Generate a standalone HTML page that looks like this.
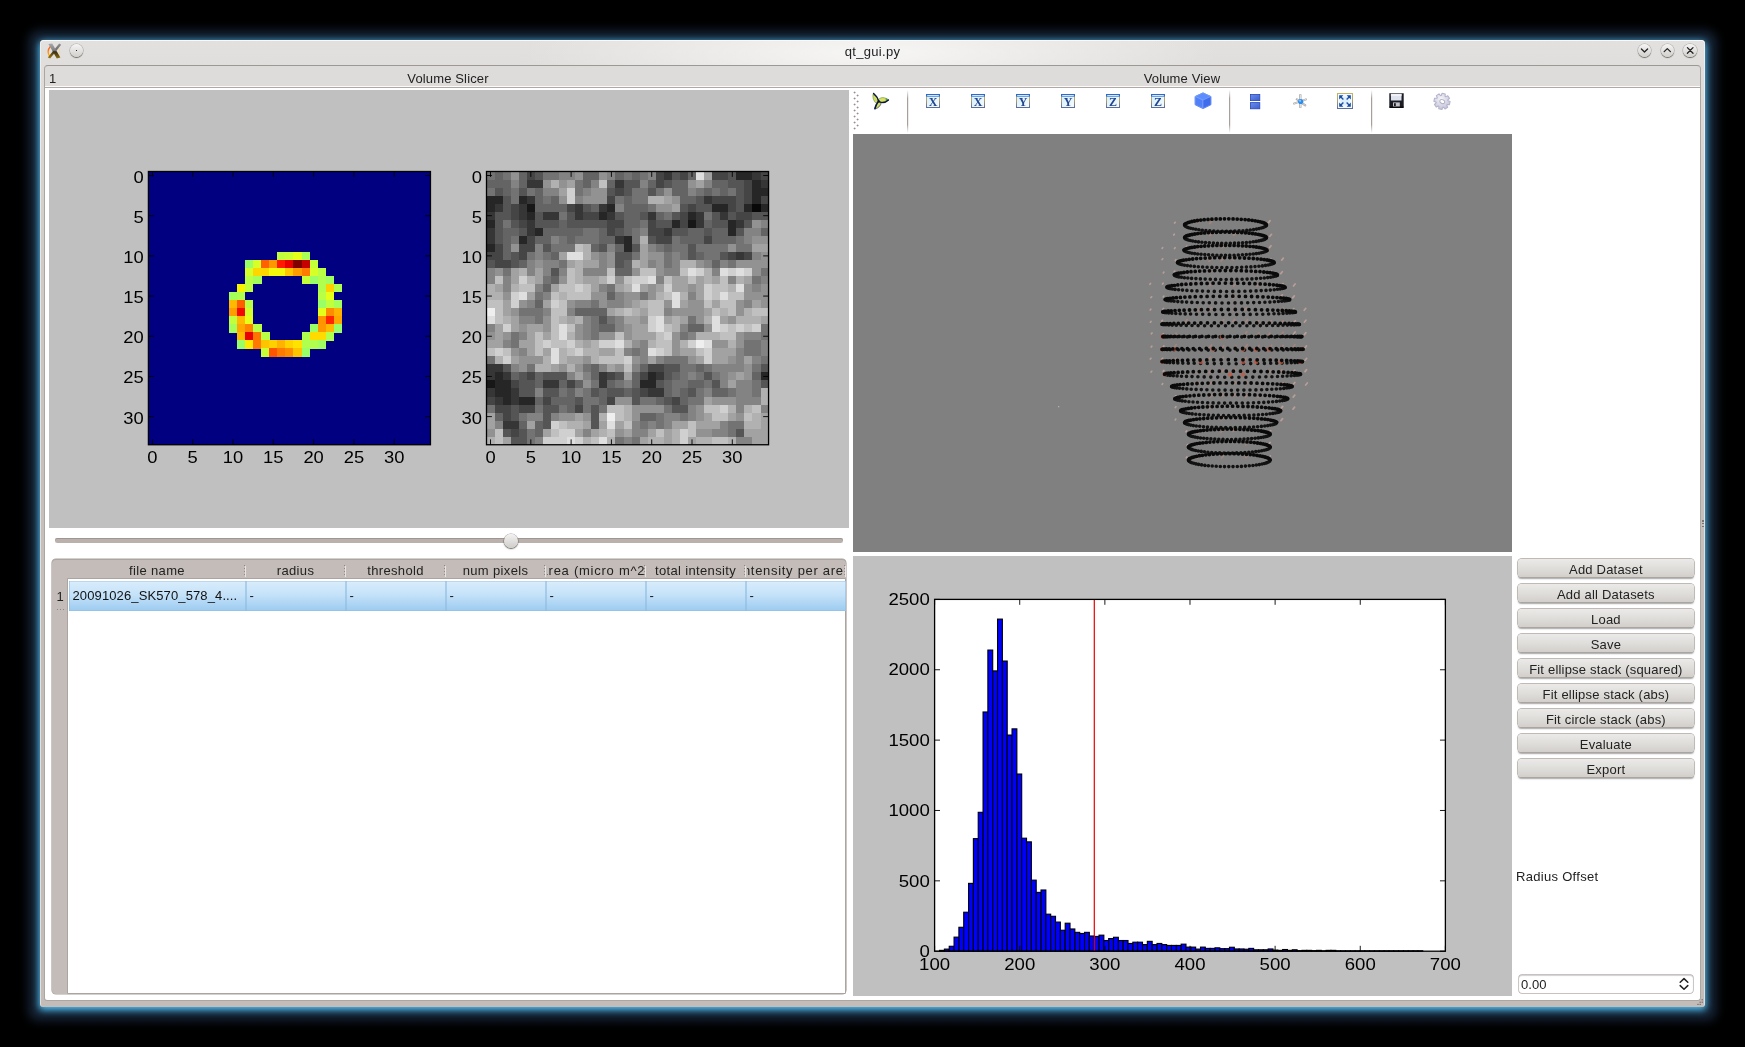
<!DOCTYPE html>
<html><head><meta charset="utf-8"><title>qt_gui.py</title>
<style>

html,body{margin:0;padding:0;background:#000;}
body{width:1745px;height:1047px;position:relative;overflow:hidden;font-family:"Liberation Sans",sans-serif;color:#222;}
.abs{position:absolute;}
#win{will-change:transform;position:absolute;left:40px;top:40px;width:1665px;height:967px;border-radius:4px 4px 3px 3px;
 background:linear-gradient(to bottom,#e3e1df 0px,#dddad8 60px,#d2ceca 180px,#c7c0bc 420px,#c4bcb8 700px,#c4bcb8 100%);
 box-shadow:inset 1px 0 0 rgba(255,250,246,0.55),inset -1px 0 0 rgba(255,250,246,0.55),inset 0 1px 0 rgba(255,255,255,0.8),0 2px 7.7px 0.8px rgb(83,197,250),0 2px 9.9px 11.5px rgb(21,34,51);}
#title{position:absolute;left:0;top:0;width:1665px;height:25px;text-align:center;font-size:13px;line-height:23px;letter-spacing:0.3px;color:#222;}
#inner{position:absolute;left:4px;top:25px;width:1657px;height:936px;border:1px solid #aca6a2;border-top-color:#9c9894;border-radius:4px 4px 3px 3px;box-sizing:border-box;background:#dedcda;}
#white{position:absolute;left:5px;top:47px;width:1655px;height:913.4px;background:#fff;border-top:1px solid #b2a8a3;box-shadow:0 -1px 0 #fbfafa;box-sizing:border-box;border-radius:0 0 3px 3px;}
.hdr{position:absolute;top:30.6px;font-size:13px;line-height:16px;color:#222;white-space:nowrap;letter-spacing:0.15px;}
.wbtn{position:absolute;top:3.5px;width:13.6px;height:13.6px;border-radius:50%;background:linear-gradient(to bottom,#f6f5f4,#d2cfcc);box-shadow:0 1px 1px rgba(0,0,0,0.45),0 0 0 0.5px rgba(120,115,110,0.5);}

#lc{position:absolute;left:9px;top:50px;width:800px;height:438px;}
.tk{font-family:"Liberation Sans",sans-serif;font-size:16.7px;fill:#000;}

#tb{position:absolute;left:813px;top:50px;width:660px;height:44px;}
#scene{position:absolute;left:813px;top:94px;width:659px;height:417.5px;background:#808080;}

#hc{position:absolute;left:813px;top:516px;width:659px;height:440px;}

#groove{position:absolute;left:15px;top:498.4px;width:788px;height:4.6px;border-radius:2.3px;background:#bab1ad;box-shadow:inset 0 1px 0.5px #9e9692;}
#knob{position:absolute;left:463.6px;top:493.6px;width:14px;height:14px;border-radius:50%;background:linear-gradient(to bottom,#f4f3f2,#cfccc9);box-shadow:0 1px 1.5px rgba(0,0,0,0.5),0 0 0 0.6px rgba(110,105,100,0.6);}
#tbl{position:absolute;left:11.5px;top:518.6px;width:794.5px;height:435px;background:#c4bcb8;border-radius:4px;box-shadow:0 0 0 0.6px #aaa29e,inset 0 1px 0 #aca4a0;}
#tbody{position:absolute;left:16.2px;top:20.6px;width:777.8px;height:413.8px;background:#fff;box-shadow:0 0 0 0.7px #a39b97;}
#vhdr{position:absolute;left:0;top:22px;width:15.4px;height:413px;}
.th{position:absolute;top:3.6px;height:18px;line-height:18px;font-size:13px;letter-spacing:0.35px;color:#222;text-align:center;white-space:nowrap;overflow:hidden;}
.grip{position:absolute;top:6px;width:1px;height:11px;background:repeating-linear-gradient(to bottom,#8f8783 0 1px,transparent 1px 3px);box-shadow:1px 1px 0 rgba(255,255,255,0.6);}
.td{position:absolute;top:22.2px;height:29.8px;background:linear-gradient(to bottom,#d9edfc 0%,#c5e2f9 45%,#9ccbf0 100%);font-size:13px;line-height:30px;letter-spacing:0.12px;color:#111;box-shadow:inset 0 0 0 0.6px #8fbbe0, inset 0 1px 0 #e6f3fd;white-space:nowrap;overflow:hidden;}
.td span{padding-left:4px;}

.btn{position:absolute;left:1477.8px;width:176.2px;height:18.4px;border-radius:3.5px;background:linear-gradient(to bottom,#eceae8 0%,#e0dedb 50%,#d2cfcb 100%);
 box-shadow:0 0 0 0.7px #aaa49f,0 1.2px 1.5px rgba(0,0,0,0.35);font-size:13px;line-height:21.6px;overflow:hidden;text-align:center;color:#222;letter-spacing:0.2px;white-space:nowrap;}
#rlabel{position:absolute;left:1476px;top:828.6px;font-size:13px;line-height:16px;color:#222;letter-spacing:0.3px;}
#spin{position:absolute;left:1478.8px;top:935.2px;width:174px;height:18.3px;border-radius:3px;background:#fff;box-shadow:0 0 0 0.7px #b5afab, inset 0 1px 1px rgba(0,0,0,0.18);font-size:13px;line-height:20.4px;color:#222;}

</style></head>
<body>
<div id="win">
<div class="abs" style="left:482px;top:1px;width:700px;height:24px;background:radial-gradient(ellipse 50% 220% at 50% 50%,rgba(255,255,255,0.72),rgba(255,255,255,0.35) 50%,rgba(255,255,255,0) 100%)"></div>
<div id="title">qt_gui.py</div>
<svg class="abs" style="left:5px;top:1px" width="20" height="20" viewBox="0 0 20 20">
 <defs><linearGradient id="xg1" x1="0" y1="0" x2="0" y2="1"><stop offset="0" stop-color="#a8a8a8"/><stop offset="0.45" stop-color="#808080"/><stop offset="0.55" stop-color="#3a2c14"/><stop offset="1" stop-color="#8a6c10"/></linearGradient>
 <linearGradient id="xg2" x1="0" y1="0" x2="0" y2="1"><stop offset="0" stop-color="#8e8e8e"/><stop offset="0.45" stop-color="#6c6c6c"/><stop offset="0.55" stop-color="#4a3418"/><stop offset="1" stop-color="#a07c14"/></linearGradient>
 <linearGradient id="xo" x1="0" y1="0" x2="0" y2="1"><stop offset="0" stop-color="#ff5a30"/><stop offset="0.6" stop-color="#ff8c00"/><stop offset="1" stop-color="#ffd820"/></linearGradient></defs>
 <path d="M5.6 5.2 C2.4 8.6 2.5 13 5.4 16.2" stroke="url(#xo)" stroke-width="1.5" fill="none" stroke-linecap="round"/>
 <path d="M12.4 5.6 C15.4 8.6 15.4 13 12.8 16" stroke="#ffcf70" stroke-width="0.8" fill="none" opacity="0.7"/>
 <path d="M14.2 2.6 L16.2 3.8 L5.2 17.4 L2.8 16.4Z" fill="url(#xg2)"/>
 <path d="M3.4 2.9 L7.2 2.6 L15.4 16.6 L11.8 17.4Z" fill="url(#xg1)"/>
</svg>
<div class="wbtn" style="left:29.6px"></div><div class="abs" style="left:35.8px;top:9.8px;width:1.3px;height:1.3px;background:#222"></div>
<div class="wbtn" style="left:1597.7px"></div>
<div class="wbtn" style="left:1620.5px"></div>
<div class="wbtn" style="left:1643.4px"></div>
<svg class="abs" style="left:1597px;top:3px" width="62" height="15" viewBox="0 0 62 15" fill="none" stroke="#222" stroke-width="1.3" stroke-linecap="round" stroke-linejoin="round">
 <path d="M4.4 6 L7.5 9 L10.6 6"/>
 <path d="M27.2 8.6 L30.3 5.6 L33.4 8.6"/>
 <path d="M50.4 4.6 L56 10.2 M56 4.6 L50.4 10.2"/>
</svg>
<div id="inner"></div>
<div id="white"></div>
<div class="hdr" style="left:9px">1</div>
<div class="hdr" style="left:308px;width:200px;text-align:center">Volume Slicer</div>
<div class="hdr" style="left:1042px;width:200px;text-align:center">Volume View</div>
<svg id="lc" viewBox="0 0 800 438" shape-rendering="crispEdges">
<rect width="800" height="438" fill="#c0c0c0"/>
<rect x="99.40" y="81.50" width="282.06" height="273.25" fill="#000080"/>
<rect x="228.34" y="161.87" width="8.36" height="8.34" fill="#c0ff3e"/>
<rect x="236.40" y="161.87" width="8.36" height="8.34" fill="#c8ff35"/>
<rect x="244.46" y="161.87" width="8.36" height="8.34" fill="#e4ff1a"/>
<rect x="252.52" y="161.87" width="8.36" height="8.34" fill="#a8ff55"/>
<rect x="196.11" y="169.90" width="8.36" height="8.34" fill="#9aff66"/>
<rect x="204.17" y="169.90" width="8.36" height="8.34" fill="#d7ff28"/>
<rect x="212.23" y="169.90" width="8.36" height="8.34" fill="#ff6000"/>
<rect x="220.28" y="169.90" width="8.36" height="8.34" fill="#ff9800"/>
<rect x="228.34" y="169.90" width="8.36" height="8.34" fill="#ff1a00"/>
<rect x="236.40" y="169.90" width="8.36" height="8.34" fill="#e80000"/>
<rect x="244.46" y="169.90" width="8.36" height="8.34" fill="#800000"/>
<rect x="252.52" y="169.90" width="8.36" height="8.34" fill="#c40000"/>
<rect x="260.58" y="169.90" width="8.36" height="8.34" fill="#c4ff3a"/>
<rect x="196.11" y="177.94" width="8.36" height="8.34" fill="#d4ff2a"/>
<rect x="204.17" y="177.94" width="8.36" height="8.34" fill="#ffd700"/>
<rect x="212.23" y="177.94" width="8.36" height="8.34" fill="#ffd500"/>
<rect x="220.28" y="177.94" width="8.36" height="8.34" fill="#f4f80a"/>
<rect x="228.34" y="177.94" width="8.36" height="8.34" fill="#f4f80a"/>
<rect x="236.40" y="177.94" width="8.36" height="8.34" fill="#ffc800"/>
<rect x="244.46" y="177.94" width="8.36" height="8.34" fill="#ff9c00"/>
<rect x="252.52" y="177.94" width="8.36" height="8.34" fill="#ff7a00"/>
<rect x="260.58" y="177.94" width="8.36" height="8.34" fill="#d7ff28"/>
<rect x="268.64" y="177.94" width="8.36" height="8.34" fill="#b8ff46"/>
<rect x="196.11" y="185.98" width="8.36" height="8.34" fill="#b8ff46"/>
<rect x="204.17" y="185.98" width="8.36" height="8.34" fill="#a4ff5a"/>
<rect x="252.52" y="185.98" width="8.36" height="8.34" fill="#c4ff3a"/>
<rect x="260.58" y="185.98" width="8.36" height="8.34" fill="#9aff66"/>
<rect x="268.64" y="185.98" width="8.36" height="8.34" fill="#b0ff4e"/>
<rect x="276.70" y="185.98" width="8.36" height="8.34" fill="#a0ff5e"/>
<rect x="188.05" y="194.02" width="8.36" height="8.34" fill="#f8f400"/>
<rect x="196.11" y="194.02" width="8.36" height="8.34" fill="#c0ff3e"/>
<rect x="268.64" y="194.02" width="8.36" height="8.34" fill="#b0ff4e"/>
<rect x="276.70" y="194.02" width="8.36" height="8.34" fill="#ffd000"/>
<rect x="284.76" y="194.02" width="8.36" height="8.34" fill="#b0ff4e"/>
<rect x="179.99" y="202.05" width="8.36" height="8.34" fill="#a4ff5a"/>
<rect x="188.05" y="202.05" width="8.36" height="8.34" fill="#b0ff4e"/>
<rect x="268.64" y="202.05" width="8.36" height="8.34" fill="#b8ff46"/>
<rect x="276.70" y="202.05" width="8.36" height="8.34" fill="#e4ff1a"/>
<rect x="179.99" y="210.09" width="8.36" height="8.34" fill="#ffb900"/>
<rect x="188.05" y="210.09" width="8.36" height="8.34" fill="#ff5d00"/>
<rect x="196.11" y="210.09" width="8.36" height="8.34" fill="#b8ff46"/>
<rect x="268.64" y="210.09" width="8.36" height="8.34" fill="#9aff66"/>
<rect x="276.70" y="210.09" width="8.36" height="8.34" fill="#c0ff3e"/>
<rect x="284.76" y="210.09" width="8.36" height="8.34" fill="#a4ff5a"/>
<rect x="179.99" y="218.13" width="8.36" height="8.34" fill="#ff9c00"/>
<rect x="188.05" y="218.13" width="8.36" height="8.34" fill="#f10800"/>
<rect x="196.11" y="218.13" width="8.36" height="8.34" fill="#d4ff2a"/>
<rect x="268.64" y="218.13" width="8.36" height="8.34" fill="#e4ff1a"/>
<rect x="276.70" y="218.13" width="8.36" height="8.34" fill="#ff8d00"/>
<rect x="284.76" y="218.13" width="8.36" height="8.34" fill="#ffb200"/>
<rect x="179.99" y="226.16" width="8.36" height="8.34" fill="#c0ff3e"/>
<rect x="188.05" y="226.16" width="8.36" height="8.34" fill="#ffb900"/>
<rect x="196.11" y="226.16" width="8.36" height="8.34" fill="#e4ff1a"/>
<rect x="268.64" y="226.16" width="8.36" height="8.34" fill="#ff9400"/>
<rect x="276.70" y="226.16" width="8.36" height="8.34" fill="#ff2500"/>
<rect x="284.76" y="226.16" width="8.36" height="8.34" fill="#ffa700"/>
<rect x="179.99" y="234.20" width="8.36" height="8.34" fill="#a4ff5a"/>
<rect x="188.05" y="234.20" width="8.36" height="8.34" fill="#ffa700"/>
<rect x="196.11" y="234.20" width="8.36" height="8.34" fill="#ff8200"/>
<rect x="204.17" y="234.20" width="8.36" height="8.34" fill="#b8ff46"/>
<rect x="260.58" y="234.20" width="8.36" height="8.34" fill="#9aff66"/>
<rect x="268.64" y="234.20" width="8.36" height="8.34" fill="#ff9800"/>
<rect x="276.70" y="234.20" width="8.36" height="8.34" fill="#ffb900"/>
<rect x="284.76" y="234.20" width="8.36" height="8.34" fill="#9aff66"/>
<rect x="188.05" y="242.24" width="8.36" height="8.34" fill="#ffb900"/>
<rect x="196.11" y="242.24" width="8.36" height="8.34" fill="#e80000"/>
<rect x="204.17" y="242.24" width="8.36" height="8.34" fill="#ff7300"/>
<rect x="212.23" y="242.24" width="8.36" height="8.34" fill="#b8ff46"/>
<rect x="252.52" y="242.24" width="8.36" height="8.34" fill="#b0ff4e"/>
<rect x="260.58" y="242.24" width="8.36" height="8.34" fill="#ffdb00"/>
<rect x="268.64" y="242.24" width="8.36" height="8.34" fill="#ffdb00"/>
<rect x="276.70" y="242.24" width="8.36" height="8.34" fill="#b0ff4e"/>
<rect x="188.05" y="250.27" width="8.36" height="8.34" fill="#9aff66"/>
<rect x="196.11" y="250.27" width="8.36" height="8.34" fill="#ffea00"/>
<rect x="204.17" y="250.27" width="8.36" height="8.34" fill="#ff7a00"/>
<rect x="212.23" y="250.27" width="8.36" height="8.34" fill="#ffc400"/>
<rect x="220.28" y="250.27" width="8.36" height="8.34" fill="#ffd000"/>
<rect x="228.34" y="250.27" width="8.36" height="8.34" fill="#ffb200"/>
<rect x="236.40" y="250.27" width="8.36" height="8.34" fill="#ffd300"/>
<rect x="244.46" y="250.27" width="8.36" height="8.34" fill="#ffe200"/>
<rect x="252.52" y="250.27" width="8.36" height="8.34" fill="#b0ff4e"/>
<rect x="260.58" y="250.27" width="8.36" height="8.34" fill="#b0ff4e"/>
<rect x="268.64" y="250.27" width="8.36" height="8.34" fill="#a0ff5e"/>
<rect x="212.23" y="258.31" width="8.36" height="8.34" fill="#c8ff35"/>
<rect x="220.28" y="258.31" width="8.36" height="8.34" fill="#ff5500"/>
<rect x="228.34" y="258.31" width="8.36" height="8.34" fill="#ff7a00"/>
<rect x="236.40" y="258.31" width="8.36" height="8.34" fill="#ff8d00"/>
<rect x="244.46" y="258.31" width="8.36" height="8.34" fill="#ffc400"/>
<rect x="252.52" y="258.31" width="8.36" height="8.34" fill="#9aff66"/>
<rect x="437.50" y="81.50" width="8.36" height="8.34" fill="rgb(115,115,115)"/>
<rect x="445.56" y="81.50" width="8.36" height="8.34" fill="rgb(100,100,100)"/>
<rect x="453.62" y="81.50" width="8.36" height="8.34" fill="rgb(115,115,115)"/>
<rect x="461.68" y="81.50" width="8.36" height="8.34" fill="rgb(146,146,146)"/>
<rect x="469.74" y="81.50" width="8.36" height="8.34" fill="rgb(100,100,100)"/>
<rect x="477.80" y="81.50" width="8.36" height="8.34" fill="rgb(69,69,69)"/>
<rect x="485.85" y="81.50" width="8.36" height="8.34" fill="rgb(85,85,85)"/>
<rect x="493.91" y="81.50" width="8.36" height="8.34" fill="rgb(115,115,115)"/>
<rect x="501.97" y="81.50" width="8.36" height="8.34" fill="rgb(115,115,115)"/>
<rect x="510.03" y="81.50" width="8.36" height="8.34" fill="rgb(131,131,131)"/>
<rect x="518.09" y="81.50" width="8.36" height="8.34" fill="rgb(131,131,131)"/>
<rect x="526.15" y="81.50" width="8.36" height="8.34" fill="rgb(146,146,146)"/>
<rect x="534.21" y="81.50" width="8.36" height="8.34" fill="rgb(100,100,100)"/>
<rect x="542.27" y="81.50" width="8.36" height="8.34" fill="rgb(100,100,100)"/>
<rect x="550.33" y="81.50" width="8.36" height="8.34" fill="rgb(146,146,146)"/>
<rect x="558.38" y="81.50" width="8.36" height="8.34" fill="rgb(131,131,131)"/>
<rect x="566.44" y="81.50" width="8.36" height="8.34" fill="rgb(100,100,100)"/>
<rect x="574.50" y="81.50" width="8.36" height="8.34" fill="rgb(115,115,115)"/>
<rect x="582.56" y="81.50" width="8.36" height="8.34" fill="rgb(100,100,100)"/>
<rect x="590.62" y="81.50" width="8.36" height="8.34" fill="rgb(115,115,115)"/>
<rect x="598.68" y="81.50" width="8.36" height="8.34" fill="rgb(131,131,131)"/>
<rect x="606.74" y="81.50" width="8.36" height="8.34" fill="rgb(69,69,69)"/>
<rect x="614.80" y="81.50" width="8.36" height="8.34" fill="rgb(54,54,54)"/>
<rect x="622.86" y="81.50" width="8.36" height="8.34" fill="rgb(85,85,85)"/>
<rect x="630.92" y="81.50" width="8.36" height="8.34" fill="rgb(69,69,69)"/>
<rect x="638.98" y="81.50" width="8.36" height="8.34" fill="rgb(100,100,100)"/>
<rect x="647.03" y="81.50" width="8.36" height="8.34" fill="rgb(223,223,223)"/>
<rect x="655.09" y="81.50" width="8.36" height="8.34" fill="rgb(162,162,162)"/>
<rect x="663.15" y="81.50" width="8.36" height="8.34" fill="rgb(69,69,69)"/>
<rect x="671.21" y="81.50" width="8.36" height="8.34" fill="rgb(69,69,69)"/>
<rect x="679.27" y="81.50" width="8.36" height="8.34" fill="rgb(85,85,85)"/>
<rect x="687.33" y="81.50" width="8.36" height="8.34" fill="rgb(38,38,38)"/>
<rect x="695.39" y="81.50" width="8.36" height="8.34" fill="rgb(38,38,38)"/>
<rect x="703.45" y="81.50" width="8.36" height="8.34" fill="rgb(54,54,54)"/>
<rect x="711.51" y="81.50" width="8.36" height="8.34" fill="rgb(69,69,69)"/>
<rect x="437.50" y="89.54" width="8.36" height="8.34" fill="rgb(100,100,100)"/>
<rect x="445.56" y="89.54" width="8.36" height="8.34" fill="rgb(100,100,100)"/>
<rect x="453.62" y="89.54" width="8.36" height="8.34" fill="rgb(100,100,100)"/>
<rect x="461.68" y="89.54" width="8.36" height="8.34" fill="rgb(131,131,131)"/>
<rect x="469.74" y="89.54" width="8.36" height="8.34" fill="rgb(100,100,100)"/>
<rect x="477.80" y="89.54" width="8.36" height="8.34" fill="rgb(54,54,54)"/>
<rect x="485.85" y="89.54" width="8.36" height="8.34" fill="rgb(54,54,54)"/>
<rect x="493.91" y="89.54" width="8.36" height="8.34" fill="rgb(146,146,146)"/>
<rect x="501.97" y="89.54" width="8.36" height="8.34" fill="rgb(177,177,177)"/>
<rect x="510.03" y="89.54" width="8.36" height="8.34" fill="rgb(146,146,146)"/>
<rect x="518.09" y="89.54" width="8.36" height="8.34" fill="rgb(162,162,162)"/>
<rect x="526.15" y="89.54" width="8.36" height="8.34" fill="rgb(115,115,115)"/>
<rect x="534.21" y="89.54" width="8.36" height="8.34" fill="rgb(100,100,100)"/>
<rect x="542.27" y="89.54" width="8.36" height="8.34" fill="rgb(131,131,131)"/>
<rect x="550.33" y="89.54" width="8.36" height="8.34" fill="rgb(192,192,192)"/>
<rect x="558.38" y="89.54" width="8.36" height="8.34" fill="rgb(100,100,100)"/>
<rect x="566.44" y="89.54" width="8.36" height="8.34" fill="rgb(54,54,54)"/>
<rect x="574.50" y="89.54" width="8.36" height="8.34" fill="rgb(85,85,85)"/>
<rect x="582.56" y="89.54" width="8.36" height="8.34" fill="rgb(85,85,85)"/>
<rect x="590.62" y="89.54" width="8.36" height="8.34" fill="rgb(131,131,131)"/>
<rect x="598.68" y="89.54" width="8.36" height="8.34" fill="rgb(100,100,100)"/>
<rect x="606.74" y="89.54" width="8.36" height="8.34" fill="rgb(69,69,69)"/>
<rect x="614.80" y="89.54" width="8.36" height="8.34" fill="rgb(85,85,85)"/>
<rect x="622.86" y="89.54" width="8.36" height="8.34" fill="rgb(100,100,100)"/>
<rect x="630.92" y="89.54" width="8.36" height="8.34" fill="rgb(100,100,100)"/>
<rect x="638.98" y="89.54" width="8.36" height="8.34" fill="rgb(146,146,146)"/>
<rect x="647.03" y="89.54" width="8.36" height="8.34" fill="rgb(162,162,162)"/>
<rect x="655.09" y="89.54" width="8.36" height="8.34" fill="rgb(131,131,131)"/>
<rect x="663.15" y="89.54" width="8.36" height="8.34" fill="rgb(100,100,100)"/>
<rect x="671.21" y="89.54" width="8.36" height="8.34" fill="rgb(100,100,100)"/>
<rect x="679.27" y="89.54" width="8.36" height="8.34" fill="rgb(85,85,85)"/>
<rect x="687.33" y="89.54" width="8.36" height="8.34" fill="rgb(85,85,85)"/>
<rect x="695.39" y="89.54" width="8.36" height="8.34" fill="rgb(69,69,69)"/>
<rect x="703.45" y="89.54" width="8.36" height="8.34" fill="rgb(38,38,38)"/>
<rect x="711.51" y="89.54" width="8.36" height="8.34" fill="rgb(54,54,54)"/>
<rect x="437.50" y="97.57" width="8.36" height="8.34" fill="rgb(115,115,115)"/>
<rect x="445.56" y="97.57" width="8.36" height="8.34" fill="rgb(85,85,85)"/>
<rect x="453.62" y="97.57" width="8.36" height="8.34" fill="rgb(100,100,100)"/>
<rect x="461.68" y="97.57" width="8.36" height="8.34" fill="rgb(115,115,115)"/>
<rect x="469.74" y="97.57" width="8.36" height="8.34" fill="rgb(85,85,85)"/>
<rect x="477.80" y="97.57" width="8.36" height="8.34" fill="rgb(115,115,115)"/>
<rect x="485.85" y="97.57" width="8.36" height="8.34" fill="rgb(100,100,100)"/>
<rect x="493.91" y="97.57" width="8.36" height="8.34" fill="rgb(131,131,131)"/>
<rect x="501.97" y="97.57" width="8.36" height="8.34" fill="rgb(131,131,131)"/>
<rect x="510.03" y="97.57" width="8.36" height="8.34" fill="rgb(162,162,162)"/>
<rect x="518.09" y="97.57" width="8.36" height="8.34" fill="rgb(208,208,208)"/>
<rect x="526.15" y="97.57" width="8.36" height="8.34" fill="rgb(115,115,115)"/>
<rect x="534.21" y="97.57" width="8.36" height="8.34" fill="rgb(131,131,131)"/>
<rect x="542.27" y="97.57" width="8.36" height="8.34" fill="rgb(146,146,146)"/>
<rect x="550.33" y="97.57" width="8.36" height="8.34" fill="rgb(146,146,146)"/>
<rect x="558.38" y="97.57" width="8.36" height="8.34" fill="rgb(85,85,85)"/>
<rect x="566.44" y="97.57" width="8.36" height="8.34" fill="rgb(69,69,69)"/>
<rect x="574.50" y="97.57" width="8.36" height="8.34" fill="rgb(85,85,85)"/>
<rect x="582.56" y="97.57" width="8.36" height="8.34" fill="rgb(115,115,115)"/>
<rect x="590.62" y="97.57" width="8.36" height="8.34" fill="rgb(115,115,115)"/>
<rect x="598.68" y="97.57" width="8.36" height="8.34" fill="rgb(85,85,85)"/>
<rect x="606.74" y="97.57" width="8.36" height="8.34" fill="rgb(115,115,115)"/>
<rect x="614.80" y="97.57" width="8.36" height="8.34" fill="rgb(146,146,146)"/>
<rect x="622.86" y="97.57" width="8.36" height="8.34" fill="rgb(100,100,100)"/>
<rect x="630.92" y="97.57" width="8.36" height="8.34" fill="rgb(100,100,100)"/>
<rect x="638.98" y="97.57" width="8.36" height="8.34" fill="rgb(131,131,131)"/>
<rect x="647.03" y="97.57" width="8.36" height="8.34" fill="rgb(115,115,115)"/>
<rect x="655.09" y="97.57" width="8.36" height="8.34" fill="rgb(100,100,100)"/>
<rect x="663.15" y="97.57" width="8.36" height="8.34" fill="rgb(115,115,115)"/>
<rect x="671.21" y="97.57" width="8.36" height="8.34" fill="rgb(100,100,100)"/>
<rect x="679.27" y="97.57" width="8.36" height="8.34" fill="rgb(115,115,115)"/>
<rect x="687.33" y="97.57" width="8.36" height="8.34" fill="rgb(85,85,85)"/>
<rect x="695.39" y="97.57" width="8.36" height="8.34" fill="rgb(69,69,69)"/>
<rect x="703.45" y="97.57" width="8.36" height="8.34" fill="rgb(38,38,38)"/>
<rect x="711.51" y="97.57" width="8.36" height="8.34" fill="rgb(38,38,38)"/>
<rect x="437.50" y="105.61" width="8.36" height="8.34" fill="rgb(38,38,38)"/>
<rect x="445.56" y="105.61" width="8.36" height="8.34" fill="rgb(38,38,38)"/>
<rect x="453.62" y="105.61" width="8.36" height="8.34" fill="rgb(85,85,85)"/>
<rect x="461.68" y="105.61" width="8.36" height="8.34" fill="rgb(115,115,115)"/>
<rect x="469.74" y="105.61" width="8.36" height="8.34" fill="rgb(38,38,38)"/>
<rect x="477.80" y="105.61" width="8.36" height="8.34" fill="rgb(54,54,54)"/>
<rect x="485.85" y="105.61" width="8.36" height="8.34" fill="rgb(100,100,100)"/>
<rect x="493.91" y="105.61" width="8.36" height="8.34" fill="rgb(115,115,115)"/>
<rect x="501.97" y="105.61" width="8.36" height="8.34" fill="rgb(100,100,100)"/>
<rect x="510.03" y="105.61" width="8.36" height="8.34" fill="rgb(146,146,146)"/>
<rect x="518.09" y="105.61" width="8.36" height="8.34" fill="rgb(208,208,208)"/>
<rect x="526.15" y="105.61" width="8.36" height="8.34" fill="rgb(131,131,131)"/>
<rect x="534.21" y="105.61" width="8.36" height="8.34" fill="rgb(146,146,146)"/>
<rect x="542.27" y="105.61" width="8.36" height="8.34" fill="rgb(146,146,146)"/>
<rect x="550.33" y="105.61" width="8.36" height="8.34" fill="rgb(146,146,146)"/>
<rect x="558.38" y="105.61" width="8.36" height="8.34" fill="rgb(69,69,69)"/>
<rect x="566.44" y="105.61" width="8.36" height="8.34" fill="rgb(115,115,115)"/>
<rect x="574.50" y="105.61" width="8.36" height="8.34" fill="rgb(100,100,100)"/>
<rect x="582.56" y="105.61" width="8.36" height="8.34" fill="rgb(115,115,115)"/>
<rect x="590.62" y="105.61" width="8.36" height="8.34" fill="rgb(115,115,115)"/>
<rect x="598.68" y="105.61" width="8.36" height="8.34" fill="rgb(177,177,177)"/>
<rect x="606.74" y="105.61" width="8.36" height="8.34" fill="rgb(177,177,177)"/>
<rect x="614.80" y="105.61" width="8.36" height="8.34" fill="rgb(162,162,162)"/>
<rect x="622.86" y="105.61" width="8.36" height="8.34" fill="rgb(146,146,146)"/>
<rect x="630.92" y="105.61" width="8.36" height="8.34" fill="rgb(100,100,100)"/>
<rect x="638.98" y="105.61" width="8.36" height="8.34" fill="rgb(100,100,100)"/>
<rect x="647.03" y="105.61" width="8.36" height="8.34" fill="rgb(85,85,85)"/>
<rect x="655.09" y="105.61" width="8.36" height="8.34" fill="rgb(54,54,54)"/>
<rect x="663.15" y="105.61" width="8.36" height="8.34" fill="rgb(69,69,69)"/>
<rect x="671.21" y="105.61" width="8.36" height="8.34" fill="rgb(69,69,69)"/>
<rect x="679.27" y="105.61" width="8.36" height="8.34" fill="rgb(69,69,69)"/>
<rect x="687.33" y="105.61" width="8.36" height="8.34" fill="rgb(85,85,85)"/>
<rect x="695.39" y="105.61" width="8.36" height="8.34" fill="rgb(69,69,69)"/>
<rect x="703.45" y="105.61" width="8.36" height="8.34" fill="rgb(38,38,38)"/>
<rect x="711.51" y="105.61" width="8.36" height="8.34" fill="rgb(69,69,69)"/>
<rect x="437.50" y="113.65" width="8.36" height="8.34" fill="rgb(38,38,38)"/>
<rect x="445.56" y="113.65" width="8.36" height="8.34" fill="rgb(54,54,54)"/>
<rect x="453.62" y="113.65" width="8.36" height="8.34" fill="rgb(85,85,85)"/>
<rect x="461.68" y="113.65" width="8.36" height="8.34" fill="rgb(69,69,69)"/>
<rect x="469.74" y="113.65" width="8.36" height="8.34" fill="rgb(54,54,54)"/>
<rect x="477.80" y="113.65" width="8.36" height="8.34" fill="rgb(23,23,23)"/>
<rect x="485.85" y="113.65" width="8.36" height="8.34" fill="rgb(100,100,100)"/>
<rect x="493.91" y="113.65" width="8.36" height="8.34" fill="rgb(100,100,100)"/>
<rect x="501.97" y="113.65" width="8.36" height="8.34" fill="rgb(100,100,100)"/>
<rect x="510.03" y="113.65" width="8.36" height="8.34" fill="rgb(100,100,100)"/>
<rect x="518.09" y="113.65" width="8.36" height="8.34" fill="rgb(69,69,69)"/>
<rect x="526.15" y="113.65" width="8.36" height="8.34" fill="rgb(54,54,54)"/>
<rect x="534.21" y="113.65" width="8.36" height="8.34" fill="rgb(85,85,85)"/>
<rect x="542.27" y="113.65" width="8.36" height="8.34" fill="rgb(100,100,100)"/>
<rect x="550.33" y="113.65" width="8.36" height="8.34" fill="rgb(54,54,54)"/>
<rect x="558.38" y="113.65" width="8.36" height="8.34" fill="rgb(38,38,38)"/>
<rect x="566.44" y="113.65" width="8.36" height="8.34" fill="rgb(131,131,131)"/>
<rect x="574.50" y="113.65" width="8.36" height="8.34" fill="rgb(100,100,100)"/>
<rect x="582.56" y="113.65" width="8.36" height="8.34" fill="rgb(100,100,100)"/>
<rect x="590.62" y="113.65" width="8.36" height="8.34" fill="rgb(100,100,100)"/>
<rect x="598.68" y="113.65" width="8.36" height="8.34" fill="rgb(115,115,115)"/>
<rect x="606.74" y="113.65" width="8.36" height="8.34" fill="rgb(146,146,146)"/>
<rect x="614.80" y="113.65" width="8.36" height="8.34" fill="rgb(146,146,146)"/>
<rect x="622.86" y="113.65" width="8.36" height="8.34" fill="rgb(162,162,162)"/>
<rect x="630.92" y="113.65" width="8.36" height="8.34" fill="rgb(85,85,85)"/>
<rect x="638.98" y="113.65" width="8.36" height="8.34" fill="rgb(69,69,69)"/>
<rect x="647.03" y="113.65" width="8.36" height="8.34" fill="rgb(85,85,85)"/>
<rect x="655.09" y="113.65" width="8.36" height="8.34" fill="rgb(85,85,85)"/>
<rect x="663.15" y="113.65" width="8.36" height="8.34" fill="rgb(38,38,38)"/>
<rect x="671.21" y="113.65" width="8.36" height="8.34" fill="rgb(38,38,38)"/>
<rect x="679.27" y="113.65" width="8.36" height="8.34" fill="rgb(69,69,69)"/>
<rect x="687.33" y="113.65" width="8.36" height="8.34" fill="rgb(85,85,85)"/>
<rect x="695.39" y="113.65" width="8.36" height="8.34" fill="rgb(38,38,38)"/>
<rect x="703.45" y="113.65" width="8.36" height="8.34" fill="rgb(8,8,8)"/>
<rect x="711.51" y="113.65" width="8.36" height="8.34" fill="rgb(38,38,38)"/>
<rect x="437.50" y="121.68" width="8.36" height="8.34" fill="rgb(54,54,54)"/>
<rect x="445.56" y="121.68" width="8.36" height="8.34" fill="rgb(85,85,85)"/>
<rect x="453.62" y="121.68" width="8.36" height="8.34" fill="rgb(85,85,85)"/>
<rect x="461.68" y="121.68" width="8.36" height="8.34" fill="rgb(69,69,69)"/>
<rect x="469.74" y="121.68" width="8.36" height="8.34" fill="rgb(54,54,54)"/>
<rect x="477.80" y="121.68" width="8.36" height="8.34" fill="rgb(38,38,38)"/>
<rect x="485.85" y="121.68" width="8.36" height="8.34" fill="rgb(85,85,85)"/>
<rect x="493.91" y="121.68" width="8.36" height="8.34" fill="rgb(54,54,54)"/>
<rect x="501.97" y="121.68" width="8.36" height="8.34" fill="rgb(54,54,54)"/>
<rect x="510.03" y="121.68" width="8.36" height="8.34" fill="rgb(115,115,115)"/>
<rect x="518.09" y="121.68" width="8.36" height="8.34" fill="rgb(85,85,85)"/>
<rect x="526.15" y="121.68" width="8.36" height="8.34" fill="rgb(54,54,54)"/>
<rect x="534.21" y="121.68" width="8.36" height="8.34" fill="rgb(69,69,69)"/>
<rect x="542.27" y="121.68" width="8.36" height="8.34" fill="rgb(69,69,69)"/>
<rect x="550.33" y="121.68" width="8.36" height="8.34" fill="rgb(38,38,38)"/>
<rect x="558.38" y="121.68" width="8.36" height="8.34" fill="rgb(54,54,54)"/>
<rect x="566.44" y="121.68" width="8.36" height="8.34" fill="rgb(85,85,85)"/>
<rect x="574.50" y="121.68" width="8.36" height="8.34" fill="rgb(100,100,100)"/>
<rect x="582.56" y="121.68" width="8.36" height="8.34" fill="rgb(100,100,100)"/>
<rect x="590.62" y="121.68" width="8.36" height="8.34" fill="rgb(85,85,85)"/>
<rect x="598.68" y="121.68" width="8.36" height="8.34" fill="rgb(54,54,54)"/>
<rect x="606.74" y="121.68" width="8.36" height="8.34" fill="rgb(100,100,100)"/>
<rect x="614.80" y="121.68" width="8.36" height="8.34" fill="rgb(115,115,115)"/>
<rect x="622.86" y="121.68" width="8.36" height="8.34" fill="rgb(85,85,85)"/>
<rect x="630.92" y="121.68" width="8.36" height="8.34" fill="rgb(69,69,69)"/>
<rect x="638.98" y="121.68" width="8.36" height="8.34" fill="rgb(38,38,38)"/>
<rect x="647.03" y="121.68" width="8.36" height="8.34" fill="rgb(54,54,54)"/>
<rect x="655.09" y="121.68" width="8.36" height="8.34" fill="rgb(115,115,115)"/>
<rect x="663.15" y="121.68" width="8.36" height="8.34" fill="rgb(85,85,85)"/>
<rect x="671.21" y="121.68" width="8.36" height="8.34" fill="rgb(54,54,54)"/>
<rect x="679.27" y="121.68" width="8.36" height="8.34" fill="rgb(85,85,85)"/>
<rect x="687.33" y="121.68" width="8.36" height="8.34" fill="rgb(69,69,69)"/>
<rect x="695.39" y="121.68" width="8.36" height="8.34" fill="rgb(69,69,69)"/>
<rect x="703.45" y="121.68" width="8.36" height="8.34" fill="rgb(85,85,85)"/>
<rect x="711.51" y="121.68" width="8.36" height="8.34" fill="rgb(85,85,85)"/>
<rect x="437.50" y="129.72" width="8.36" height="8.34" fill="rgb(38,38,38)"/>
<rect x="445.56" y="129.72" width="8.36" height="8.34" fill="rgb(85,85,85)"/>
<rect x="453.62" y="129.72" width="8.36" height="8.34" fill="rgb(115,115,115)"/>
<rect x="461.68" y="129.72" width="8.36" height="8.34" fill="rgb(85,85,85)"/>
<rect x="469.74" y="129.72" width="8.36" height="8.34" fill="rgb(69,69,69)"/>
<rect x="477.80" y="129.72" width="8.36" height="8.34" fill="rgb(54,54,54)"/>
<rect x="485.85" y="129.72" width="8.36" height="8.34" fill="rgb(85,85,85)"/>
<rect x="493.91" y="129.72" width="8.36" height="8.34" fill="rgb(85,85,85)"/>
<rect x="501.97" y="129.72" width="8.36" height="8.34" fill="rgb(85,85,85)"/>
<rect x="510.03" y="129.72" width="8.36" height="8.34" fill="rgb(100,100,100)"/>
<rect x="518.09" y="129.72" width="8.36" height="8.34" fill="rgb(85,85,85)"/>
<rect x="526.15" y="129.72" width="8.36" height="8.34" fill="rgb(85,85,85)"/>
<rect x="534.21" y="129.72" width="8.36" height="8.34" fill="rgb(85,85,85)"/>
<rect x="542.27" y="129.72" width="8.36" height="8.34" fill="rgb(85,85,85)"/>
<rect x="550.33" y="129.72" width="8.36" height="8.34" fill="rgb(85,85,85)"/>
<rect x="558.38" y="129.72" width="8.36" height="8.34" fill="rgb(69,69,69)"/>
<rect x="566.44" y="129.72" width="8.36" height="8.34" fill="rgb(69,69,69)"/>
<rect x="574.50" y="129.72" width="8.36" height="8.34" fill="rgb(100,100,100)"/>
<rect x="582.56" y="129.72" width="8.36" height="8.34" fill="rgb(100,100,100)"/>
<rect x="590.62" y="129.72" width="8.36" height="8.34" fill="rgb(115,115,115)"/>
<rect x="598.68" y="129.72" width="8.36" height="8.34" fill="rgb(69,69,69)"/>
<rect x="606.74" y="129.72" width="8.36" height="8.34" fill="rgb(85,85,85)"/>
<rect x="614.80" y="129.72" width="8.36" height="8.34" fill="rgb(85,85,85)"/>
<rect x="622.86" y="129.72" width="8.36" height="8.34" fill="rgb(38,38,38)"/>
<rect x="630.92" y="129.72" width="8.36" height="8.34" fill="rgb(69,69,69)"/>
<rect x="638.98" y="129.72" width="8.36" height="8.34" fill="rgb(23,23,23)"/>
<rect x="647.03" y="129.72" width="8.36" height="8.34" fill="rgb(54,54,54)"/>
<rect x="655.09" y="129.72" width="8.36" height="8.34" fill="rgb(100,100,100)"/>
<rect x="663.15" y="129.72" width="8.36" height="8.34" fill="rgb(85,85,85)"/>
<rect x="671.21" y="129.72" width="8.36" height="8.34" fill="rgb(85,85,85)"/>
<rect x="679.27" y="129.72" width="8.36" height="8.34" fill="rgb(38,38,38)"/>
<rect x="687.33" y="129.72" width="8.36" height="8.34" fill="rgb(54,54,54)"/>
<rect x="695.39" y="129.72" width="8.36" height="8.34" fill="rgb(85,85,85)"/>
<rect x="703.45" y="129.72" width="8.36" height="8.34" fill="rgb(146,146,146)"/>
<rect x="711.51" y="129.72" width="8.36" height="8.34" fill="rgb(131,131,131)"/>
<rect x="437.50" y="137.76" width="8.36" height="8.34" fill="rgb(54,54,54)"/>
<rect x="445.56" y="137.76" width="8.36" height="8.34" fill="rgb(85,85,85)"/>
<rect x="453.62" y="137.76" width="8.36" height="8.34" fill="rgb(100,100,100)"/>
<rect x="461.68" y="137.76" width="8.36" height="8.34" fill="rgb(100,100,100)"/>
<rect x="469.74" y="137.76" width="8.36" height="8.34" fill="rgb(85,85,85)"/>
<rect x="477.80" y="137.76" width="8.36" height="8.34" fill="rgb(54,54,54)"/>
<rect x="485.85" y="137.76" width="8.36" height="8.34" fill="rgb(38,38,38)"/>
<rect x="493.91" y="137.76" width="8.36" height="8.34" fill="rgb(100,100,100)"/>
<rect x="501.97" y="137.76" width="8.36" height="8.34" fill="rgb(100,100,100)"/>
<rect x="510.03" y="137.76" width="8.36" height="8.34" fill="rgb(100,100,100)"/>
<rect x="518.09" y="137.76" width="8.36" height="8.34" fill="rgb(100,100,100)"/>
<rect x="526.15" y="137.76" width="8.36" height="8.34" fill="rgb(100,100,100)"/>
<rect x="534.21" y="137.76" width="8.36" height="8.34" fill="rgb(115,115,115)"/>
<rect x="542.27" y="137.76" width="8.36" height="8.34" fill="rgb(115,115,115)"/>
<rect x="550.33" y="137.76" width="8.36" height="8.34" fill="rgb(100,100,100)"/>
<rect x="558.38" y="137.76" width="8.36" height="8.34" fill="rgb(69,69,69)"/>
<rect x="566.44" y="137.76" width="8.36" height="8.34" fill="rgb(85,85,85)"/>
<rect x="574.50" y="137.76" width="8.36" height="8.34" fill="rgb(100,100,100)"/>
<rect x="582.56" y="137.76" width="8.36" height="8.34" fill="rgb(115,115,115)"/>
<rect x="590.62" y="137.76" width="8.36" height="8.34" fill="rgb(131,131,131)"/>
<rect x="598.68" y="137.76" width="8.36" height="8.34" fill="rgb(69,69,69)"/>
<rect x="606.74" y="137.76" width="8.36" height="8.34" fill="rgb(69,69,69)"/>
<rect x="614.80" y="137.76" width="8.36" height="8.34" fill="rgb(54,54,54)"/>
<rect x="622.86" y="137.76" width="8.36" height="8.34" fill="rgb(85,85,85)"/>
<rect x="630.92" y="137.76" width="8.36" height="8.34" fill="rgb(85,85,85)"/>
<rect x="638.98" y="137.76" width="8.36" height="8.34" fill="rgb(100,100,100)"/>
<rect x="647.03" y="137.76" width="8.36" height="8.34" fill="rgb(100,100,100)"/>
<rect x="655.09" y="137.76" width="8.36" height="8.34" fill="rgb(85,85,85)"/>
<rect x="663.15" y="137.76" width="8.36" height="8.34" fill="rgb(100,100,100)"/>
<rect x="671.21" y="137.76" width="8.36" height="8.34" fill="rgb(100,100,100)"/>
<rect x="679.27" y="137.76" width="8.36" height="8.34" fill="rgb(38,38,38)"/>
<rect x="687.33" y="137.76" width="8.36" height="8.34" fill="rgb(85,85,85)"/>
<rect x="695.39" y="137.76" width="8.36" height="8.34" fill="rgb(131,131,131)"/>
<rect x="703.45" y="137.76" width="8.36" height="8.34" fill="rgb(131,131,131)"/>
<rect x="711.51" y="137.76" width="8.36" height="8.34" fill="rgb(100,100,100)"/>
<rect x="437.50" y="145.79" width="8.36" height="8.34" fill="rgb(54,54,54)"/>
<rect x="445.56" y="145.79" width="8.36" height="8.34" fill="rgb(85,85,85)"/>
<rect x="453.62" y="145.79" width="8.36" height="8.34" fill="rgb(100,100,100)"/>
<rect x="461.68" y="145.79" width="8.36" height="8.34" fill="rgb(115,115,115)"/>
<rect x="469.74" y="145.79" width="8.36" height="8.34" fill="rgb(38,38,38)"/>
<rect x="477.80" y="145.79" width="8.36" height="8.34" fill="rgb(69,69,69)"/>
<rect x="485.85" y="145.79" width="8.36" height="8.34" fill="rgb(100,100,100)"/>
<rect x="493.91" y="145.79" width="8.36" height="8.34" fill="rgb(100,100,100)"/>
<rect x="501.97" y="145.79" width="8.36" height="8.34" fill="rgb(131,131,131)"/>
<rect x="510.03" y="145.79" width="8.36" height="8.34" fill="rgb(115,115,115)"/>
<rect x="518.09" y="145.79" width="8.36" height="8.34" fill="rgb(100,100,100)"/>
<rect x="526.15" y="145.79" width="8.36" height="8.34" fill="rgb(115,115,115)"/>
<rect x="534.21" y="145.79" width="8.36" height="8.34" fill="rgb(115,115,115)"/>
<rect x="542.27" y="145.79" width="8.36" height="8.34" fill="rgb(115,115,115)"/>
<rect x="550.33" y="145.79" width="8.36" height="8.34" fill="rgb(100,100,100)"/>
<rect x="558.38" y="145.79" width="8.36" height="8.34" fill="rgb(100,100,100)"/>
<rect x="566.44" y="145.79" width="8.36" height="8.34" fill="rgb(54,54,54)"/>
<rect x="574.50" y="145.79" width="8.36" height="8.34" fill="rgb(38,38,38)"/>
<rect x="582.56" y="145.79" width="8.36" height="8.34" fill="rgb(115,115,115)"/>
<rect x="590.62" y="145.79" width="8.36" height="8.34" fill="rgb(177,177,177)"/>
<rect x="598.68" y="145.79" width="8.36" height="8.34" fill="rgb(85,85,85)"/>
<rect x="606.74" y="145.79" width="8.36" height="8.34" fill="rgb(69,69,69)"/>
<rect x="614.80" y="145.79" width="8.36" height="8.34" fill="rgb(69,69,69)"/>
<rect x="622.86" y="145.79" width="8.36" height="8.34" fill="rgb(115,115,115)"/>
<rect x="630.92" y="145.79" width="8.36" height="8.34" fill="rgb(100,100,100)"/>
<rect x="638.98" y="145.79" width="8.36" height="8.34" fill="rgb(100,100,100)"/>
<rect x="647.03" y="145.79" width="8.36" height="8.34" fill="rgb(100,100,100)"/>
<rect x="655.09" y="145.79" width="8.36" height="8.34" fill="rgb(69,69,69)"/>
<rect x="663.15" y="145.79" width="8.36" height="8.34" fill="rgb(100,100,100)"/>
<rect x="671.21" y="145.79" width="8.36" height="8.34" fill="rgb(100,100,100)"/>
<rect x="679.27" y="145.79" width="8.36" height="8.34" fill="rgb(100,100,100)"/>
<rect x="687.33" y="145.79" width="8.36" height="8.34" fill="rgb(115,115,115)"/>
<rect x="695.39" y="145.79" width="8.36" height="8.34" fill="rgb(131,131,131)"/>
<rect x="703.45" y="145.79" width="8.36" height="8.34" fill="rgb(146,146,146)"/>
<rect x="711.51" y="145.79" width="8.36" height="8.34" fill="rgb(146,146,146)"/>
<rect x="437.50" y="153.83" width="8.36" height="8.34" fill="rgb(38,38,38)"/>
<rect x="445.56" y="153.83" width="8.36" height="8.34" fill="rgb(69,69,69)"/>
<rect x="453.62" y="153.83" width="8.36" height="8.34" fill="rgb(100,100,100)"/>
<rect x="461.68" y="153.83" width="8.36" height="8.34" fill="rgb(146,146,146)"/>
<rect x="469.74" y="153.83" width="8.36" height="8.34" fill="rgb(69,69,69)"/>
<rect x="477.80" y="153.83" width="8.36" height="8.34" fill="rgb(69,69,69)"/>
<rect x="485.85" y="153.83" width="8.36" height="8.34" fill="rgb(131,131,131)"/>
<rect x="493.91" y="153.83" width="8.36" height="8.34" fill="rgb(85,85,85)"/>
<rect x="501.97" y="153.83" width="8.36" height="8.34" fill="rgb(115,115,115)"/>
<rect x="510.03" y="153.83" width="8.36" height="8.34" fill="rgb(115,115,115)"/>
<rect x="518.09" y="153.83" width="8.36" height="8.34" fill="rgb(115,115,115)"/>
<rect x="526.15" y="153.83" width="8.36" height="8.34" fill="rgb(192,192,192)"/>
<rect x="534.21" y="153.83" width="8.36" height="8.34" fill="rgb(177,177,177)"/>
<rect x="542.27" y="153.83" width="8.36" height="8.34" fill="rgb(100,100,100)"/>
<rect x="550.33" y="153.83" width="8.36" height="8.34" fill="rgb(85,85,85)"/>
<rect x="558.38" y="153.83" width="8.36" height="8.34" fill="rgb(131,131,131)"/>
<rect x="566.44" y="153.83" width="8.36" height="8.34" fill="rgb(100,100,100)"/>
<rect x="574.50" y="153.83" width="8.36" height="8.34" fill="rgb(38,38,38)"/>
<rect x="582.56" y="153.83" width="8.36" height="8.34" fill="rgb(85,85,85)"/>
<rect x="590.62" y="153.83" width="8.36" height="8.34" fill="rgb(162,162,162)"/>
<rect x="598.68" y="153.83" width="8.36" height="8.34" fill="rgb(131,131,131)"/>
<rect x="606.74" y="153.83" width="8.36" height="8.34" fill="rgb(115,115,115)"/>
<rect x="614.80" y="153.83" width="8.36" height="8.34" fill="rgb(100,100,100)"/>
<rect x="622.86" y="153.83" width="8.36" height="8.34" fill="rgb(115,115,115)"/>
<rect x="630.92" y="153.83" width="8.36" height="8.34" fill="rgb(115,115,115)"/>
<rect x="638.98" y="153.83" width="8.36" height="8.34" fill="rgb(85,85,85)"/>
<rect x="647.03" y="153.83" width="8.36" height="8.34" fill="rgb(115,115,115)"/>
<rect x="655.09" y="153.83" width="8.36" height="8.34" fill="rgb(115,115,115)"/>
<rect x="663.15" y="153.83" width="8.36" height="8.34" fill="rgb(115,115,115)"/>
<rect x="671.21" y="153.83" width="8.36" height="8.34" fill="rgb(115,115,115)"/>
<rect x="679.27" y="153.83" width="8.36" height="8.34" fill="rgb(146,146,146)"/>
<rect x="687.33" y="153.83" width="8.36" height="8.34" fill="rgb(115,115,115)"/>
<rect x="695.39" y="153.83" width="8.36" height="8.34" fill="rgb(115,115,115)"/>
<rect x="703.45" y="153.83" width="8.36" height="8.34" fill="rgb(162,162,162)"/>
<rect x="711.51" y="153.83" width="8.36" height="8.34" fill="rgb(162,162,162)"/>
<rect x="437.50" y="161.87" width="8.36" height="8.34" fill="rgb(69,69,69)"/>
<rect x="445.56" y="161.87" width="8.36" height="8.34" fill="rgb(69,69,69)"/>
<rect x="453.62" y="161.87" width="8.36" height="8.34" fill="rgb(100,100,100)"/>
<rect x="461.68" y="161.87" width="8.36" height="8.34" fill="rgb(85,85,85)"/>
<rect x="469.74" y="161.87" width="8.36" height="8.34" fill="rgb(69,69,69)"/>
<rect x="477.80" y="161.87" width="8.36" height="8.34" fill="rgb(115,115,115)"/>
<rect x="485.85" y="161.87" width="8.36" height="8.34" fill="rgb(131,131,131)"/>
<rect x="493.91" y="161.87" width="8.36" height="8.34" fill="rgb(115,115,115)"/>
<rect x="501.97" y="161.87" width="8.36" height="8.34" fill="rgb(100,100,100)"/>
<rect x="510.03" y="161.87" width="8.36" height="8.34" fill="rgb(162,162,162)"/>
<rect x="518.09" y="161.87" width="8.36" height="8.34" fill="rgb(223,223,223)"/>
<rect x="526.15" y="161.87" width="8.36" height="8.34" fill="rgb(223,223,223)"/>
<rect x="534.21" y="161.87" width="8.36" height="8.34" fill="rgb(177,177,177)"/>
<rect x="542.27" y="161.87" width="8.36" height="8.34" fill="rgb(146,146,146)"/>
<rect x="550.33" y="161.87" width="8.36" height="8.34" fill="rgb(131,131,131)"/>
<rect x="558.38" y="161.87" width="8.36" height="8.34" fill="rgb(146,146,146)"/>
<rect x="566.44" y="161.87" width="8.36" height="8.34" fill="rgb(85,85,85)"/>
<rect x="574.50" y="161.87" width="8.36" height="8.34" fill="rgb(85,85,85)"/>
<rect x="582.56" y="161.87" width="8.36" height="8.34" fill="rgb(115,115,115)"/>
<rect x="590.62" y="161.87" width="8.36" height="8.34" fill="rgb(162,162,162)"/>
<rect x="598.68" y="161.87" width="8.36" height="8.34" fill="rgb(146,146,146)"/>
<rect x="606.74" y="161.87" width="8.36" height="8.34" fill="rgb(146,146,146)"/>
<rect x="614.80" y="161.87" width="8.36" height="8.34" fill="rgb(115,115,115)"/>
<rect x="622.86" y="161.87" width="8.36" height="8.34" fill="rgb(131,131,131)"/>
<rect x="630.92" y="161.87" width="8.36" height="8.34" fill="rgb(115,115,115)"/>
<rect x="638.98" y="161.87" width="8.36" height="8.34" fill="rgb(85,85,85)"/>
<rect x="647.03" y="161.87" width="8.36" height="8.34" fill="rgb(100,100,100)"/>
<rect x="655.09" y="161.87" width="8.36" height="8.34" fill="rgb(115,115,115)"/>
<rect x="663.15" y="161.87" width="8.36" height="8.34" fill="rgb(115,115,115)"/>
<rect x="671.21" y="161.87" width="8.36" height="8.34" fill="rgb(85,85,85)"/>
<rect x="679.27" y="161.87" width="8.36" height="8.34" fill="rgb(69,69,69)"/>
<rect x="687.33" y="161.87" width="8.36" height="8.34" fill="rgb(54,54,54)"/>
<rect x="695.39" y="161.87" width="8.36" height="8.34" fill="rgb(69,69,69)"/>
<rect x="703.45" y="161.87" width="8.36" height="8.34" fill="rgb(131,131,131)"/>
<rect x="711.51" y="161.87" width="8.36" height="8.34" fill="rgb(146,146,146)"/>
<rect x="437.50" y="169.90" width="8.36" height="8.34" fill="rgb(85,85,85)"/>
<rect x="445.56" y="169.90" width="8.36" height="8.34" fill="rgb(69,69,69)"/>
<rect x="453.62" y="169.90" width="8.36" height="8.34" fill="rgb(69,69,69)"/>
<rect x="461.68" y="169.90" width="8.36" height="8.34" fill="rgb(85,85,85)"/>
<rect x="469.74" y="169.90" width="8.36" height="8.34" fill="rgb(100,100,100)"/>
<rect x="477.80" y="169.90" width="8.36" height="8.34" fill="rgb(131,131,131)"/>
<rect x="485.85" y="169.90" width="8.36" height="8.34" fill="rgb(146,146,146)"/>
<rect x="493.91" y="169.90" width="8.36" height="8.34" fill="rgb(131,131,131)"/>
<rect x="501.97" y="169.90" width="8.36" height="8.34" fill="rgb(131,131,131)"/>
<rect x="510.03" y="169.90" width="8.36" height="8.34" fill="rgb(115,115,115)"/>
<rect x="518.09" y="169.90" width="8.36" height="8.34" fill="rgb(162,162,162)"/>
<rect x="526.15" y="169.90" width="8.36" height="8.34" fill="rgb(177,177,177)"/>
<rect x="534.21" y="169.90" width="8.36" height="8.34" fill="rgb(162,162,162)"/>
<rect x="542.27" y="169.90" width="8.36" height="8.34" fill="rgb(162,162,162)"/>
<rect x="550.33" y="169.90" width="8.36" height="8.34" fill="rgb(131,131,131)"/>
<rect x="558.38" y="169.90" width="8.36" height="8.34" fill="rgb(146,146,146)"/>
<rect x="566.44" y="169.90" width="8.36" height="8.34" fill="rgb(85,85,85)"/>
<rect x="574.50" y="169.90" width="8.36" height="8.34" fill="rgb(100,100,100)"/>
<rect x="582.56" y="169.90" width="8.36" height="8.34" fill="rgb(177,177,177)"/>
<rect x="590.62" y="169.90" width="8.36" height="8.34" fill="rgb(162,162,162)"/>
<rect x="598.68" y="169.90" width="8.36" height="8.34" fill="rgb(131,131,131)"/>
<rect x="606.74" y="169.90" width="8.36" height="8.34" fill="rgb(146,146,146)"/>
<rect x="614.80" y="169.90" width="8.36" height="8.34" fill="rgb(115,115,115)"/>
<rect x="622.86" y="169.90" width="8.36" height="8.34" fill="rgb(131,131,131)"/>
<rect x="630.92" y="169.90" width="8.36" height="8.34" fill="rgb(177,177,177)"/>
<rect x="638.98" y="169.90" width="8.36" height="8.34" fill="rgb(177,177,177)"/>
<rect x="647.03" y="169.90" width="8.36" height="8.34" fill="rgb(146,146,146)"/>
<rect x="655.09" y="169.90" width="8.36" height="8.34" fill="rgb(131,131,131)"/>
<rect x="663.15" y="169.90" width="8.36" height="8.34" fill="rgb(100,100,100)"/>
<rect x="671.21" y="169.90" width="8.36" height="8.34" fill="rgb(131,131,131)"/>
<rect x="679.27" y="169.90" width="8.36" height="8.34" fill="rgb(115,115,115)"/>
<rect x="687.33" y="169.90" width="8.36" height="8.34" fill="rgb(146,146,146)"/>
<rect x="695.39" y="169.90" width="8.36" height="8.34" fill="rgb(146,146,146)"/>
<rect x="703.45" y="169.90" width="8.36" height="8.34" fill="rgb(146,146,146)"/>
<rect x="711.51" y="169.90" width="8.36" height="8.34" fill="rgb(146,146,146)"/>
<rect x="437.50" y="177.94" width="8.36" height="8.34" fill="rgb(131,131,131)"/>
<rect x="445.56" y="177.94" width="8.36" height="8.34" fill="rgb(146,146,146)"/>
<rect x="453.62" y="177.94" width="8.36" height="8.34" fill="rgb(115,115,115)"/>
<rect x="461.68" y="177.94" width="8.36" height="8.34" fill="rgb(162,162,162)"/>
<rect x="469.74" y="177.94" width="8.36" height="8.34" fill="rgb(177,177,177)"/>
<rect x="477.80" y="177.94" width="8.36" height="8.34" fill="rgb(131,131,131)"/>
<rect x="485.85" y="177.94" width="8.36" height="8.34" fill="rgb(162,162,162)"/>
<rect x="493.91" y="177.94" width="8.36" height="8.34" fill="rgb(131,131,131)"/>
<rect x="501.97" y="177.94" width="8.36" height="8.34" fill="rgb(85,85,85)"/>
<rect x="510.03" y="177.94" width="8.36" height="8.34" fill="rgb(131,131,131)"/>
<rect x="518.09" y="177.94" width="8.36" height="8.34" fill="rgb(192,192,192)"/>
<rect x="526.15" y="177.94" width="8.36" height="8.34" fill="rgb(177,177,177)"/>
<rect x="534.21" y="177.94" width="8.36" height="8.34" fill="rgb(131,131,131)"/>
<rect x="542.27" y="177.94" width="8.36" height="8.34" fill="rgb(131,131,131)"/>
<rect x="550.33" y="177.94" width="8.36" height="8.34" fill="rgb(131,131,131)"/>
<rect x="558.38" y="177.94" width="8.36" height="8.34" fill="rgb(192,192,192)"/>
<rect x="566.44" y="177.94" width="8.36" height="8.34" fill="rgb(100,100,100)"/>
<rect x="574.50" y="177.94" width="8.36" height="8.34" fill="rgb(100,100,100)"/>
<rect x="582.56" y="177.94" width="8.36" height="8.34" fill="rgb(146,146,146)"/>
<rect x="590.62" y="177.94" width="8.36" height="8.34" fill="rgb(192,192,192)"/>
<rect x="598.68" y="177.94" width="8.36" height="8.34" fill="rgb(192,192,192)"/>
<rect x="606.74" y="177.94" width="8.36" height="8.34" fill="rgb(146,146,146)"/>
<rect x="614.80" y="177.94" width="8.36" height="8.34" fill="rgb(131,131,131)"/>
<rect x="622.86" y="177.94" width="8.36" height="8.34" fill="rgb(131,131,131)"/>
<rect x="630.92" y="177.94" width="8.36" height="8.34" fill="rgb(192,192,192)"/>
<rect x="638.98" y="177.94" width="8.36" height="8.34" fill="rgb(223,223,223)"/>
<rect x="647.03" y="177.94" width="8.36" height="8.34" fill="rgb(208,208,208)"/>
<rect x="655.09" y="177.94" width="8.36" height="8.34" fill="rgb(177,177,177)"/>
<rect x="663.15" y="177.94" width="8.36" height="8.34" fill="rgb(131,131,131)"/>
<rect x="671.21" y="177.94" width="8.36" height="8.34" fill="rgb(223,223,223)"/>
<rect x="679.27" y="177.94" width="8.36" height="8.34" fill="rgb(208,208,208)"/>
<rect x="687.33" y="177.94" width="8.36" height="8.34" fill="rgb(223,223,223)"/>
<rect x="695.39" y="177.94" width="8.36" height="8.34" fill="rgb(208,208,208)"/>
<rect x="703.45" y="177.94" width="8.36" height="8.34" fill="rgb(146,146,146)"/>
<rect x="711.51" y="177.94" width="8.36" height="8.34" fill="rgb(115,115,115)"/>
<rect x="437.50" y="185.98" width="8.36" height="8.34" fill="rgb(131,131,131)"/>
<rect x="445.56" y="185.98" width="8.36" height="8.34" fill="rgb(192,192,192)"/>
<rect x="453.62" y="185.98" width="8.36" height="8.34" fill="rgb(131,131,131)"/>
<rect x="461.68" y="185.98" width="8.36" height="8.34" fill="rgb(162,162,162)"/>
<rect x="469.74" y="185.98" width="8.36" height="8.34" fill="rgb(208,208,208)"/>
<rect x="477.80" y="185.98" width="8.36" height="8.34" fill="rgb(177,177,177)"/>
<rect x="485.85" y="185.98" width="8.36" height="8.34" fill="rgb(162,162,162)"/>
<rect x="493.91" y="185.98" width="8.36" height="8.34" fill="rgb(115,115,115)"/>
<rect x="501.97" y="185.98" width="8.36" height="8.34" fill="rgb(100,100,100)"/>
<rect x="510.03" y="185.98" width="8.36" height="8.34" fill="rgb(146,146,146)"/>
<rect x="518.09" y="185.98" width="8.36" height="8.34" fill="rgb(192,192,192)"/>
<rect x="526.15" y="185.98" width="8.36" height="8.34" fill="rgb(177,177,177)"/>
<rect x="534.21" y="185.98" width="8.36" height="8.34" fill="rgb(162,162,162)"/>
<rect x="542.27" y="185.98" width="8.36" height="8.34" fill="rgb(162,162,162)"/>
<rect x="550.33" y="185.98" width="8.36" height="8.34" fill="rgb(177,177,177)"/>
<rect x="558.38" y="185.98" width="8.36" height="8.34" fill="rgb(208,208,208)"/>
<rect x="566.44" y="185.98" width="8.36" height="8.34" fill="rgb(146,146,146)"/>
<rect x="574.50" y="185.98" width="8.36" height="8.34" fill="rgb(192,192,192)"/>
<rect x="582.56" y="185.98" width="8.36" height="8.34" fill="rgb(208,208,208)"/>
<rect x="590.62" y="185.98" width="8.36" height="8.34" fill="rgb(208,208,208)"/>
<rect x="598.68" y="185.98" width="8.36" height="8.34" fill="rgb(223,223,223)"/>
<rect x="606.74" y="185.98" width="8.36" height="8.34" fill="rgb(131,131,131)"/>
<rect x="614.80" y="185.98" width="8.36" height="8.34" fill="rgb(192,192,192)"/>
<rect x="622.86" y="185.98" width="8.36" height="8.34" fill="rgb(162,162,162)"/>
<rect x="630.92" y="185.98" width="8.36" height="8.34" fill="rgb(162,162,162)"/>
<rect x="638.98" y="185.98" width="8.36" height="8.34" fill="rgb(192,192,192)"/>
<rect x="647.03" y="185.98" width="8.36" height="8.34" fill="rgb(162,162,162)"/>
<rect x="655.09" y="185.98" width="8.36" height="8.34" fill="rgb(177,177,177)"/>
<rect x="663.15" y="185.98" width="8.36" height="8.34" fill="rgb(162,162,162)"/>
<rect x="671.21" y="185.98" width="8.36" height="8.34" fill="rgb(192,192,192)"/>
<rect x="679.27" y="185.98" width="8.36" height="8.34" fill="rgb(131,131,131)"/>
<rect x="687.33" y="185.98" width="8.36" height="8.34" fill="rgb(177,177,177)"/>
<rect x="695.39" y="185.98" width="8.36" height="8.34" fill="rgb(162,162,162)"/>
<rect x="703.45" y="185.98" width="8.36" height="8.34" fill="rgb(115,115,115)"/>
<rect x="711.51" y="185.98" width="8.36" height="8.34" fill="rgb(131,131,131)"/>
<rect x="437.50" y="194.02" width="8.36" height="8.34" fill="rgb(177,177,177)"/>
<rect x="445.56" y="194.02" width="8.36" height="8.34" fill="rgb(162,162,162)"/>
<rect x="453.62" y="194.02" width="8.36" height="8.34" fill="rgb(131,131,131)"/>
<rect x="461.68" y="194.02" width="8.36" height="8.34" fill="rgb(177,177,177)"/>
<rect x="469.74" y="194.02" width="8.36" height="8.34" fill="rgb(192,192,192)"/>
<rect x="477.80" y="194.02" width="8.36" height="8.34" fill="rgb(192,192,192)"/>
<rect x="485.85" y="194.02" width="8.36" height="8.34" fill="rgb(131,131,131)"/>
<rect x="493.91" y="194.02" width="8.36" height="8.34" fill="rgb(100,100,100)"/>
<rect x="501.97" y="194.02" width="8.36" height="8.34" fill="rgb(162,162,162)"/>
<rect x="510.03" y="194.02" width="8.36" height="8.34" fill="rgb(192,192,192)"/>
<rect x="518.09" y="194.02" width="8.36" height="8.34" fill="rgb(192,192,192)"/>
<rect x="526.15" y="194.02" width="8.36" height="8.34" fill="rgb(208,208,208)"/>
<rect x="534.21" y="194.02" width="8.36" height="8.34" fill="rgb(192,192,192)"/>
<rect x="542.27" y="194.02" width="8.36" height="8.34" fill="rgb(162,162,162)"/>
<rect x="550.33" y="194.02" width="8.36" height="8.34" fill="rgb(131,131,131)"/>
<rect x="558.38" y="194.02" width="8.36" height="8.34" fill="rgb(115,115,115)"/>
<rect x="566.44" y="194.02" width="8.36" height="8.34" fill="rgb(162,162,162)"/>
<rect x="574.50" y="194.02" width="8.36" height="8.34" fill="rgb(177,177,177)"/>
<rect x="582.56" y="194.02" width="8.36" height="8.34" fill="rgb(223,223,223)"/>
<rect x="590.62" y="194.02" width="8.36" height="8.34" fill="rgb(162,162,162)"/>
<rect x="598.68" y="194.02" width="8.36" height="8.34" fill="rgb(146,146,146)"/>
<rect x="606.74" y="194.02" width="8.36" height="8.34" fill="rgb(162,162,162)"/>
<rect x="614.80" y="194.02" width="8.36" height="8.34" fill="rgb(208,208,208)"/>
<rect x="622.86" y="194.02" width="8.36" height="8.34" fill="rgb(162,162,162)"/>
<rect x="630.92" y="194.02" width="8.36" height="8.34" fill="rgb(162,162,162)"/>
<rect x="638.98" y="194.02" width="8.36" height="8.34" fill="rgb(146,146,146)"/>
<rect x="647.03" y="194.02" width="8.36" height="8.34" fill="rgb(162,162,162)"/>
<rect x="655.09" y="194.02" width="8.36" height="8.34" fill="rgb(208,208,208)"/>
<rect x="663.15" y="194.02" width="8.36" height="8.34" fill="rgb(192,192,192)"/>
<rect x="671.21" y="194.02" width="8.36" height="8.34" fill="rgb(192,192,192)"/>
<rect x="679.27" y="194.02" width="8.36" height="8.34" fill="rgb(177,177,177)"/>
<rect x="687.33" y="194.02" width="8.36" height="8.34" fill="rgb(223,223,223)"/>
<rect x="695.39" y="194.02" width="8.36" height="8.34" fill="rgb(146,146,146)"/>
<rect x="703.45" y="194.02" width="8.36" height="8.34" fill="rgb(131,131,131)"/>
<rect x="711.51" y="194.02" width="8.36" height="8.34" fill="rgb(146,146,146)"/>
<rect x="437.50" y="202.05" width="8.36" height="8.34" fill="rgb(177,177,177)"/>
<rect x="445.56" y="202.05" width="8.36" height="8.34" fill="rgb(177,177,177)"/>
<rect x="453.62" y="202.05" width="8.36" height="8.34" fill="rgb(146,146,146)"/>
<rect x="461.68" y="202.05" width="8.36" height="8.34" fill="rgb(208,208,208)"/>
<rect x="469.74" y="202.05" width="8.36" height="8.34" fill="rgb(223,223,223)"/>
<rect x="477.80" y="202.05" width="8.36" height="8.34" fill="rgb(162,162,162)"/>
<rect x="485.85" y="202.05" width="8.36" height="8.34" fill="rgb(115,115,115)"/>
<rect x="493.91" y="202.05" width="8.36" height="8.34" fill="rgb(131,131,131)"/>
<rect x="501.97" y="202.05" width="8.36" height="8.34" fill="rgb(192,192,192)"/>
<rect x="510.03" y="202.05" width="8.36" height="8.34" fill="rgb(177,177,177)"/>
<rect x="518.09" y="202.05" width="8.36" height="8.34" fill="rgb(192,192,192)"/>
<rect x="526.15" y="202.05" width="8.36" height="8.34" fill="rgb(192,192,192)"/>
<rect x="534.21" y="202.05" width="8.36" height="8.34" fill="rgb(192,192,192)"/>
<rect x="542.27" y="202.05" width="8.36" height="8.34" fill="rgb(146,146,146)"/>
<rect x="550.33" y="202.05" width="8.36" height="8.34" fill="rgb(146,146,146)"/>
<rect x="558.38" y="202.05" width="8.36" height="8.34" fill="rgb(100,100,100)"/>
<rect x="566.44" y="202.05" width="8.36" height="8.34" fill="rgb(131,131,131)"/>
<rect x="574.50" y="202.05" width="8.36" height="8.34" fill="rgb(146,146,146)"/>
<rect x="582.56" y="202.05" width="8.36" height="8.34" fill="rgb(146,146,146)"/>
<rect x="590.62" y="202.05" width="8.36" height="8.34" fill="rgb(115,115,115)"/>
<rect x="598.68" y="202.05" width="8.36" height="8.34" fill="rgb(146,146,146)"/>
<rect x="606.74" y="202.05" width="8.36" height="8.34" fill="rgb(177,177,177)"/>
<rect x="614.80" y="202.05" width="8.36" height="8.34" fill="rgb(192,192,192)"/>
<rect x="622.86" y="202.05" width="8.36" height="8.34" fill="rgb(223,223,223)"/>
<rect x="630.92" y="202.05" width="8.36" height="8.34" fill="rgb(177,177,177)"/>
<rect x="638.98" y="202.05" width="8.36" height="8.34" fill="rgb(131,131,131)"/>
<rect x="647.03" y="202.05" width="8.36" height="8.34" fill="rgb(162,162,162)"/>
<rect x="655.09" y="202.05" width="8.36" height="8.34" fill="rgb(208,208,208)"/>
<rect x="663.15" y="202.05" width="8.36" height="8.34" fill="rgb(192,192,192)"/>
<rect x="671.21" y="202.05" width="8.36" height="8.34" fill="rgb(223,223,223)"/>
<rect x="679.27" y="202.05" width="8.36" height="8.34" fill="rgb(192,192,192)"/>
<rect x="687.33" y="202.05" width="8.36" height="8.34" fill="rgb(192,192,192)"/>
<rect x="695.39" y="202.05" width="8.36" height="8.34" fill="rgb(146,146,146)"/>
<rect x="703.45" y="202.05" width="8.36" height="8.34" fill="rgb(146,146,146)"/>
<rect x="711.51" y="202.05" width="8.36" height="8.34" fill="rgb(146,146,146)"/>
<rect x="437.50" y="210.09" width="8.36" height="8.34" fill="rgb(192,192,192)"/>
<rect x="445.56" y="210.09" width="8.36" height="8.34" fill="rgb(192,192,192)"/>
<rect x="453.62" y="210.09" width="8.36" height="8.34" fill="rgb(162,162,162)"/>
<rect x="461.68" y="210.09" width="8.36" height="8.34" fill="rgb(208,208,208)"/>
<rect x="469.74" y="210.09" width="8.36" height="8.34" fill="rgb(146,146,146)"/>
<rect x="477.80" y="210.09" width="8.36" height="8.34" fill="rgb(131,131,131)"/>
<rect x="485.85" y="210.09" width="8.36" height="8.34" fill="rgb(100,100,100)"/>
<rect x="493.91" y="210.09" width="8.36" height="8.34" fill="rgb(162,162,162)"/>
<rect x="501.97" y="210.09" width="8.36" height="8.34" fill="rgb(208,208,208)"/>
<rect x="510.03" y="210.09" width="8.36" height="8.34" fill="rgb(192,192,192)"/>
<rect x="518.09" y="210.09" width="8.36" height="8.34" fill="rgb(146,146,146)"/>
<rect x="526.15" y="210.09" width="8.36" height="8.34" fill="rgb(131,131,131)"/>
<rect x="534.21" y="210.09" width="8.36" height="8.34" fill="rgb(131,131,131)"/>
<rect x="542.27" y="210.09" width="8.36" height="8.34" fill="rgb(115,115,115)"/>
<rect x="550.33" y="210.09" width="8.36" height="8.34" fill="rgb(146,146,146)"/>
<rect x="558.38" y="210.09" width="8.36" height="8.34" fill="rgb(131,131,131)"/>
<rect x="566.44" y="210.09" width="8.36" height="8.34" fill="rgb(131,131,131)"/>
<rect x="574.50" y="210.09" width="8.36" height="8.34" fill="rgb(146,146,146)"/>
<rect x="582.56" y="210.09" width="8.36" height="8.34" fill="rgb(162,162,162)"/>
<rect x="590.62" y="210.09" width="8.36" height="8.34" fill="rgb(177,177,177)"/>
<rect x="598.68" y="210.09" width="8.36" height="8.34" fill="rgb(192,192,192)"/>
<rect x="606.74" y="210.09" width="8.36" height="8.34" fill="rgb(192,192,192)"/>
<rect x="614.80" y="210.09" width="8.36" height="8.34" fill="rgb(146,146,146)"/>
<rect x="622.86" y="210.09" width="8.36" height="8.34" fill="rgb(223,223,223)"/>
<rect x="630.92" y="210.09" width="8.36" height="8.34" fill="rgb(162,162,162)"/>
<rect x="638.98" y="210.09" width="8.36" height="8.34" fill="rgb(146,146,146)"/>
<rect x="647.03" y="210.09" width="8.36" height="8.34" fill="rgb(146,146,146)"/>
<rect x="655.09" y="210.09" width="8.36" height="8.34" fill="rgb(192,192,192)"/>
<rect x="663.15" y="210.09" width="8.36" height="8.34" fill="rgb(162,162,162)"/>
<rect x="671.21" y="210.09" width="8.36" height="8.34" fill="rgb(192,192,192)"/>
<rect x="679.27" y="210.09" width="8.36" height="8.34" fill="rgb(192,192,192)"/>
<rect x="687.33" y="210.09" width="8.36" height="8.34" fill="rgb(146,146,146)"/>
<rect x="695.39" y="210.09" width="8.36" height="8.34" fill="rgb(131,131,131)"/>
<rect x="703.45" y="210.09" width="8.36" height="8.34" fill="rgb(162,162,162)"/>
<rect x="711.51" y="210.09" width="8.36" height="8.34" fill="rgb(146,146,146)"/>
<rect x="437.50" y="218.13" width="8.36" height="8.34" fill="rgb(239,239,239)"/>
<rect x="445.56" y="218.13" width="8.36" height="8.34" fill="rgb(192,192,192)"/>
<rect x="453.62" y="218.13" width="8.36" height="8.34" fill="rgb(162,162,162)"/>
<rect x="461.68" y="218.13" width="8.36" height="8.34" fill="rgb(146,146,146)"/>
<rect x="469.74" y="218.13" width="8.36" height="8.34" fill="rgb(115,115,115)"/>
<rect x="477.80" y="218.13" width="8.36" height="8.34" fill="rgb(115,115,115)"/>
<rect x="485.85" y="218.13" width="8.36" height="8.34" fill="rgb(115,115,115)"/>
<rect x="493.91" y="218.13" width="8.36" height="8.34" fill="rgb(131,131,131)"/>
<rect x="501.97" y="218.13" width="8.36" height="8.34" fill="rgb(192,192,192)"/>
<rect x="510.03" y="218.13" width="8.36" height="8.34" fill="rgb(192,192,192)"/>
<rect x="518.09" y="218.13" width="8.36" height="8.34" fill="rgb(131,131,131)"/>
<rect x="526.15" y="218.13" width="8.36" height="8.34" fill="rgb(100,100,100)"/>
<rect x="534.21" y="218.13" width="8.36" height="8.34" fill="rgb(100,100,100)"/>
<rect x="542.27" y="218.13" width="8.36" height="8.34" fill="rgb(100,100,100)"/>
<rect x="550.33" y="218.13" width="8.36" height="8.34" fill="rgb(100,100,100)"/>
<rect x="558.38" y="218.13" width="8.36" height="8.34" fill="rgb(162,162,162)"/>
<rect x="566.44" y="218.13" width="8.36" height="8.34" fill="rgb(177,177,177)"/>
<rect x="574.50" y="218.13" width="8.36" height="8.34" fill="rgb(192,192,192)"/>
<rect x="582.56" y="218.13" width="8.36" height="8.34" fill="rgb(177,177,177)"/>
<rect x="590.62" y="218.13" width="8.36" height="8.34" fill="rgb(162,162,162)"/>
<rect x="598.68" y="218.13" width="8.36" height="8.34" fill="rgb(192,192,192)"/>
<rect x="606.74" y="218.13" width="8.36" height="8.34" fill="rgb(192,192,192)"/>
<rect x="614.80" y="218.13" width="8.36" height="8.34" fill="rgb(131,131,131)"/>
<rect x="622.86" y="218.13" width="8.36" height="8.34" fill="rgb(146,146,146)"/>
<rect x="630.92" y="218.13" width="8.36" height="8.34" fill="rgb(146,146,146)"/>
<rect x="638.98" y="218.13" width="8.36" height="8.34" fill="rgb(146,146,146)"/>
<rect x="647.03" y="218.13" width="8.36" height="8.34" fill="rgb(146,146,146)"/>
<rect x="655.09" y="218.13" width="8.36" height="8.34" fill="rgb(162,162,162)"/>
<rect x="663.15" y="218.13" width="8.36" height="8.34" fill="rgb(192,192,192)"/>
<rect x="671.21" y="218.13" width="8.36" height="8.34" fill="rgb(177,177,177)"/>
<rect x="679.27" y="218.13" width="8.36" height="8.34" fill="rgb(192,192,192)"/>
<rect x="687.33" y="218.13" width="8.36" height="8.34" fill="rgb(146,146,146)"/>
<rect x="695.39" y="218.13" width="8.36" height="8.34" fill="rgb(177,177,177)"/>
<rect x="703.45" y="218.13" width="8.36" height="8.34" fill="rgb(192,192,192)"/>
<rect x="711.51" y="218.13" width="8.36" height="8.34" fill="rgb(192,192,192)"/>
<rect x="437.50" y="226.16" width="8.36" height="8.34" fill="rgb(223,223,223)"/>
<rect x="445.56" y="226.16" width="8.36" height="8.34" fill="rgb(192,192,192)"/>
<rect x="453.62" y="226.16" width="8.36" height="8.34" fill="rgb(177,177,177)"/>
<rect x="461.68" y="226.16" width="8.36" height="8.34" fill="rgb(162,162,162)"/>
<rect x="469.74" y="226.16" width="8.36" height="8.34" fill="rgb(131,131,131)"/>
<rect x="477.80" y="226.16" width="8.36" height="8.34" fill="rgb(131,131,131)"/>
<rect x="485.85" y="226.16" width="8.36" height="8.34" fill="rgb(115,115,115)"/>
<rect x="493.91" y="226.16" width="8.36" height="8.34" fill="rgb(146,146,146)"/>
<rect x="501.97" y="226.16" width="8.36" height="8.34" fill="rgb(192,192,192)"/>
<rect x="510.03" y="226.16" width="8.36" height="8.34" fill="rgb(177,177,177)"/>
<rect x="518.09" y="226.16" width="8.36" height="8.34" fill="rgb(162,162,162)"/>
<rect x="526.15" y="226.16" width="8.36" height="8.34" fill="rgb(177,177,177)"/>
<rect x="534.21" y="226.16" width="8.36" height="8.34" fill="rgb(131,131,131)"/>
<rect x="542.27" y="226.16" width="8.36" height="8.34" fill="rgb(115,115,115)"/>
<rect x="550.33" y="226.16" width="8.36" height="8.34" fill="rgb(85,85,85)"/>
<rect x="558.38" y="226.16" width="8.36" height="8.34" fill="rgb(115,115,115)"/>
<rect x="566.44" y="226.16" width="8.36" height="8.34" fill="rgb(131,131,131)"/>
<rect x="574.50" y="226.16" width="8.36" height="8.34" fill="rgb(162,162,162)"/>
<rect x="582.56" y="226.16" width="8.36" height="8.34" fill="rgb(162,162,162)"/>
<rect x="590.62" y="226.16" width="8.36" height="8.34" fill="rgb(146,146,146)"/>
<rect x="598.68" y="226.16" width="8.36" height="8.34" fill="rgb(208,208,208)"/>
<rect x="606.74" y="226.16" width="8.36" height="8.34" fill="rgb(223,223,223)"/>
<rect x="614.80" y="226.16" width="8.36" height="8.34" fill="rgb(162,162,162)"/>
<rect x="622.86" y="226.16" width="8.36" height="8.34" fill="rgb(177,177,177)"/>
<rect x="630.92" y="226.16" width="8.36" height="8.34" fill="rgb(162,162,162)"/>
<rect x="638.98" y="226.16" width="8.36" height="8.34" fill="rgb(115,115,115)"/>
<rect x="647.03" y="226.16" width="8.36" height="8.34" fill="rgb(146,146,146)"/>
<rect x="655.09" y="226.16" width="8.36" height="8.34" fill="rgb(177,177,177)"/>
<rect x="663.15" y="226.16" width="8.36" height="8.34" fill="rgb(223,223,223)"/>
<rect x="671.21" y="226.16" width="8.36" height="8.34" fill="rgb(162,162,162)"/>
<rect x="679.27" y="226.16" width="8.36" height="8.34" fill="rgb(146,146,146)"/>
<rect x="687.33" y="226.16" width="8.36" height="8.34" fill="rgb(177,177,177)"/>
<rect x="695.39" y="226.16" width="8.36" height="8.34" fill="rgb(177,177,177)"/>
<rect x="703.45" y="226.16" width="8.36" height="8.34" fill="rgb(177,177,177)"/>
<rect x="711.51" y="226.16" width="8.36" height="8.34" fill="rgb(162,162,162)"/>
<rect x="437.50" y="234.20" width="8.36" height="8.34" fill="rgb(131,131,131)"/>
<rect x="445.56" y="234.20" width="8.36" height="8.34" fill="rgb(162,162,162)"/>
<rect x="453.62" y="234.20" width="8.36" height="8.34" fill="rgb(208,208,208)"/>
<rect x="461.68" y="234.20" width="8.36" height="8.34" fill="rgb(162,162,162)"/>
<rect x="469.74" y="234.20" width="8.36" height="8.34" fill="rgb(146,146,146)"/>
<rect x="477.80" y="234.20" width="8.36" height="8.34" fill="rgb(162,162,162)"/>
<rect x="485.85" y="234.20" width="8.36" height="8.34" fill="rgb(162,162,162)"/>
<rect x="493.91" y="234.20" width="8.36" height="8.34" fill="rgb(146,146,146)"/>
<rect x="501.97" y="234.20" width="8.36" height="8.34" fill="rgb(192,192,192)"/>
<rect x="510.03" y="234.20" width="8.36" height="8.34" fill="rgb(223,223,223)"/>
<rect x="518.09" y="234.20" width="8.36" height="8.34" fill="rgb(192,192,192)"/>
<rect x="526.15" y="234.20" width="8.36" height="8.34" fill="rgb(146,146,146)"/>
<rect x="534.21" y="234.20" width="8.36" height="8.34" fill="rgb(131,131,131)"/>
<rect x="542.27" y="234.20" width="8.36" height="8.34" fill="rgb(115,115,115)"/>
<rect x="550.33" y="234.20" width="8.36" height="8.34" fill="rgb(100,100,100)"/>
<rect x="558.38" y="234.20" width="8.36" height="8.34" fill="rgb(100,100,100)"/>
<rect x="566.44" y="234.20" width="8.36" height="8.34" fill="rgb(131,131,131)"/>
<rect x="574.50" y="234.20" width="8.36" height="8.34" fill="rgb(146,146,146)"/>
<rect x="582.56" y="234.20" width="8.36" height="8.34" fill="rgb(162,162,162)"/>
<rect x="590.62" y="234.20" width="8.36" height="8.34" fill="rgb(162,162,162)"/>
<rect x="598.68" y="234.20" width="8.36" height="8.34" fill="rgb(208,208,208)"/>
<rect x="606.74" y="234.20" width="8.36" height="8.34" fill="rgb(223,223,223)"/>
<rect x="614.80" y="234.20" width="8.36" height="8.34" fill="rgb(192,192,192)"/>
<rect x="622.86" y="234.20" width="8.36" height="8.34" fill="rgb(177,177,177)"/>
<rect x="630.92" y="234.20" width="8.36" height="8.34" fill="rgb(131,131,131)"/>
<rect x="638.98" y="234.20" width="8.36" height="8.34" fill="rgb(100,100,100)"/>
<rect x="647.03" y="234.20" width="8.36" height="8.34" fill="rgb(100,100,100)"/>
<rect x="655.09" y="234.20" width="8.36" height="8.34" fill="rgb(146,146,146)"/>
<rect x="663.15" y="234.20" width="8.36" height="8.34" fill="rgb(223,223,223)"/>
<rect x="671.21" y="234.20" width="8.36" height="8.34" fill="rgb(208,208,208)"/>
<rect x="679.27" y="234.20" width="8.36" height="8.34" fill="rgb(192,192,192)"/>
<rect x="687.33" y="234.20" width="8.36" height="8.34" fill="rgb(208,208,208)"/>
<rect x="695.39" y="234.20" width="8.36" height="8.34" fill="rgb(192,192,192)"/>
<rect x="703.45" y="234.20" width="8.36" height="8.34" fill="rgb(208,208,208)"/>
<rect x="711.51" y="234.20" width="8.36" height="8.34" fill="rgb(115,115,115)"/>
<rect x="437.50" y="242.24" width="8.36" height="8.34" fill="rgb(146,146,146)"/>
<rect x="445.56" y="242.24" width="8.36" height="8.34" fill="rgb(162,162,162)"/>
<rect x="453.62" y="242.24" width="8.36" height="8.34" fill="rgb(146,146,146)"/>
<rect x="461.68" y="242.24" width="8.36" height="8.34" fill="rgb(115,115,115)"/>
<rect x="469.74" y="242.24" width="8.36" height="8.34" fill="rgb(131,131,131)"/>
<rect x="477.80" y="242.24" width="8.36" height="8.34" fill="rgb(162,162,162)"/>
<rect x="485.85" y="242.24" width="8.36" height="8.34" fill="rgb(192,192,192)"/>
<rect x="493.91" y="242.24" width="8.36" height="8.34" fill="rgb(162,162,162)"/>
<rect x="501.97" y="242.24" width="8.36" height="8.34" fill="rgb(192,192,192)"/>
<rect x="510.03" y="242.24" width="8.36" height="8.34" fill="rgb(223,223,223)"/>
<rect x="518.09" y="242.24" width="8.36" height="8.34" fill="rgb(177,177,177)"/>
<rect x="526.15" y="242.24" width="8.36" height="8.34" fill="rgb(146,146,146)"/>
<rect x="534.21" y="242.24" width="8.36" height="8.34" fill="rgb(131,131,131)"/>
<rect x="542.27" y="242.24" width="8.36" height="8.34" fill="rgb(115,115,115)"/>
<rect x="550.33" y="242.24" width="8.36" height="8.34" fill="rgb(146,146,146)"/>
<rect x="558.38" y="242.24" width="8.36" height="8.34" fill="rgb(146,146,146)"/>
<rect x="566.44" y="242.24" width="8.36" height="8.34" fill="rgb(192,192,192)"/>
<rect x="574.50" y="242.24" width="8.36" height="8.34" fill="rgb(146,146,146)"/>
<rect x="582.56" y="242.24" width="8.36" height="8.34" fill="rgb(162,162,162)"/>
<rect x="590.62" y="242.24" width="8.36" height="8.34" fill="rgb(162,162,162)"/>
<rect x="598.68" y="242.24" width="8.36" height="8.34" fill="rgb(162,162,162)"/>
<rect x="606.74" y="242.24" width="8.36" height="8.34" fill="rgb(192,192,192)"/>
<rect x="614.80" y="242.24" width="8.36" height="8.34" fill="rgb(208,208,208)"/>
<rect x="622.86" y="242.24" width="8.36" height="8.34" fill="rgb(146,146,146)"/>
<rect x="630.92" y="242.24" width="8.36" height="8.34" fill="rgb(115,115,115)"/>
<rect x="638.98" y="242.24" width="8.36" height="8.34" fill="rgb(131,131,131)"/>
<rect x="647.03" y="242.24" width="8.36" height="8.34" fill="rgb(177,177,177)"/>
<rect x="655.09" y="242.24" width="8.36" height="8.34" fill="rgb(177,177,177)"/>
<rect x="663.15" y="242.24" width="8.36" height="8.34" fill="rgb(177,177,177)"/>
<rect x="671.21" y="242.24" width="8.36" height="8.34" fill="rgb(192,192,192)"/>
<rect x="679.27" y="242.24" width="8.36" height="8.34" fill="rgb(192,192,192)"/>
<rect x="687.33" y="242.24" width="8.36" height="8.34" fill="rgb(146,146,146)"/>
<rect x="695.39" y="242.24" width="8.36" height="8.34" fill="rgb(131,131,131)"/>
<rect x="703.45" y="242.24" width="8.36" height="8.34" fill="rgb(131,131,131)"/>
<rect x="711.51" y="242.24" width="8.36" height="8.34" fill="rgb(115,115,115)"/>
<rect x="437.50" y="250.27" width="8.36" height="8.34" fill="rgb(162,162,162)"/>
<rect x="445.56" y="250.27" width="8.36" height="8.34" fill="rgb(162,162,162)"/>
<rect x="453.62" y="250.27" width="8.36" height="8.34" fill="rgb(131,131,131)"/>
<rect x="461.68" y="250.27" width="8.36" height="8.34" fill="rgb(115,115,115)"/>
<rect x="469.74" y="250.27" width="8.36" height="8.34" fill="rgb(162,162,162)"/>
<rect x="477.80" y="250.27" width="8.36" height="8.34" fill="rgb(162,162,162)"/>
<rect x="485.85" y="250.27" width="8.36" height="8.34" fill="rgb(192,192,192)"/>
<rect x="493.91" y="250.27" width="8.36" height="8.34" fill="rgb(208,208,208)"/>
<rect x="501.97" y="250.27" width="8.36" height="8.34" fill="rgb(192,192,192)"/>
<rect x="510.03" y="250.27" width="8.36" height="8.34" fill="rgb(192,192,192)"/>
<rect x="518.09" y="250.27" width="8.36" height="8.34" fill="rgb(208,208,208)"/>
<rect x="526.15" y="250.27" width="8.36" height="8.34" fill="rgb(177,177,177)"/>
<rect x="534.21" y="250.27" width="8.36" height="8.34" fill="rgb(162,162,162)"/>
<rect x="542.27" y="250.27" width="8.36" height="8.34" fill="rgb(177,177,177)"/>
<rect x="550.33" y="250.27" width="8.36" height="8.34" fill="rgb(208,208,208)"/>
<rect x="558.38" y="250.27" width="8.36" height="8.34" fill="rgb(208,208,208)"/>
<rect x="566.44" y="250.27" width="8.36" height="8.34" fill="rgb(223,223,223)"/>
<rect x="574.50" y="250.27" width="8.36" height="8.34" fill="rgb(177,177,177)"/>
<rect x="582.56" y="250.27" width="8.36" height="8.34" fill="rgb(146,146,146)"/>
<rect x="590.62" y="250.27" width="8.36" height="8.34" fill="rgb(131,131,131)"/>
<rect x="598.68" y="250.27" width="8.36" height="8.34" fill="rgb(177,177,177)"/>
<rect x="606.74" y="250.27" width="8.36" height="8.34" fill="rgb(192,192,192)"/>
<rect x="614.80" y="250.27" width="8.36" height="8.34" fill="rgb(192,192,192)"/>
<rect x="622.86" y="250.27" width="8.36" height="8.34" fill="rgb(146,146,146)"/>
<rect x="630.92" y="250.27" width="8.36" height="8.34" fill="rgb(177,177,177)"/>
<rect x="638.98" y="250.27" width="8.36" height="8.34" fill="rgb(208,208,208)"/>
<rect x="647.03" y="250.27" width="8.36" height="8.34" fill="rgb(239,239,239)"/>
<rect x="655.09" y="250.27" width="8.36" height="8.34" fill="rgb(223,223,223)"/>
<rect x="663.15" y="250.27" width="8.36" height="8.34" fill="rgb(146,146,146)"/>
<rect x="671.21" y="250.27" width="8.36" height="8.34" fill="rgb(146,146,146)"/>
<rect x="679.27" y="250.27" width="8.36" height="8.34" fill="rgb(177,177,177)"/>
<rect x="687.33" y="250.27" width="8.36" height="8.34" fill="rgb(146,146,146)"/>
<rect x="695.39" y="250.27" width="8.36" height="8.34" fill="rgb(115,115,115)"/>
<rect x="703.45" y="250.27" width="8.36" height="8.34" fill="rgb(115,115,115)"/>
<rect x="711.51" y="250.27" width="8.36" height="8.34" fill="rgb(131,131,131)"/>
<rect x="437.50" y="258.31" width="8.36" height="8.34" fill="rgb(192,192,192)"/>
<rect x="445.56" y="258.31" width="8.36" height="8.34" fill="rgb(208,208,208)"/>
<rect x="453.62" y="258.31" width="8.36" height="8.34" fill="rgb(192,192,192)"/>
<rect x="461.68" y="258.31" width="8.36" height="8.34" fill="rgb(146,146,146)"/>
<rect x="469.74" y="258.31" width="8.36" height="8.34" fill="rgb(131,131,131)"/>
<rect x="477.80" y="258.31" width="8.36" height="8.34" fill="rgb(162,162,162)"/>
<rect x="485.85" y="258.31" width="8.36" height="8.34" fill="rgb(192,192,192)"/>
<rect x="493.91" y="258.31" width="8.36" height="8.34" fill="rgb(162,162,162)"/>
<rect x="501.97" y="258.31" width="8.36" height="8.34" fill="rgb(223,223,223)"/>
<rect x="510.03" y="258.31" width="8.36" height="8.34" fill="rgb(177,177,177)"/>
<rect x="518.09" y="258.31" width="8.36" height="8.34" fill="rgb(192,192,192)"/>
<rect x="526.15" y="258.31" width="8.36" height="8.34" fill="rgb(208,208,208)"/>
<rect x="534.21" y="258.31" width="8.36" height="8.34" fill="rgb(177,177,177)"/>
<rect x="542.27" y="258.31" width="8.36" height="8.34" fill="rgb(177,177,177)"/>
<rect x="550.33" y="258.31" width="8.36" height="8.34" fill="rgb(162,162,162)"/>
<rect x="558.38" y="258.31" width="8.36" height="8.34" fill="rgb(162,162,162)"/>
<rect x="566.44" y="258.31" width="8.36" height="8.34" fill="rgb(192,192,192)"/>
<rect x="574.50" y="258.31" width="8.36" height="8.34" fill="rgb(131,131,131)"/>
<rect x="582.56" y="258.31" width="8.36" height="8.34" fill="rgb(115,115,115)"/>
<rect x="590.62" y="258.31" width="8.36" height="8.34" fill="rgb(131,131,131)"/>
<rect x="598.68" y="258.31" width="8.36" height="8.34" fill="rgb(223,223,223)"/>
<rect x="606.74" y="258.31" width="8.36" height="8.34" fill="rgb(208,208,208)"/>
<rect x="614.80" y="258.31" width="8.36" height="8.34" fill="rgb(192,192,192)"/>
<rect x="622.86" y="258.31" width="8.36" height="8.34" fill="rgb(146,146,146)"/>
<rect x="630.92" y="258.31" width="8.36" height="8.34" fill="rgb(162,162,162)"/>
<rect x="638.98" y="258.31" width="8.36" height="8.34" fill="rgb(162,162,162)"/>
<rect x="647.03" y="258.31" width="8.36" height="8.34" fill="rgb(192,192,192)"/>
<rect x="655.09" y="258.31" width="8.36" height="8.34" fill="rgb(208,208,208)"/>
<rect x="663.15" y="258.31" width="8.36" height="8.34" fill="rgb(162,162,162)"/>
<rect x="671.21" y="258.31" width="8.36" height="8.34" fill="rgb(162,162,162)"/>
<rect x="679.27" y="258.31" width="8.36" height="8.34" fill="rgb(162,162,162)"/>
<rect x="687.33" y="258.31" width="8.36" height="8.34" fill="rgb(131,131,131)"/>
<rect x="695.39" y="258.31" width="8.36" height="8.34" fill="rgb(115,115,115)"/>
<rect x="703.45" y="258.31" width="8.36" height="8.34" fill="rgb(115,115,115)"/>
<rect x="711.51" y="258.31" width="8.36" height="8.34" fill="rgb(131,131,131)"/>
<rect x="437.50" y="266.35" width="8.36" height="8.34" fill="rgb(115,115,115)"/>
<rect x="445.56" y="266.35" width="8.36" height="8.34" fill="rgb(177,177,177)"/>
<rect x="453.62" y="266.35" width="8.36" height="8.34" fill="rgb(208,208,208)"/>
<rect x="461.68" y="266.35" width="8.36" height="8.34" fill="rgb(162,162,162)"/>
<rect x="469.74" y="266.35" width="8.36" height="8.34" fill="rgb(146,146,146)"/>
<rect x="477.80" y="266.35" width="8.36" height="8.34" fill="rgb(146,146,146)"/>
<rect x="485.85" y="266.35" width="8.36" height="8.34" fill="rgb(146,146,146)"/>
<rect x="493.91" y="266.35" width="8.36" height="8.34" fill="rgb(177,177,177)"/>
<rect x="501.97" y="266.35" width="8.36" height="8.34" fill="rgb(223,223,223)"/>
<rect x="510.03" y="266.35" width="8.36" height="8.34" fill="rgb(177,177,177)"/>
<rect x="518.09" y="266.35" width="8.36" height="8.34" fill="rgb(162,162,162)"/>
<rect x="526.15" y="266.35" width="8.36" height="8.34" fill="rgb(162,162,162)"/>
<rect x="534.21" y="266.35" width="8.36" height="8.34" fill="rgb(146,146,146)"/>
<rect x="542.27" y="266.35" width="8.36" height="8.34" fill="rgb(177,177,177)"/>
<rect x="550.33" y="266.35" width="8.36" height="8.34" fill="rgb(192,192,192)"/>
<rect x="558.38" y="266.35" width="8.36" height="8.34" fill="rgb(192,192,192)"/>
<rect x="566.44" y="266.35" width="8.36" height="8.34" fill="rgb(192,192,192)"/>
<rect x="574.50" y="266.35" width="8.36" height="8.34" fill="rgb(208,208,208)"/>
<rect x="582.56" y="266.35" width="8.36" height="8.34" fill="rgb(146,146,146)"/>
<rect x="590.62" y="266.35" width="8.36" height="8.34" fill="rgb(131,131,131)"/>
<rect x="598.68" y="266.35" width="8.36" height="8.34" fill="rgb(162,162,162)"/>
<rect x="606.74" y="266.35" width="8.36" height="8.34" fill="rgb(131,131,131)"/>
<rect x="614.80" y="266.35" width="8.36" height="8.34" fill="rgb(115,115,115)"/>
<rect x="622.86" y="266.35" width="8.36" height="8.34" fill="rgb(115,115,115)"/>
<rect x="630.92" y="266.35" width="8.36" height="8.34" fill="rgb(115,115,115)"/>
<rect x="638.98" y="266.35" width="8.36" height="8.34" fill="rgb(146,146,146)"/>
<rect x="647.03" y="266.35" width="8.36" height="8.34" fill="rgb(162,162,162)"/>
<rect x="655.09" y="266.35" width="8.36" height="8.34" fill="rgb(208,208,208)"/>
<rect x="663.15" y="266.35" width="8.36" height="8.34" fill="rgb(162,162,162)"/>
<rect x="671.21" y="266.35" width="8.36" height="8.34" fill="rgb(162,162,162)"/>
<rect x="679.27" y="266.35" width="8.36" height="8.34" fill="rgb(146,146,146)"/>
<rect x="687.33" y="266.35" width="8.36" height="8.34" fill="rgb(131,131,131)"/>
<rect x="695.39" y="266.35" width="8.36" height="8.34" fill="rgb(162,162,162)"/>
<rect x="703.45" y="266.35" width="8.36" height="8.34" fill="rgb(131,131,131)"/>
<rect x="711.51" y="266.35" width="8.36" height="8.34" fill="rgb(115,115,115)"/>
<rect x="437.50" y="274.38" width="8.36" height="8.34" fill="rgb(54,54,54)"/>
<rect x="445.56" y="274.38" width="8.36" height="8.34" fill="rgb(54,54,54)"/>
<rect x="453.62" y="274.38" width="8.36" height="8.34" fill="rgb(85,85,85)"/>
<rect x="461.68" y="274.38" width="8.36" height="8.34" fill="rgb(131,131,131)"/>
<rect x="469.74" y="274.38" width="8.36" height="8.34" fill="rgb(146,146,146)"/>
<rect x="477.80" y="274.38" width="8.36" height="8.34" fill="rgb(115,115,115)"/>
<rect x="485.85" y="274.38" width="8.36" height="8.34" fill="rgb(177,177,177)"/>
<rect x="493.91" y="274.38" width="8.36" height="8.34" fill="rgb(177,177,177)"/>
<rect x="501.97" y="274.38" width="8.36" height="8.34" fill="rgb(162,162,162)"/>
<rect x="510.03" y="274.38" width="8.36" height="8.34" fill="rgb(146,146,146)"/>
<rect x="518.09" y="274.38" width="8.36" height="8.34" fill="rgb(177,177,177)"/>
<rect x="526.15" y="274.38" width="8.36" height="8.34" fill="rgb(146,146,146)"/>
<rect x="534.21" y="274.38" width="8.36" height="8.34" fill="rgb(115,115,115)"/>
<rect x="542.27" y="274.38" width="8.36" height="8.34" fill="rgb(100,100,100)"/>
<rect x="550.33" y="274.38" width="8.36" height="8.34" fill="rgb(131,131,131)"/>
<rect x="558.38" y="274.38" width="8.36" height="8.34" fill="rgb(162,162,162)"/>
<rect x="566.44" y="274.38" width="8.36" height="8.34" fill="rgb(146,146,146)"/>
<rect x="574.50" y="274.38" width="8.36" height="8.34" fill="rgb(192,192,192)"/>
<rect x="582.56" y="274.38" width="8.36" height="8.34" fill="rgb(131,131,131)"/>
<rect x="590.62" y="274.38" width="8.36" height="8.34" fill="rgb(100,100,100)"/>
<rect x="598.68" y="274.38" width="8.36" height="8.34" fill="rgb(69,69,69)"/>
<rect x="606.74" y="274.38" width="8.36" height="8.34" fill="rgb(69,69,69)"/>
<rect x="614.80" y="274.38" width="8.36" height="8.34" fill="rgb(85,85,85)"/>
<rect x="622.86" y="274.38" width="8.36" height="8.34" fill="rgb(85,85,85)"/>
<rect x="630.92" y="274.38" width="8.36" height="8.34" fill="rgb(115,115,115)"/>
<rect x="638.98" y="274.38" width="8.36" height="8.34" fill="rgb(115,115,115)"/>
<rect x="647.03" y="274.38" width="8.36" height="8.34" fill="rgb(100,100,100)"/>
<rect x="655.09" y="274.38" width="8.36" height="8.34" fill="rgb(115,115,115)"/>
<rect x="663.15" y="274.38" width="8.36" height="8.34" fill="rgb(131,131,131)"/>
<rect x="671.21" y="274.38" width="8.36" height="8.34" fill="rgb(131,131,131)"/>
<rect x="679.27" y="274.38" width="8.36" height="8.34" fill="rgb(131,131,131)"/>
<rect x="687.33" y="274.38" width="8.36" height="8.34" fill="rgb(131,131,131)"/>
<rect x="695.39" y="274.38" width="8.36" height="8.34" fill="rgb(146,146,146)"/>
<rect x="703.45" y="274.38" width="8.36" height="8.34" fill="rgb(115,115,115)"/>
<rect x="711.51" y="274.38" width="8.36" height="8.34" fill="rgb(85,85,85)"/>
<rect x="437.50" y="282.42" width="8.36" height="8.34" fill="rgb(54,54,54)"/>
<rect x="445.56" y="282.42" width="8.36" height="8.34" fill="rgb(38,38,38)"/>
<rect x="453.62" y="282.42" width="8.36" height="8.34" fill="rgb(54,54,54)"/>
<rect x="461.68" y="282.42" width="8.36" height="8.34" fill="rgb(100,100,100)"/>
<rect x="469.74" y="282.42" width="8.36" height="8.34" fill="rgb(85,85,85)"/>
<rect x="477.80" y="282.42" width="8.36" height="8.34" fill="rgb(69,69,69)"/>
<rect x="485.85" y="282.42" width="8.36" height="8.34" fill="rgb(100,100,100)"/>
<rect x="493.91" y="282.42" width="8.36" height="8.34" fill="rgb(85,85,85)"/>
<rect x="501.97" y="282.42" width="8.36" height="8.34" fill="rgb(85,85,85)"/>
<rect x="510.03" y="282.42" width="8.36" height="8.34" fill="rgb(85,85,85)"/>
<rect x="518.09" y="282.42" width="8.36" height="8.34" fill="rgb(131,131,131)"/>
<rect x="526.15" y="282.42" width="8.36" height="8.34" fill="rgb(162,162,162)"/>
<rect x="534.21" y="282.42" width="8.36" height="8.34" fill="rgb(131,131,131)"/>
<rect x="542.27" y="282.42" width="8.36" height="8.34" fill="rgb(100,100,100)"/>
<rect x="550.33" y="282.42" width="8.36" height="8.34" fill="rgb(54,54,54)"/>
<rect x="558.38" y="282.42" width="8.36" height="8.34" fill="rgb(69,69,69)"/>
<rect x="566.44" y="282.42" width="8.36" height="8.34" fill="rgb(85,85,85)"/>
<rect x="574.50" y="282.42" width="8.36" height="8.34" fill="rgb(162,162,162)"/>
<rect x="582.56" y="282.42" width="8.36" height="8.34" fill="rgb(100,100,100)"/>
<rect x="590.62" y="282.42" width="8.36" height="8.34" fill="rgb(69,69,69)"/>
<rect x="598.68" y="282.42" width="8.36" height="8.34" fill="rgb(38,38,38)"/>
<rect x="606.74" y="282.42" width="8.36" height="8.34" fill="rgb(54,54,54)"/>
<rect x="614.80" y="282.42" width="8.36" height="8.34" fill="rgb(85,85,85)"/>
<rect x="622.86" y="282.42" width="8.36" height="8.34" fill="rgb(100,100,100)"/>
<rect x="630.92" y="282.42" width="8.36" height="8.34" fill="rgb(115,115,115)"/>
<rect x="638.98" y="282.42" width="8.36" height="8.34" fill="rgb(131,131,131)"/>
<rect x="647.03" y="282.42" width="8.36" height="8.34" fill="rgb(115,115,115)"/>
<rect x="655.09" y="282.42" width="8.36" height="8.34" fill="rgb(85,85,85)"/>
<rect x="663.15" y="282.42" width="8.36" height="8.34" fill="rgb(115,115,115)"/>
<rect x="671.21" y="282.42" width="8.36" height="8.34" fill="rgb(131,131,131)"/>
<rect x="679.27" y="282.42" width="8.36" height="8.34" fill="rgb(146,146,146)"/>
<rect x="687.33" y="282.42" width="8.36" height="8.34" fill="rgb(162,162,162)"/>
<rect x="695.39" y="282.42" width="8.36" height="8.34" fill="rgb(146,146,146)"/>
<rect x="703.45" y="282.42" width="8.36" height="8.34" fill="rgb(100,100,100)"/>
<rect x="711.51" y="282.42" width="8.36" height="8.34" fill="rgb(38,38,38)"/>
<rect x="437.50" y="290.46" width="8.36" height="8.34" fill="rgb(23,23,23)"/>
<rect x="445.56" y="290.46" width="8.36" height="8.34" fill="rgb(38,38,38)"/>
<rect x="453.62" y="290.46" width="8.36" height="8.34" fill="rgb(38,38,38)"/>
<rect x="461.68" y="290.46" width="8.36" height="8.34" fill="rgb(69,69,69)"/>
<rect x="469.74" y="290.46" width="8.36" height="8.34" fill="rgb(85,85,85)"/>
<rect x="477.80" y="290.46" width="8.36" height="8.34" fill="rgb(85,85,85)"/>
<rect x="485.85" y="290.46" width="8.36" height="8.34" fill="rgb(100,100,100)"/>
<rect x="493.91" y="290.46" width="8.36" height="8.34" fill="rgb(54,54,54)"/>
<rect x="501.97" y="290.46" width="8.36" height="8.34" fill="rgb(54,54,54)"/>
<rect x="510.03" y="290.46" width="8.36" height="8.34" fill="rgb(100,100,100)"/>
<rect x="518.09" y="290.46" width="8.36" height="8.34" fill="rgb(69,69,69)"/>
<rect x="526.15" y="290.46" width="8.36" height="8.34" fill="rgb(100,100,100)"/>
<rect x="534.21" y="290.46" width="8.36" height="8.34" fill="rgb(146,146,146)"/>
<rect x="542.27" y="290.46" width="8.36" height="8.34" fill="rgb(115,115,115)"/>
<rect x="550.33" y="290.46" width="8.36" height="8.34" fill="rgb(54,54,54)"/>
<rect x="558.38" y="290.46" width="8.36" height="8.34" fill="rgb(100,100,100)"/>
<rect x="566.44" y="290.46" width="8.36" height="8.34" fill="rgb(115,115,115)"/>
<rect x="574.50" y="290.46" width="8.36" height="8.34" fill="rgb(131,131,131)"/>
<rect x="582.56" y="290.46" width="8.36" height="8.34" fill="rgb(100,100,100)"/>
<rect x="590.62" y="290.46" width="8.36" height="8.34" fill="rgb(38,38,38)"/>
<rect x="598.68" y="290.46" width="8.36" height="8.34" fill="rgb(38,38,38)"/>
<rect x="606.74" y="290.46" width="8.36" height="8.34" fill="rgb(85,85,85)"/>
<rect x="614.80" y="290.46" width="8.36" height="8.34" fill="rgb(100,100,100)"/>
<rect x="622.86" y="290.46" width="8.36" height="8.34" fill="rgb(115,115,115)"/>
<rect x="630.92" y="290.46" width="8.36" height="8.34" fill="rgb(115,115,115)"/>
<rect x="638.98" y="290.46" width="8.36" height="8.34" fill="rgb(100,100,100)"/>
<rect x="647.03" y="290.46" width="8.36" height="8.34" fill="rgb(100,100,100)"/>
<rect x="655.09" y="290.46" width="8.36" height="8.34" fill="rgb(115,115,115)"/>
<rect x="663.15" y="290.46" width="8.36" height="8.34" fill="rgb(85,85,85)"/>
<rect x="671.21" y="290.46" width="8.36" height="8.34" fill="rgb(131,131,131)"/>
<rect x="679.27" y="290.46" width="8.36" height="8.34" fill="rgb(162,162,162)"/>
<rect x="687.33" y="290.46" width="8.36" height="8.34" fill="rgb(131,131,131)"/>
<rect x="695.39" y="290.46" width="8.36" height="8.34" fill="rgb(131,131,131)"/>
<rect x="703.45" y="290.46" width="8.36" height="8.34" fill="rgb(115,115,115)"/>
<rect x="711.51" y="290.46" width="8.36" height="8.34" fill="rgb(85,85,85)"/>
<rect x="437.50" y="298.49" width="8.36" height="8.34" fill="rgb(54,54,54)"/>
<rect x="445.56" y="298.49" width="8.36" height="8.34" fill="rgb(38,38,38)"/>
<rect x="453.62" y="298.49" width="8.36" height="8.34" fill="rgb(38,38,38)"/>
<rect x="461.68" y="298.49" width="8.36" height="8.34" fill="rgb(54,54,54)"/>
<rect x="469.74" y="298.49" width="8.36" height="8.34" fill="rgb(85,85,85)"/>
<rect x="477.80" y="298.49" width="8.36" height="8.34" fill="rgb(85,85,85)"/>
<rect x="485.85" y="298.49" width="8.36" height="8.34" fill="rgb(131,131,131)"/>
<rect x="493.91" y="298.49" width="8.36" height="8.34" fill="rgb(85,85,85)"/>
<rect x="501.97" y="298.49" width="8.36" height="8.34" fill="rgb(85,85,85)"/>
<rect x="510.03" y="298.49" width="8.36" height="8.34" fill="rgb(115,115,115)"/>
<rect x="518.09" y="298.49" width="8.36" height="8.34" fill="rgb(100,100,100)"/>
<rect x="526.15" y="298.49" width="8.36" height="8.34" fill="rgb(131,131,131)"/>
<rect x="534.21" y="298.49" width="8.36" height="8.34" fill="rgb(115,115,115)"/>
<rect x="542.27" y="298.49" width="8.36" height="8.34" fill="rgb(85,85,85)"/>
<rect x="550.33" y="298.49" width="8.36" height="8.34" fill="rgb(100,100,100)"/>
<rect x="558.38" y="298.49" width="8.36" height="8.34" fill="rgb(85,85,85)"/>
<rect x="566.44" y="298.49" width="8.36" height="8.34" fill="rgb(85,85,85)"/>
<rect x="574.50" y="298.49" width="8.36" height="8.34" fill="rgb(100,100,100)"/>
<rect x="582.56" y="298.49" width="8.36" height="8.34" fill="rgb(85,85,85)"/>
<rect x="590.62" y="298.49" width="8.36" height="8.34" fill="rgb(69,69,69)"/>
<rect x="598.68" y="298.49" width="8.36" height="8.34" fill="rgb(54,54,54)"/>
<rect x="606.74" y="298.49" width="8.36" height="8.34" fill="rgb(54,54,54)"/>
<rect x="614.80" y="298.49" width="8.36" height="8.34" fill="rgb(100,100,100)"/>
<rect x="622.86" y="298.49" width="8.36" height="8.34" fill="rgb(115,115,115)"/>
<rect x="630.92" y="298.49" width="8.36" height="8.34" fill="rgb(100,100,100)"/>
<rect x="638.98" y="298.49" width="8.36" height="8.34" fill="rgb(85,85,85)"/>
<rect x="647.03" y="298.49" width="8.36" height="8.34" fill="rgb(115,115,115)"/>
<rect x="655.09" y="298.49" width="8.36" height="8.34" fill="rgb(131,131,131)"/>
<rect x="663.15" y="298.49" width="8.36" height="8.34" fill="rgb(100,100,100)"/>
<rect x="671.21" y="298.49" width="8.36" height="8.34" fill="rgb(100,100,100)"/>
<rect x="679.27" y="298.49" width="8.36" height="8.34" fill="rgb(115,115,115)"/>
<rect x="687.33" y="298.49" width="8.36" height="8.34" fill="rgb(131,131,131)"/>
<rect x="695.39" y="298.49" width="8.36" height="8.34" fill="rgb(131,131,131)"/>
<rect x="703.45" y="298.49" width="8.36" height="8.34" fill="rgb(115,115,115)"/>
<rect x="711.51" y="298.49" width="8.36" height="8.34" fill="rgb(177,177,177)"/>
<rect x="437.50" y="306.53" width="8.36" height="8.34" fill="rgb(69,69,69)"/>
<rect x="445.56" y="306.53" width="8.36" height="8.34" fill="rgb(54,54,54)"/>
<rect x="453.62" y="306.53" width="8.36" height="8.34" fill="rgb(38,38,38)"/>
<rect x="461.68" y="306.53" width="8.36" height="8.34" fill="rgb(54,54,54)"/>
<rect x="469.74" y="306.53" width="8.36" height="8.34" fill="rgb(38,38,38)"/>
<rect x="477.80" y="306.53" width="8.36" height="8.34" fill="rgb(38,38,38)"/>
<rect x="485.85" y="306.53" width="8.36" height="8.34" fill="rgb(100,100,100)"/>
<rect x="493.91" y="306.53" width="8.36" height="8.34" fill="rgb(69,69,69)"/>
<rect x="501.97" y="306.53" width="8.36" height="8.34" fill="rgb(100,100,100)"/>
<rect x="510.03" y="306.53" width="8.36" height="8.34" fill="rgb(100,100,100)"/>
<rect x="518.09" y="306.53" width="8.36" height="8.34" fill="rgb(100,100,100)"/>
<rect x="526.15" y="306.53" width="8.36" height="8.34" fill="rgb(85,85,85)"/>
<rect x="534.21" y="306.53" width="8.36" height="8.34" fill="rgb(115,115,115)"/>
<rect x="542.27" y="306.53" width="8.36" height="8.34" fill="rgb(115,115,115)"/>
<rect x="550.33" y="306.53" width="8.36" height="8.34" fill="rgb(100,100,100)"/>
<rect x="558.38" y="306.53" width="8.36" height="8.34" fill="rgb(69,69,69)"/>
<rect x="566.44" y="306.53" width="8.36" height="8.34" fill="rgb(146,146,146)"/>
<rect x="574.50" y="306.53" width="8.36" height="8.34" fill="rgb(146,146,146)"/>
<rect x="582.56" y="306.53" width="8.36" height="8.34" fill="rgb(85,85,85)"/>
<rect x="590.62" y="306.53" width="8.36" height="8.34" fill="rgb(115,115,115)"/>
<rect x="598.68" y="306.53" width="8.36" height="8.34" fill="rgb(115,115,115)"/>
<rect x="606.74" y="306.53" width="8.36" height="8.34" fill="rgb(100,100,100)"/>
<rect x="614.80" y="306.53" width="8.36" height="8.34" fill="rgb(85,85,85)"/>
<rect x="622.86" y="306.53" width="8.36" height="8.34" fill="rgb(69,69,69)"/>
<rect x="630.92" y="306.53" width="8.36" height="8.34" fill="rgb(100,100,100)"/>
<rect x="638.98" y="306.53" width="8.36" height="8.34" fill="rgb(115,115,115)"/>
<rect x="647.03" y="306.53" width="8.36" height="8.34" fill="rgb(115,115,115)"/>
<rect x="655.09" y="306.53" width="8.36" height="8.34" fill="rgb(162,162,162)"/>
<rect x="663.15" y="306.53" width="8.36" height="8.34" fill="rgb(146,146,146)"/>
<rect x="671.21" y="306.53" width="8.36" height="8.34" fill="rgb(146,146,146)"/>
<rect x="679.27" y="306.53" width="8.36" height="8.34" fill="rgb(146,146,146)"/>
<rect x="687.33" y="306.53" width="8.36" height="8.34" fill="rgb(131,131,131)"/>
<rect x="695.39" y="306.53" width="8.36" height="8.34" fill="rgb(131,131,131)"/>
<rect x="703.45" y="306.53" width="8.36" height="8.34" fill="rgb(131,131,131)"/>
<rect x="711.51" y="306.53" width="8.36" height="8.34" fill="rgb(177,177,177)"/>
<rect x="437.50" y="314.57" width="8.36" height="8.34" fill="rgb(115,115,115)"/>
<rect x="445.56" y="314.57" width="8.36" height="8.34" fill="rgb(69,69,69)"/>
<rect x="453.62" y="314.57" width="8.36" height="8.34" fill="rgb(69,69,69)"/>
<rect x="461.68" y="314.57" width="8.36" height="8.34" fill="rgb(85,85,85)"/>
<rect x="469.74" y="314.57" width="8.36" height="8.34" fill="rgb(69,69,69)"/>
<rect x="477.80" y="314.57" width="8.36" height="8.34" fill="rgb(69,69,69)"/>
<rect x="485.85" y="314.57" width="8.36" height="8.34" fill="rgb(115,115,115)"/>
<rect x="493.91" y="314.57" width="8.36" height="8.34" fill="rgb(85,85,85)"/>
<rect x="501.97" y="314.57" width="8.36" height="8.34" fill="rgb(85,85,85)"/>
<rect x="510.03" y="314.57" width="8.36" height="8.34" fill="rgb(115,115,115)"/>
<rect x="518.09" y="314.57" width="8.36" height="8.34" fill="rgb(100,100,100)"/>
<rect x="526.15" y="314.57" width="8.36" height="8.34" fill="rgb(69,69,69)"/>
<rect x="534.21" y="314.57" width="8.36" height="8.34" fill="rgb(115,115,115)"/>
<rect x="542.27" y="314.57" width="8.36" height="8.34" fill="rgb(85,85,85)"/>
<rect x="550.33" y="314.57" width="8.36" height="8.34" fill="rgb(115,115,115)"/>
<rect x="558.38" y="314.57" width="8.36" height="8.34" fill="rgb(192,192,192)"/>
<rect x="566.44" y="314.57" width="8.36" height="8.34" fill="rgb(192,192,192)"/>
<rect x="574.50" y="314.57" width="8.36" height="8.34" fill="rgb(177,177,177)"/>
<rect x="582.56" y="314.57" width="8.36" height="8.34" fill="rgb(146,146,146)"/>
<rect x="590.62" y="314.57" width="8.36" height="8.34" fill="rgb(146,146,146)"/>
<rect x="598.68" y="314.57" width="8.36" height="8.34" fill="rgb(146,146,146)"/>
<rect x="606.74" y="314.57" width="8.36" height="8.34" fill="rgb(146,146,146)"/>
<rect x="614.80" y="314.57" width="8.36" height="8.34" fill="rgb(115,115,115)"/>
<rect x="622.86" y="314.57" width="8.36" height="8.34" fill="rgb(85,85,85)"/>
<rect x="630.92" y="314.57" width="8.36" height="8.34" fill="rgb(85,85,85)"/>
<rect x="638.98" y="314.57" width="8.36" height="8.34" fill="rgb(131,131,131)"/>
<rect x="647.03" y="314.57" width="8.36" height="8.34" fill="rgb(146,146,146)"/>
<rect x="655.09" y="314.57" width="8.36" height="8.34" fill="rgb(192,192,192)"/>
<rect x="663.15" y="314.57" width="8.36" height="8.34" fill="rgb(192,192,192)"/>
<rect x="671.21" y="314.57" width="8.36" height="8.34" fill="rgb(208,208,208)"/>
<rect x="679.27" y="314.57" width="8.36" height="8.34" fill="rgb(177,177,177)"/>
<rect x="687.33" y="314.57" width="8.36" height="8.34" fill="rgb(131,131,131)"/>
<rect x="695.39" y="314.57" width="8.36" height="8.34" fill="rgb(177,177,177)"/>
<rect x="703.45" y="314.57" width="8.36" height="8.34" fill="rgb(192,192,192)"/>
<rect x="711.51" y="314.57" width="8.36" height="8.34" fill="rgb(131,131,131)"/>
<rect x="437.50" y="322.60" width="8.36" height="8.34" fill="rgb(162,162,162)"/>
<rect x="445.56" y="322.60" width="8.36" height="8.34" fill="rgb(100,100,100)"/>
<rect x="453.62" y="322.60" width="8.36" height="8.34" fill="rgb(69,69,69)"/>
<rect x="461.68" y="322.60" width="8.36" height="8.34" fill="rgb(85,85,85)"/>
<rect x="469.74" y="322.60" width="8.36" height="8.34" fill="rgb(115,115,115)"/>
<rect x="477.80" y="322.60" width="8.36" height="8.34" fill="rgb(131,131,131)"/>
<rect x="485.85" y="322.60" width="8.36" height="8.34" fill="rgb(131,131,131)"/>
<rect x="493.91" y="322.60" width="8.36" height="8.34" fill="rgb(85,85,85)"/>
<rect x="501.97" y="322.60" width="8.36" height="8.34" fill="rgb(131,131,131)"/>
<rect x="510.03" y="322.60" width="8.36" height="8.34" fill="rgb(146,146,146)"/>
<rect x="518.09" y="322.60" width="8.36" height="8.34" fill="rgb(146,146,146)"/>
<rect x="526.15" y="322.60" width="8.36" height="8.34" fill="rgb(162,162,162)"/>
<rect x="534.21" y="322.60" width="8.36" height="8.34" fill="rgb(146,146,146)"/>
<rect x="542.27" y="322.60" width="8.36" height="8.34" fill="rgb(85,85,85)"/>
<rect x="550.33" y="322.60" width="8.36" height="8.34" fill="rgb(177,177,177)"/>
<rect x="558.38" y="322.60" width="8.36" height="8.34" fill="rgb(239,239,239)"/>
<rect x="566.44" y="322.60" width="8.36" height="8.34" fill="rgb(192,192,192)"/>
<rect x="574.50" y="322.60" width="8.36" height="8.34" fill="rgb(177,177,177)"/>
<rect x="582.56" y="322.60" width="8.36" height="8.34" fill="rgb(146,146,146)"/>
<rect x="590.62" y="322.60" width="8.36" height="8.34" fill="rgb(100,100,100)"/>
<rect x="598.68" y="322.60" width="8.36" height="8.34" fill="rgb(100,100,100)"/>
<rect x="606.74" y="322.60" width="8.36" height="8.34" fill="rgb(115,115,115)"/>
<rect x="614.80" y="322.60" width="8.36" height="8.34" fill="rgb(131,131,131)"/>
<rect x="622.86" y="322.60" width="8.36" height="8.34" fill="rgb(131,131,131)"/>
<rect x="630.92" y="322.60" width="8.36" height="8.34" fill="rgb(115,115,115)"/>
<rect x="638.98" y="322.60" width="8.36" height="8.34" fill="rgb(131,131,131)"/>
<rect x="647.03" y="322.60" width="8.36" height="8.34" fill="rgb(146,146,146)"/>
<rect x="655.09" y="322.60" width="8.36" height="8.34" fill="rgb(162,162,162)"/>
<rect x="663.15" y="322.60" width="8.36" height="8.34" fill="rgb(192,192,192)"/>
<rect x="671.21" y="322.60" width="8.36" height="8.34" fill="rgb(192,192,192)"/>
<rect x="679.27" y="322.60" width="8.36" height="8.34" fill="rgb(162,162,162)"/>
<rect x="687.33" y="322.60" width="8.36" height="8.34" fill="rgb(146,146,146)"/>
<rect x="695.39" y="322.60" width="8.36" height="8.34" fill="rgb(192,192,192)"/>
<rect x="703.45" y="322.60" width="8.36" height="8.34" fill="rgb(177,177,177)"/>
<rect x="711.51" y="322.60" width="8.36" height="8.34" fill="rgb(162,162,162)"/>
<rect x="437.50" y="330.64" width="8.36" height="8.34" fill="rgb(162,162,162)"/>
<rect x="445.56" y="330.64" width="8.36" height="8.34" fill="rgb(131,131,131)"/>
<rect x="453.62" y="330.64" width="8.36" height="8.34" fill="rgb(54,54,54)"/>
<rect x="461.68" y="330.64" width="8.36" height="8.34" fill="rgb(54,54,54)"/>
<rect x="469.74" y="330.64" width="8.36" height="8.34" fill="rgb(100,100,100)"/>
<rect x="477.80" y="330.64" width="8.36" height="8.34" fill="rgb(162,162,162)"/>
<rect x="485.85" y="330.64" width="8.36" height="8.34" fill="rgb(100,100,100)"/>
<rect x="493.91" y="330.64" width="8.36" height="8.34" fill="rgb(85,85,85)"/>
<rect x="501.97" y="330.64" width="8.36" height="8.34" fill="rgb(208,208,208)"/>
<rect x="510.03" y="330.64" width="8.36" height="8.34" fill="rgb(192,192,192)"/>
<rect x="518.09" y="330.64" width="8.36" height="8.34" fill="rgb(177,177,177)"/>
<rect x="526.15" y="330.64" width="8.36" height="8.34" fill="rgb(177,177,177)"/>
<rect x="534.21" y="330.64" width="8.36" height="8.34" fill="rgb(162,162,162)"/>
<rect x="542.27" y="330.64" width="8.36" height="8.34" fill="rgb(85,85,85)"/>
<rect x="550.33" y="330.64" width="8.36" height="8.34" fill="rgb(162,162,162)"/>
<rect x="558.38" y="330.64" width="8.36" height="8.34" fill="rgb(223,223,223)"/>
<rect x="566.44" y="330.64" width="8.36" height="8.34" fill="rgb(162,162,162)"/>
<rect x="574.50" y="330.64" width="8.36" height="8.34" fill="rgb(192,192,192)"/>
<rect x="582.56" y="330.64" width="8.36" height="8.34" fill="rgb(131,131,131)"/>
<rect x="590.62" y="330.64" width="8.36" height="8.34" fill="rgb(115,115,115)"/>
<rect x="598.68" y="330.64" width="8.36" height="8.34" fill="rgb(131,131,131)"/>
<rect x="606.74" y="330.64" width="8.36" height="8.34" fill="rgb(115,115,115)"/>
<rect x="614.80" y="330.64" width="8.36" height="8.34" fill="rgb(131,131,131)"/>
<rect x="622.86" y="330.64" width="8.36" height="8.34" fill="rgb(162,162,162)"/>
<rect x="630.92" y="330.64" width="8.36" height="8.34" fill="rgb(162,162,162)"/>
<rect x="638.98" y="330.64" width="8.36" height="8.34" fill="rgb(192,192,192)"/>
<rect x="647.03" y="330.64" width="8.36" height="8.34" fill="rgb(162,162,162)"/>
<rect x="655.09" y="330.64" width="8.36" height="8.34" fill="rgb(162,162,162)"/>
<rect x="663.15" y="330.64" width="8.36" height="8.34" fill="rgb(162,162,162)"/>
<rect x="671.21" y="330.64" width="8.36" height="8.34" fill="rgb(131,131,131)"/>
<rect x="679.27" y="330.64" width="8.36" height="8.34" fill="rgb(115,115,115)"/>
<rect x="687.33" y="330.64" width="8.36" height="8.34" fill="rgb(115,115,115)"/>
<rect x="695.39" y="330.64" width="8.36" height="8.34" fill="rgb(177,177,177)"/>
<rect x="703.45" y="330.64" width="8.36" height="8.34" fill="rgb(177,177,177)"/>
<rect x="711.51" y="330.64" width="8.36" height="8.34" fill="rgb(162,162,162)"/>
<rect x="437.50" y="338.68" width="8.36" height="8.34" fill="rgb(146,146,146)"/>
<rect x="445.56" y="338.68" width="8.36" height="8.34" fill="rgb(192,192,192)"/>
<rect x="453.62" y="338.68" width="8.36" height="8.34" fill="rgb(85,85,85)"/>
<rect x="461.68" y="338.68" width="8.36" height="8.34" fill="rgb(69,69,69)"/>
<rect x="469.74" y="338.68" width="8.36" height="8.34" fill="rgb(85,85,85)"/>
<rect x="477.80" y="338.68" width="8.36" height="8.34" fill="rgb(115,115,115)"/>
<rect x="485.85" y="338.68" width="8.36" height="8.34" fill="rgb(100,100,100)"/>
<rect x="493.91" y="338.68" width="8.36" height="8.34" fill="rgb(162,162,162)"/>
<rect x="501.97" y="338.68" width="8.36" height="8.34" fill="rgb(192,192,192)"/>
<rect x="510.03" y="338.68" width="8.36" height="8.34" fill="rgb(208,208,208)"/>
<rect x="518.09" y="338.68" width="8.36" height="8.34" fill="rgb(208,208,208)"/>
<rect x="526.15" y="338.68" width="8.36" height="8.34" fill="rgb(162,162,162)"/>
<rect x="534.21" y="338.68" width="8.36" height="8.34" fill="rgb(131,131,131)"/>
<rect x="542.27" y="338.68" width="8.36" height="8.34" fill="rgb(162,162,162)"/>
<rect x="550.33" y="338.68" width="8.36" height="8.34" fill="rgb(177,177,177)"/>
<rect x="558.38" y="338.68" width="8.36" height="8.34" fill="rgb(192,192,192)"/>
<rect x="566.44" y="338.68" width="8.36" height="8.34" fill="rgb(146,146,146)"/>
<rect x="574.50" y="338.68" width="8.36" height="8.34" fill="rgb(162,162,162)"/>
<rect x="582.56" y="338.68" width="8.36" height="8.34" fill="rgb(131,131,131)"/>
<rect x="590.62" y="338.68" width="8.36" height="8.34" fill="rgb(131,131,131)"/>
<rect x="598.68" y="338.68" width="8.36" height="8.34" fill="rgb(162,162,162)"/>
<rect x="606.74" y="338.68" width="8.36" height="8.34" fill="rgb(192,192,192)"/>
<rect x="614.80" y="338.68" width="8.36" height="8.34" fill="rgb(162,162,162)"/>
<rect x="622.86" y="338.68" width="8.36" height="8.34" fill="rgb(177,177,177)"/>
<rect x="630.92" y="338.68" width="8.36" height="8.34" fill="rgb(208,208,208)"/>
<rect x="638.98" y="338.68" width="8.36" height="8.34" fill="rgb(192,192,192)"/>
<rect x="647.03" y="338.68" width="8.36" height="8.34" fill="rgb(146,146,146)"/>
<rect x="655.09" y="338.68" width="8.36" height="8.34" fill="rgb(146,146,146)"/>
<rect x="663.15" y="338.68" width="8.36" height="8.34" fill="rgb(131,131,131)"/>
<rect x="671.21" y="338.68" width="8.36" height="8.34" fill="rgb(131,131,131)"/>
<rect x="679.27" y="338.68" width="8.36" height="8.34" fill="rgb(115,115,115)"/>
<rect x="687.33" y="338.68" width="8.36" height="8.34" fill="rgb(85,85,85)"/>
<rect x="695.39" y="338.68" width="8.36" height="8.34" fill="rgb(162,162,162)"/>
<rect x="703.45" y="338.68" width="8.36" height="8.34" fill="rgb(162,162,162)"/>
<rect x="711.51" y="338.68" width="8.36" height="8.34" fill="rgb(162,162,162)"/>
<rect x="437.50" y="346.71" width="8.36" height="8.34" fill="rgb(177,177,177)"/>
<rect x="445.56" y="346.71" width="8.36" height="8.34" fill="rgb(192,192,192)"/>
<rect x="453.62" y="346.71" width="8.36" height="8.34" fill="rgb(162,162,162)"/>
<rect x="461.68" y="346.71" width="8.36" height="8.34" fill="rgb(85,85,85)"/>
<rect x="469.74" y="346.71" width="8.36" height="8.34" fill="rgb(85,85,85)"/>
<rect x="477.80" y="346.71" width="8.36" height="8.34" fill="rgb(115,115,115)"/>
<rect x="485.85" y="346.71" width="8.36" height="8.34" fill="rgb(131,131,131)"/>
<rect x="493.91" y="346.71" width="8.36" height="8.34" fill="rgb(208,208,208)"/>
<rect x="501.97" y="346.71" width="8.36" height="8.34" fill="rgb(208,208,208)"/>
<rect x="510.03" y="346.71" width="8.36" height="8.34" fill="rgb(208,208,208)"/>
<rect x="518.09" y="346.71" width="8.36" height="8.34" fill="rgb(223,223,223)"/>
<rect x="526.15" y="346.71" width="8.36" height="8.34" fill="rgb(208,208,208)"/>
<rect x="534.21" y="346.71" width="8.36" height="8.34" fill="rgb(177,177,177)"/>
<rect x="542.27" y="346.71" width="8.36" height="8.34" fill="rgb(192,192,192)"/>
<rect x="550.33" y="346.71" width="8.36" height="8.34" fill="rgb(223,223,223)"/>
<rect x="558.38" y="346.71" width="8.36" height="8.34" fill="rgb(177,177,177)"/>
<rect x="566.44" y="346.71" width="8.36" height="8.34" fill="rgb(115,115,115)"/>
<rect x="574.50" y="346.71" width="8.36" height="8.34" fill="rgb(131,131,131)"/>
<rect x="582.56" y="346.71" width="8.36" height="8.34" fill="rgb(115,115,115)"/>
<rect x="590.62" y="346.71" width="8.36" height="8.34" fill="rgb(162,162,162)"/>
<rect x="598.68" y="346.71" width="8.36" height="8.34" fill="rgb(177,177,177)"/>
<rect x="606.74" y="346.71" width="8.36" height="8.34" fill="rgb(177,177,177)"/>
<rect x="614.80" y="346.71" width="8.36" height="8.34" fill="rgb(162,162,162)"/>
<rect x="622.86" y="346.71" width="8.36" height="8.34" fill="rgb(177,177,177)"/>
<rect x="630.92" y="346.71" width="8.36" height="8.34" fill="rgb(208,208,208)"/>
<rect x="638.98" y="346.71" width="8.36" height="8.34" fill="rgb(162,162,162)"/>
<rect x="647.03" y="346.71" width="8.36" height="8.34" fill="rgb(177,177,177)"/>
<rect x="655.09" y="346.71" width="8.36" height="8.34" fill="rgb(177,177,177)"/>
<rect x="663.15" y="346.71" width="8.36" height="8.34" fill="rgb(192,192,192)"/>
<rect x="671.21" y="346.71" width="8.36" height="8.34" fill="rgb(192,192,192)"/>
<rect x="679.27" y="346.71" width="8.36" height="8.34" fill="rgb(177,177,177)"/>
<rect x="687.33" y="346.71" width="8.36" height="8.34" fill="rgb(131,131,131)"/>
<rect x="695.39" y="346.71" width="8.36" height="8.34" fill="rgb(131,131,131)"/>
<rect x="703.45" y="346.71" width="8.36" height="8.34" fill="rgb(162,162,162)"/>
<rect x="711.51" y="346.71" width="8.36" height="8.34" fill="rgb(162,162,162)"/>
<g shape-rendering="auto">
<rect x="99.40" y="81.50" width="282.06" height="273.25" fill="none" stroke="#000" stroke-width="1.3"/>
<path d="M103.43 354.75v-5.4M103.43 81.50v5.4" stroke="#000" stroke-width="0.9"/><text class="tk" transform="translate(103.43,373.15) scale(1.10,1)" text-anchor="middle">0</text><path d="M143.72 354.75v-5.4M143.72 81.50v5.4" stroke="#000" stroke-width="0.9"/><text class="tk" transform="translate(143.72,373.15) scale(1.10,1)" text-anchor="middle">5</text><path d="M184.02 354.75v-5.4M184.02 81.50v5.4" stroke="#000" stroke-width="0.9"/><text class="tk" transform="translate(184.02,373.15) scale(1.10,1)" text-anchor="middle">10</text><path d="M224.31 354.75v-5.4M224.31 81.50v5.4" stroke="#000" stroke-width="0.9"/><text class="tk" transform="translate(224.31,373.15) scale(1.10,1)" text-anchor="middle">15</text><path d="M264.61 354.75v-5.4M264.61 81.50v5.4" stroke="#000" stroke-width="0.9"/><text class="tk" transform="translate(264.61,373.15) scale(1.10,1)" text-anchor="middle">20</text><path d="M304.90 354.75v-5.4M304.90 81.50v5.4" stroke="#000" stroke-width="0.9"/><text class="tk" transform="translate(304.90,373.15) scale(1.10,1)" text-anchor="middle">25</text><path d="M345.20 354.75v-5.4M345.20 81.50v5.4" stroke="#000" stroke-width="0.9"/><text class="tk" transform="translate(345.20,373.15) scale(1.10,1)" text-anchor="middle">30</text><path d="M99.40 85.52h5.4M381.47 85.52h-5.4" stroke="#000" stroke-width="0.9"/><text class="tk" transform="translate(94.80,92.52) scale(1.10,1)" text-anchor="end">0</text><path d="M99.40 125.70h5.4M381.47 125.70h-5.4" stroke="#000" stroke-width="0.9"/><text class="tk" transform="translate(94.80,132.70) scale(1.10,1)" text-anchor="end">5</text><path d="M99.40 165.89h5.4M381.47 165.89h-5.4" stroke="#000" stroke-width="0.9"/><text class="tk" transform="translate(94.80,172.89) scale(1.10,1)" text-anchor="end">10</text><path d="M99.40 206.07h5.4M381.47 206.07h-5.4" stroke="#000" stroke-width="0.9"/><text class="tk" transform="translate(94.80,213.07) scale(1.10,1)" text-anchor="end">15</text><path d="M99.40 246.25h5.4M381.47 246.25h-5.4" stroke="#000" stroke-width="0.9"/><text class="tk" transform="translate(94.80,253.25) scale(1.10,1)" text-anchor="end">20</text><path d="M99.40 286.44h5.4M381.47 286.44h-5.4" stroke="#000" stroke-width="0.9"/><text class="tk" transform="translate(94.80,293.44) scale(1.10,1)" text-anchor="end">25</text><path d="M99.40 326.62h5.4M381.47 326.62h-5.4" stroke="#000" stroke-width="0.9"/><text class="tk" transform="translate(94.80,333.62) scale(1.10,1)" text-anchor="end">30</text>
<rect x="437.50" y="81.50" width="282.06" height="273.25" fill="none" stroke="#000" stroke-width="1.3"/>
<path d="M441.53 354.75v-5.4M441.53 81.50v5.4" stroke="#000" stroke-width="0.9"/><text class="tk" transform="translate(441.53,373.15) scale(1.10,1)" text-anchor="middle">0</text><path d="M481.82 354.75v-5.4M481.82 81.50v5.4" stroke="#000" stroke-width="0.9"/><text class="tk" transform="translate(481.82,373.15) scale(1.10,1)" text-anchor="middle">5</text><path d="M522.12 354.75v-5.4M522.12 81.50v5.4" stroke="#000" stroke-width="0.9"/><text class="tk" transform="translate(522.12,373.15) scale(1.10,1)" text-anchor="middle">10</text><path d="M562.41 354.75v-5.4M562.41 81.50v5.4" stroke="#000" stroke-width="0.9"/><text class="tk" transform="translate(562.41,373.15) scale(1.10,1)" text-anchor="middle">15</text><path d="M602.71 354.75v-5.4M602.71 81.50v5.4" stroke="#000" stroke-width="0.9"/><text class="tk" transform="translate(602.71,373.15) scale(1.10,1)" text-anchor="middle">20</text><path d="M643.00 354.75v-5.4M643.00 81.50v5.4" stroke="#000" stroke-width="0.9"/><text class="tk" transform="translate(643.00,373.15) scale(1.10,1)" text-anchor="middle">25</text><path d="M683.30 354.75v-5.4M683.30 81.50v5.4" stroke="#000" stroke-width="0.9"/><text class="tk" transform="translate(683.30,373.15) scale(1.10,1)" text-anchor="middle">30</text><path d="M437.50 85.52h5.4M719.57 85.52h-5.4" stroke="#000" stroke-width="0.9"/><text class="tk" transform="translate(432.90,92.52) scale(1.10,1)" text-anchor="end">0</text><path d="M437.50 125.70h5.4M719.57 125.70h-5.4" stroke="#000" stroke-width="0.9"/><text class="tk" transform="translate(432.90,132.70) scale(1.10,1)" text-anchor="end">5</text><path d="M437.50 165.89h5.4M719.57 165.89h-5.4" stroke="#000" stroke-width="0.9"/><text class="tk" transform="translate(432.90,172.89) scale(1.10,1)" text-anchor="end">10</text><path d="M437.50 206.07h5.4M719.57 206.07h-5.4" stroke="#000" stroke-width="0.9"/><text class="tk" transform="translate(432.90,213.07) scale(1.10,1)" text-anchor="end">15</text><path d="M437.50 246.25h5.4M719.57 246.25h-5.4" stroke="#000" stroke-width="0.9"/><text class="tk" transform="translate(432.90,253.25) scale(1.10,1)" text-anchor="end">20</text><path d="M437.50 286.44h5.4M719.57 286.44h-5.4" stroke="#000" stroke-width="0.9"/><text class="tk" transform="translate(432.90,293.44) scale(1.10,1)" text-anchor="end">25</text><path d="M437.50 326.62h5.4M719.57 326.62h-5.4" stroke="#000" stroke-width="0.9"/><text class="tk" transform="translate(432.90,333.62) scale(1.10,1)" text-anchor="end">30</text>
</g></svg><div id="groove"></div><div id="knob"></div>
<div id="tbl">
<div id="tbody"></div><div id="vhdr"></div>
<div class="th" style="left:18.5px;width:174px">file name</div>
<div class="grip" style="left:192px"></div>
<div class="th" style="left:195.5px;width:97px">radius</div>
<div class="grip" style="left:292px"></div>
<div class="th" style="left:295.5px;width:97px">threshold</div>
<div class="grip" style="left:392px"></div>
<div class="th" style="left:395.5px;width:97px">num pixels</div>
<div class="grip" style="left:492px"></div>
<div class="th" style="left:495.5px;width:97px"><span style="position:absolute;left:-9px;width:115px;text-align:center;letter-spacing:0.75px">area (micro m^2)</span>&nbsp;</div>
<div class="grip" style="left:592px"></div>
<div class="th" style="left:595.5px;width:97px">total intensity</div>
<div class="grip" style="left:692px"></div>
<div class="th" style="left:695.5px;width:97px"><span style="position:absolute;left:-10.5px;width:118px;text-align:center;letter-spacing:0.7px">intensity per area</span>&nbsp;</div>
<div class="grip" style="left:792px"></div>
<div class="td" style="left:17px;width:177px"><span>20091026_SK570_578_4....</span></div>
<div class="td" style="left:194px;width:100px"><span>-</span></div>
<div class="td" style="left:294px;width:100px"><span>-</span></div>
<div class="td" style="left:394px;width:100px"><span>-</span></div>
<div class="td" style="left:494px;width:100px"><span>-</span></div>
<div class="td" style="left:594px;width:100px"><span>-</span></div>
<div class="td" style="left:694px;width:100px"><span>-</span></div>
<div class="abs" style="left:5px;top:30.6px;font-size:13px;line-height:16px;color:#222">1</div>
<div class="abs" style="left:5px;top:50.6px;width:8px;height:1px;background:repeating-linear-gradient(to right,#8f8783 0 1px,transparent 1px 3px)"></div>
</div><svg id="tb" viewBox="0 0 660 44">
<defs>
<linearGradient id="icobg" x1="0" y1="0" x2="1" y2="1"><stop offset="0" stop-color="#d4eefa"/><stop offset="1" stop-color="#f6fcff"/></linearGradient>
<linearGradient id="icobd" x1="0" y1="0" x2="0" y2="1"><stop offset="0" stop-color="#c8b060"/><stop offset="0.45" stop-color="#b0a070"/><stop offset="1" stop-color="#5c6c9c"/></linearGradient>
<linearGradient id="sep" x1="0" y1="0" x2="0" y2="1"><stop offset="0" stop-color="#a89e9a" stop-opacity="0"/><stop offset="0.2" stop-color="#a89e9a"/><stop offset="0.8" stop-color="#a89e9a"/><stop offset="1" stop-color="#a89e9a" stop-opacity="0"/></linearGradient>
<linearGradient id="cubeL" x1="0" y1="0" x2="1" y2="1"><stop offset="0" stop-color="#5a8cff"/><stop offset="1" stop-color="#3e68e8"/></linearGradient>
<radialGradient id="gearg" cx="0.4" cy="0.35" r="0.7"><stop offset="0" stop-color="#f4f4fa"/><stop offset="1" stop-color="#c2c2d6"/></radialGradient>
<linearGradient id="sq" x1="0" y1="0" x2="1" y2="1"><stop offset="0" stop-color="#6a8eea"/><stop offset="1" stop-color="#3a5ed0"/></linearGradient>
</defs>
<path d="M0.6 2.5h2M1.6 1.5v2" stroke="#8a807c" stroke-width="0.7"/>
<path d="M3.6 5.5h2M4.6 4.5v2" stroke="#8a807c" stroke-width="0.7"/>
<path d="M0.6 8.5h2M1.6 7.5v2" stroke="#8a807c" stroke-width="0.7"/>
<path d="M3.6 11.5h2M4.6 10.5v2" stroke="#8a807c" stroke-width="0.7"/>
<path d="M0.6 14.5h2M1.6 13.5v2" stroke="#8a807c" stroke-width="0.7"/>
<path d="M3.6 17.5h2M4.6 16.5v2" stroke="#8a807c" stroke-width="0.7"/>
<path d="M0.6 20.5h2M1.6 19.5v2" stroke="#8a807c" stroke-width="0.7"/>
<path d="M3.6 23.5h2M4.6 22.5v2" stroke="#8a807c" stroke-width="0.7"/>
<path d="M0.6 26.5h2M1.6 25.5v2" stroke="#8a807c" stroke-width="0.7"/>
<path d="M3.6 29.5h2M4.6 28.5v2" stroke="#8a807c" stroke-width="0.7"/>
<path d="M0.6 32.5h2M1.6 31.5v2" stroke="#8a807c" stroke-width="0.7"/>
<path d="M3.6 35.5h2M4.6 34.5v2" stroke="#8a807c" stroke-width="0.7"/>
<path d="M0.6 38.5h2M1.6 37.5v2" stroke="#8a807c" stroke-width="0.7"/>
<rect x="54.0" y="0" width="1.2" height="43" fill="url(#sep)"/>
<rect x="376.0" y="0" width="1.2" height="43" fill="url(#sep)"/>
<rect x="518.0" y="0" width="1.2" height="43" fill="url(#sep)"/>
<g transform="translate(27,11)">
<path d="M-6.6,-7.8 C-7.8,-5 -7,-0.8 -4.2,2 L-1.4,0.6 C-1.8,-2.4 -3.6,-5.6 -6.6,-7.8Z" fill="#d2dc5c" stroke="#4a7a3a" stroke-width="0.5"/>
<path d="M-1.4,-1.6 C0.8,-3.9 4.6,-4.2 8.5,-1.1 C6,1.2 2.6,2 -0.6,1.4Z" fill="#dae262" stroke="#4a7a3a" stroke-width="0.5"/>
<path d="M5.6,-3 C6.8,-2.8 7.8,-2 8.5,-1.1 C7.8,-0.2 6.8,0.4 5.8,0.8Z" fill="#5e9e48"/>
<path d="M1.2,1.6 C1,4.4 -1.6,7.4 -5.3,7.9 C-5,5.4 -4,3 -2.2,0.8Z" fill="#d6de5e" stroke="#2a3a4a" stroke-width="0.7"/>
<path d="M-6.4,-7.6 C-6.6,-6.8 -6.5,-5.8 -6.3,-5 L-5,-6 C-5.4,-6.6 -5.9,-7.2 -6.4,-7.6Z" fill="#5a9a44"/>
<path d="M-6.4,-7.6 C-3.8,-5.4 -2,-2.6 -1.5,0.2 C1.6,2 5.6,1.6 8.5,-1.1" fill="none" stroke="#0a1444" stroke-width="1.3" stroke-linecap="round"/>
<path d="M-1.3,-0.4 C-2.8,2 -4.4,5 -5.1,7.7" fill="none" stroke="#0a1444" stroke-width="1.5" stroke-linecap="round"/>
<path d="M-1.6,-1.2 L0.6,0.8 L-2,1.8Z" fill="#0a1444"/>
</g>
<g transform="translate(73,4)">
<rect x="0.5" y="0.5" width="13" height="13" fill="url(#icobg)" stroke="url(#icobd)" stroke-width="1"/>
<rect x="0" y="0" width="14" height="2.6" fill="#2a6ad0"/><rect x="1.2" y="1" width="11.6" height="0.9" fill="#e8f2ff"/>
<text x="7.1" y="12" text-anchor="middle" font-family="Liberation Serif,serif" font-weight="bold" font-size="12" fill="#24468f">X</text>
</g>
<g transform="translate(118,4)">
<rect x="0.5" y="0.5" width="13" height="13" fill="url(#icobg)" stroke="url(#icobd)" stroke-width="1"/>
<rect x="0" y="0" width="14" height="2.6" fill="#2a6ad0"/><rect x="1.2" y="1" width="11.6" height="0.9" fill="#e8f2ff"/>
<text x="7.1" y="12" text-anchor="middle" font-family="Liberation Serif,serif" font-weight="bold" font-size="12" fill="#24468f">X</text>
</g>
<g transform="translate(163,4)">
<rect x="0.5" y="0.5" width="13" height="13" fill="url(#icobg)" stroke="url(#icobd)" stroke-width="1"/>
<rect x="0" y="0" width="14" height="2.6" fill="#2a6ad0"/><rect x="1.2" y="1" width="11.6" height="0.9" fill="#e8f2ff"/>
<text x="7.1" y="12" text-anchor="middle" font-family="Liberation Serif,serif" font-weight="bold" font-size="12" fill="#24468f">Y</text>
</g>
<g transform="translate(208,4)">
<rect x="0.5" y="0.5" width="13" height="13" fill="url(#icobg)" stroke="url(#icobd)" stroke-width="1"/>
<rect x="0" y="0" width="14" height="2.6" fill="#2a6ad0"/><rect x="1.2" y="1" width="11.6" height="0.9" fill="#e8f2ff"/>
<text x="7.1" y="12" text-anchor="middle" font-family="Liberation Serif,serif" font-weight="bold" font-size="12" fill="#24468f">Y</text>
</g>
<g transform="translate(253,4)">
<rect x="0.5" y="0.5" width="13" height="13" fill="url(#icobg)" stroke="url(#icobd)" stroke-width="1"/>
<rect x="0" y="0" width="14" height="2.6" fill="#2a6ad0"/><rect x="1.2" y="1" width="11.6" height="0.9" fill="#e8f2ff"/>
<text x="7.1" y="12" text-anchor="middle" font-family="Liberation Serif,serif" font-weight="bold" font-size="12" fill="#24468f">Z</text>
</g>
<g transform="translate(298,4)">
<rect x="0.5" y="0.5" width="13" height="13" fill="url(#icobg)" stroke="url(#icobd)" stroke-width="1"/>
<rect x="0" y="0" width="14" height="2.6" fill="#2a6ad0"/><rect x="1.2" y="1" width="11.6" height="0.9" fill="#e8f2ff"/>
<text x="7.1" y="12" text-anchor="middle" font-family="Liberation Serif,serif" font-weight="bold" font-size="12" fill="#24468f">Z</text>
</g>
<g transform="translate(350,10.700000000000003)" stroke="#2a50d0" stroke-width="0.8" stroke-linejoin="round">
<path d="M0,-7.8 L7.8,-4.2 L7.8,4 L0,7.8 L-7.8,4 L-7.8,-4.2Z" fill="#4a78f4"/>
<path d="M0,-7.8 L7.8,-4.2 L0,-0.6 L-7.8,-4.2Z" fill="#5c8cff" stroke="#8ab0ff" stroke-width="0.6"/>
<path d="M-7.8,-4.2 L0,-0.6 L0,7.8 L-7.8,4Z" fill="#4f80f8" stroke="#86aaff" stroke-width="0.6"/>
<path d="M7.8,-4.2 L0,-0.6 L0,7.8 L7.8,4Z" fill="#3e6cec" stroke="#7ea2ff" stroke-width="0.6"/>
</g>
<rect x="397.4" y="4.4" width="9.4" height="6.2" fill="url(#sq)" stroke="#2846b8" stroke-width="0.8"/>
<rect x="397.4" y="12.600000000000003" width="9.4" height="6.2" fill="url(#sq)" stroke="#2846b8" stroke-width="0.8"/>
<g transform="translate(447.29999999999995,11.299999999999997)" stroke-linecap="butt">
<path d="M0,-7 V6.5" stroke="#9a9a9a" stroke-width="2.2"/><path d="M0,-6.6 V6.1" stroke="#f0f0f0" stroke-width="1"/>
<path d="M-7,2.6 L6.4,-2.2" stroke="#a0a0a0" stroke-width="2"/><path d="M-6.6,2.45 L6,-2.05" stroke="#ececec" stroke-width="0.8"/>
<path d="M-4.2,-2.6 L5.6,4.6" stroke="#a0a0a0" stroke-width="2"/><path d="M-3.8,-2.3 L5.2,4.3" stroke="#ececec" stroke-width="0.8"/>
<circle cx="0.4" cy="0.2" r="2.6" fill="#2a8cf0"/><circle cx="-0.2" cy="-0.5" r="1.1" fill="#7cc4ff"/>
</g>
<g transform="translate(484,3)">
<rect x="0.5" y="0.5" width="15" height="15" fill="#f4fbff" stroke="url(#icobd)" stroke-width="1"/>
<circle cx="8" cy="8" r="4.5" fill="#d8eefc" opacity="0.8"/>
<g fill="#1a50a8" stroke="#1a50a8" stroke-width="1.4" stroke-linecap="butt">
<path d="M6.4,6.4 L3.4,3.4"/><path d="M9.6,6.4 L12.6,3.4"/><path d="M6.4,9.6 L3.4,12.6"/><path d="M9.6,9.6 L12.6,12.6"/>
</g>
<g fill="#164a9e">
<path d="M2.2,2.2 h4.2 l-4.2,4.2z"/><path d="M13.8,2.2 h-4.2 l4.2,4.2z"/><path d="M2.2,13.8 h4.2 l-4.2,-4.2z"/><path d="M13.8,13.8 h-4.2 l4.2,-4.2z"/>
</g></g>
<g transform="translate(536,3)">
<path d="M0.3,0.2 H14.7 V13.8 L13.9,14.9 H1.1 L0.3,13.8Z" fill="#1c1c26"/>
<rect x="1.9" y="0.9" width="10.6" height="6.6" fill="#dde2ee"/><rect x="1.9" y="0.9" width="10.6" height="2.2" fill="#f0f2f8"/>
<rect x="4" y="9.4" width="6.8" height="4.4" fill="#c4c4c8"/><rect x="5" y="10.2" width="1.8" height="2.8" fill="#1c1c26"/>
<rect x="0.3" y="13.6" width="14.4" height="1.3" fill="#08080c"/>
</g>
<g transform="translate(589,11.400000000000006) rotate(12)">
<polygon points="5.68,-1.94 7.94,-1.61 7.94,1.61 5.68,1.94 5.39,2.64 6.75,4.48 4.48,6.75 2.64,5.39 1.94,5.68 1.61,7.94 -1.61,7.94 -1.94,5.68 -2.64,5.39 -4.48,6.75 -6.75,4.48 -5.39,2.64 -5.68,1.94 -7.94,1.61 -7.94,-1.61 -5.68,-1.94 -5.39,-2.64 -6.75,-4.48 -4.48,-6.75 -2.64,-5.39 -1.94,-5.68 -1.61,-7.94 1.61,-7.94 1.94,-5.68 2.64,-5.39 4.48,-6.75 6.75,-4.48 5.39,-2.64" fill="url(#gearg)" stroke="#b4b4cc" stroke-width="1.1" stroke-linejoin="round"/>
<ellipse cx="0.3" cy="0" rx="2.5" ry="1.9" fill="#fff" stroke="#b0b0c8" stroke-width="0.9" transform="rotate(15)"/>
</g>
</svg>
<svg id="scene" viewBox="0 0 659 417.5">
<rect width="659" height="417.5" fill="#808080"/>
<path d="M321.6 89.1l0.6-0.8M333.3 88.5l0.6-0.8M415.5 88.6l1.6-2.0M320.7 101.0l0.6-0.8M333.3 101.6l0.6-0.8M416.9 102.3l1.6-2.0M309.1 114.4l0.6-0.8M321.5 114.5l0.6-0.8M333.2 113.0l0.6-0.8M416.4 113.7l1.6-2.0M309.1 125.6l0.6-0.8M322.3 126.5l0.6-0.8M416.2 126.7l1.6-2.0M428.7 126.1l1.6-2.0M310.3 138.9l0.6-0.8M321.1 137.9l0.6-0.8M416.8 139.2l1.6-2.0M427.7 139.7l1.6-2.0M296.9 150.3l0.6-0.8M309.5 150.0l0.6-0.8M321.0 150.5l0.6-0.8M428.5 151.6l1.6-2.0M440.5 152.0l1.6-2.0M298.0 163.6l0.6-0.8M310.2 162.9l0.6-0.8M427.7 162.8l1.6-2.0M439.7 163.9l1.6-2.0M297.2 176.0l0.6-0.8M309.9 175.3l0.6-0.8M439.3 176.6l1.6-2.0M451.2 176.3l1.6-2.0M297.4 188.2l0.6-0.8M308.8 187.1l0.6-0.8M440.7 188.7l1.6-2.0M451.3 188.2l1.6-2.0M298.4 199.8l0.6-0.8M309.7 200.6l0.6-0.8M440.5 200.0l1.6-2.0M451.3 200.6l1.6-2.0M298.2 213.0l0.6-0.8M310.3 212.7l0.6-0.8M451.8 214.0l1.6-2.0M297.3 225.1l0.6-0.8M309.0 225.0l0.6-0.8M452.1 226.3l1.6-2.0M298.1 238.1l0.6-0.8M310.2 237.3l0.6-0.8M440.1 238.2l1.6-2.0M452.0 237.6l1.6-2.0M309.1 250.4l0.6-0.8M322.3 250.6l0.6-0.8M440.2 250.5l1.6-2.0M452.7 251.0l1.6-2.0M322.2 262.6l0.6-0.8M427.9 263.6l1.6-2.0M440.2 263.1l1.6-2.0M322.3 273.5l0.6-0.8M333.6 274.7l0.6-0.8M428.1 274.4l1.6-2.0M440.0 275.1l1.6-2.0M322.2 285.9l0.6-0.8M333.4 286.2l0.6-0.8M415.5 287.2l1.6-2.0M428.0 286.6l1.6-2.0M333.0 297.7l0.6-0.8M416.1 298.7l1.6-2.0M334.2 311.3l0.6-0.8M415.5 310.5l1.6-2.0M333.3 323.7l0.6-0.8M415.7 324.0l1.6-2.0" stroke="#d8b0a4" stroke-width="1.7" stroke-linecap="round" opacity="0.62" fill="none"/>
<path d="M331.6 91.2h0M331.9 91.8h0M332.7 92.5h0M333.9 93.1h0M335.5 93.7h0M337.6 94.3h0M340.0 94.8h0M342.8 95.3h0M345.9 95.8h0M349.3 96.2h0M352.9 96.5h0M356.8 96.8h0M360.8 97.0h0M364.9 97.2h0M369.2 97.3h0M373.5 97.3h0M377.7 97.2h0M381.9 97.1h0M386.1 96.9h0M390.0 96.7h0M393.8 96.4h0M397.3 96.0h0M400.6 95.6h0M403.5 95.1h0M406.1 94.6h0M408.4 94.0h0M410.2 93.5h0M411.7 92.8h0M412.7 92.2h0M413.3 91.6h0M331.6 103.8h0M331.9 104.4h0M332.6 104.9h0M333.8 105.5h0M335.3 106.0h0M337.3 106.5h0M339.7 107.0h0M342.5 107.5h0M345.5 107.9h0M348.9 108.2h0M352.5 108.6h0M356.3 108.8h0M360.4 109.0h0M364.5 109.2h0M368.7 109.2h0M373.0 109.3h0M377.3 109.2h0M381.5 109.1h0M385.6 109.0h0M389.6 108.8h0M393.4 108.5h0M397.0 108.2h0M400.3 107.8h0M403.2 107.4h0M405.9 106.9h0M408.2 106.4h0M410.1 105.9h0M411.6 105.4h0M412.6 104.8h0M413.2 104.2h0M331.0 116.3h0M331.2 116.8h0M331.9 117.3h0M333.0 117.8h0M334.6 118.3h0M336.6 118.8h0M338.9 119.2h0M341.7 119.6h0M344.7 120.0h0M348.1 120.3h0M351.8 120.6h0M355.6 120.8h0M359.7 121.0h0M363.9 121.2h0M368.2 121.2h0M372.5 121.3h0M376.8 121.2h0M381.1 121.2h0M385.3 121.0h0M389.4 120.8h0M393.3 120.6h0M396.9 120.3h0M400.3 120.0h0M403.3 119.6h0M406.1 119.2h0M408.4 118.8h0M410.4 118.3h0M412.0 117.8h0M413.1 117.3h0M413.8 116.8h0M324.5 128.7h0M324.9 129.2h0M325.8 129.7h0M327.2 130.2h0M329.1 130.7h0M331.5 131.2h0M334.4 131.6h0M337.6 132.0h0M341.3 132.4h0M345.3 132.7h0M349.6 133.0h0M354.1 133.2h0M358.9 133.4h0M363.8 133.5h0M368.8 133.6h0M373.9 133.6h0M378.9 133.6h0M383.9 133.5h0M388.7 133.3h0M393.4 133.1h0M397.9 132.9h0M402.0 132.6h0M405.9 132.2h0M409.4 131.9h0M412.5 131.4h0M415.2 131.0h0M417.3 130.5h0M419.1 130.0h0M420.3 129.5h0M420.9 129.0h0M321.3 141.0h0M321.6 141.5h0M322.5 142.0h0M324.0 142.4h0M325.9 142.9h0M328.4 143.3h0M331.4 143.7h0M334.8 144.0h0M338.6 144.4h0M342.9 144.6h0M347.4 144.9h0M352.2 145.1h0M357.3 145.3h0M362.5 145.4h0M367.8 145.5h0M373.2 145.5h0M378.6 145.4h0M383.9 145.4h0M389.1 145.2h0M394.1 145.1h0M398.9 144.9h0M403.4 144.6h0M407.6 144.3h0M411.3 144.0h0M414.7 143.6h0M417.6 143.2h0M420.0 142.8h0M421.9 142.3h0M423.3 141.9h0M424.1 141.4h0M313.9 153.3h0M314.3 153.8h0M315.3 154.2h0M317.0 154.6h0M319.3 155.0h0M322.1 155.4h0M325.6 155.8h0M329.5 156.1h0M333.9 156.4h0M338.8 156.7h0M344.0 156.9h0M349.5 157.1h0M355.3 157.3h0M361.3 157.4h0M367.5 157.4h0M373.6 157.5h0M379.8 157.4h0M385.9 157.4h0M391.9 157.2h0M397.6 157.1h0M403.1 156.9h0M408.2 156.6h0M413.0 156.4h0M417.3 156.1h0M421.2 155.7h0M424.5 155.3h0M427.2 155.0h0M429.4 154.5h0M430.9 154.1h0M431.8 153.7h0M312.2 165.7h0M312.7 166.0h0M313.8 166.4h0M315.6 166.7h0M318.1 167.0h0M321.1 167.3h0M324.8 167.6h0M329.0 167.9h0M333.6 168.1h0M338.8 168.4h0M344.3 168.5h0M350.2 168.7h0M356.3 168.8h0M362.6 168.9h0M369.0 169.0h0M375.5 169.0h0M382.0 168.9h0M388.5 168.9h0M394.7 168.8h0M400.7 168.6h0M406.5 168.5h0M411.9 168.3h0M416.9 168.1h0M421.4 167.8h0M425.4 167.5h0M428.8 167.2h0M431.7 166.9h0M433.9 166.6h0M435.5 166.2h0M436.4 165.9h0M309.7 178.0h0M310.1 178.3h0M311.3 178.5h0M313.2 178.8h0M315.7 179.0h0M318.9 179.3h0M322.8 179.5h0M327.2 179.7h0M332.2 179.9h0M337.6 180.0h0M343.5 180.2h0M349.7 180.3h0M356.2 180.4h0M362.9 180.5h0M369.8 180.5h0M376.8 180.5h0M383.7 180.5h0M390.5 180.4h0M397.2 180.4h0M403.7 180.3h0M409.8 180.2h0M415.6 180.0h0M421.0 179.8h0M425.8 179.7h0M430.1 179.4h0M433.9 179.2h0M436.9 179.0h0M439.4 178.7h0M441.1 178.5h0M442.1 178.2h0M309.0 190.3h0M309.6 190.5h0M311.0 190.6h0M313.0 190.8h0M315.8 190.9h0M319.2 191.1h0M323.3 191.2h0M328.0 191.3h0M333.3 191.4h0M339.0 191.5h0M345.1 191.6h0M351.6 191.7h0M358.4 191.7h0M365.4 191.7h0M372.5 191.8h0M379.7 191.8h0M386.9 191.8h0M393.9 191.7h0M400.8 191.7h0M407.4 191.6h0M413.7 191.5h0M419.6 191.5h0M425.1 191.4h0M430.0 191.2h0M434.4 191.1h0M438.1 191.0h0M441.2 190.9h0M443.5 190.7h0M445.2 190.6h0M446.1 190.4h0M309.7 202.6h0M310.4 202.6h0M311.7 202.7h0M313.8 202.7h0M316.7 202.7h0M320.2 202.8h0M324.4 202.8h0M329.1 202.8h0M334.4 202.9h0M340.2 202.9h0M346.5 202.9h0M353.1 202.9h0M359.9 202.9h0M367.0 202.9h0M374.2 202.9h0M381.5 202.9h0M388.8 202.9h0M395.9 202.9h0M402.9 202.9h0M409.6 202.9h0M416.0 202.9h0M422.0 202.9h0M427.5 202.8h0M432.4 202.8h0M436.8 202.8h0M440.6 202.8h0M443.7 202.7h0M446.1 202.7h0M447.7 202.7h0M448.6 202.6h0M450.0 215.3h0M449.4 215.4h0M448.0 215.5h0M445.8 215.6h0M442.9 215.7h0M439.3 215.7h0M435.0 215.8h0M430.2 215.9h0M424.7 215.9h0M418.8 216.0h0M412.5 216.0h0M405.8 216.1h0M398.8 216.1h0M391.6 216.1h0M384.3 216.1h0M376.9 216.1h0M369.5 216.1h0M362.3 216.1h0M355.2 216.1h0M348.4 216.0h0M342.0 216.0h0M335.9 215.9h0M330.4 215.9h0M325.4 215.8h0M320.9 215.8h0M317.2 215.7h0M314.1 215.6h0M311.7 215.5h0M310.0 215.4h0M309.2 215.4h0M449.4 227.8h0M448.7 228.0h0M447.2 228.2h0M444.9 228.4h0M442.0 228.6h0M438.3 228.8h0M434.0 228.9h0M429.1 229.1h0M423.7 229.2h0M417.7 229.3h0M411.4 229.4h0M404.7 229.5h0M397.7 229.6h0M390.5 229.6h0M383.2 229.7h0M375.9 229.7h0M368.5 229.6h0M361.3 229.6h0M354.3 229.5h0M347.6 229.4h0M341.2 229.3h0M335.3 229.2h0M329.8 229.1h0M324.8 228.9h0M320.5 228.8h0M316.8 228.6h0M313.8 228.4h0M311.5 228.2h0M309.9 228.0h0M309.1 227.8h0M447.6 240.2h0M447.1 240.6h0M445.9 240.9h0M444.0 241.2h0M441.4 241.5h0M438.1 241.7h0M434.1 242.0h0M429.6 242.2h0M424.5 242.5h0M418.9 242.7h0M412.9 242.8h0M406.5 243.0h0M399.8 243.1h0M392.9 243.2h0M385.9 243.2h0M378.8 243.2h0M371.7 243.2h0M364.7 243.1h0M357.8 243.1h0M351.2 242.9h0M344.9 242.8h0M339.0 242.6h0M333.5 242.4h0M328.5 242.2h0M324.1 241.9h0M320.3 241.7h0M317.1 241.4h0M314.7 241.1h0M312.9 240.8h0M311.9 240.5h0M439.2 252.5h0M438.8 252.9h0M437.8 253.3h0M436.1 253.7h0M433.8 254.0h0M430.8 254.4h0M427.3 254.7h0M423.3 255.0h0M418.8 255.2h0M413.9 255.5h0M408.6 255.7h0M402.9 255.9h0M397.0 256.0h0M390.9 256.1h0M384.7 256.1h0M378.4 256.2h0M372.1 256.1h0M365.9 256.1h0M359.8 256.0h0M353.9 255.8h0M348.3 255.6h0M343.1 255.4h0M338.2 255.2h0M333.8 254.9h0M329.9 254.6h0M326.5 254.3h0M323.7 254.0h0M321.5 253.6h0M319.9 253.2h0M319.0 252.8h0M434.7 264.9h0M434.3 265.3h0M433.3 265.8h0M431.7 266.2h0M429.5 266.6h0M426.8 267.0h0M423.5 267.4h0M419.7 267.8h0M415.5 268.1h0M410.8 268.4h0M405.8 268.6h0M400.5 268.8h0M395.0 269.0h0M389.3 269.1h0M383.4 269.1h0M377.5 269.1h0M371.6 269.1h0M365.8 269.0h0M360.1 268.9h0M354.7 268.7h0M349.4 268.5h0M344.5 268.3h0M340.0 268.0h0M335.9 267.7h0M332.2 267.3h0M329.1 266.9h0M326.5 266.5h0M324.4 266.1h0M323.0 265.6h0M322.1 265.2h0M427.6 277.1h0M427.1 277.6h0M426.1 278.1h0M424.5 278.5h0M422.4 279.0h0M419.9 279.4h0M416.9 279.8h0M413.4 280.2h0M409.6 280.5h0M405.4 280.8h0M400.9 281.0h0M396.1 281.2h0M391.2 281.4h0M386.1 281.5h0M380.9 281.6h0M375.7 281.6h0M370.5 281.5h0M365.3 281.4h0M360.3 281.3h0M355.5 281.1h0M351.0 280.8h0M346.7 280.6h0M342.8 280.2h0M339.2 279.9h0M336.1 279.5h0M333.4 279.1h0M331.2 278.6h0M329.6 278.2h0M328.4 277.7h0M327.8 277.2h0M423.7 288.6h0M423.4 289.1h0M422.7 289.7h0M421.4 290.2h0M419.7 290.7h0M417.5 291.1h0M414.8 291.6h0M411.8 292.0h0M408.4 292.4h0M404.6 292.7h0M400.6 293.0h0M396.3 293.2h0M391.7 293.4h0M387.1 293.6h0M382.3 293.6h0M377.5 293.7h0M372.7 293.6h0M367.9 293.5h0M363.3 293.4h0M358.8 293.2h0M354.5 293.0h0M350.5 292.7h0M346.7 292.3h0M343.3 292.0h0M340.3 291.6h0M337.7 291.1h0M335.5 290.6h0M333.8 290.1h0M332.6 289.6h0M331.8 289.1h0M417.1 300.6h0M416.7 301.1h0M415.8 301.6h0M414.5 302.1h0M412.8 302.6h0M410.6 303.1h0M408.1 303.5h0M405.3 303.9h0M402.1 304.3h0M398.6 304.6h0M394.9 304.9h0M391.0 305.1h0M387.0 305.3h0M382.8 305.4h0M378.5 305.5h0M374.3 305.5h0M370.0 305.4h0M365.8 305.3h0M361.8 305.1h0M357.9 304.9h0M354.1 304.6h0M350.7 304.3h0M347.5 304.0h0M344.6 303.6h0M342.1 303.1h0M340.0 302.6h0M338.2 302.2h0M336.9 301.6h0M336.0 301.1h0M335.6 300.6h0M417.2 313.4h0M416.8 314.0h0M416.1 314.6h0M414.8 315.2h0M413.2 315.7h0M411.1 316.3h0M408.7 316.8h0M405.9 317.2h0M402.8 317.6h0M399.4 318.0h0M395.8 318.3h0M391.9 318.6h0M387.9 318.8h0M383.7 318.9h0M379.5 319.0h0M375.2 319.0h0M371.0 319.0h0M366.7 318.9h0M362.7 318.7h0M358.7 318.5h0M354.9 318.2h0M351.4 317.8h0M348.2 317.4h0M345.2 317.0h0M342.6 316.5h0M340.4 316.0h0M338.6 315.4h0M337.2 314.8h0M336.2 314.3h0M335.6 313.6h0M417.2 326.2h0M416.9 326.9h0M416.2 327.6h0M415.0 328.2h0M413.4 328.9h0M411.4 329.5h0M409.1 330.0h0M406.3 330.6h0M403.3 331.0h0M399.9 331.5h0M396.3 331.8h0M392.4 332.1h0M388.4 332.4h0M384.3 332.5h0M380.0 332.6h0M375.8 332.6h0M371.5 332.6h0M367.3 332.5h0M363.2 332.3h0M359.2 332.0h0M355.4 331.7h0M351.9 331.4h0M348.6 330.9h0M345.6 330.4h0M343.0 329.9h0M340.7 329.3h0M338.8 328.7h0M337.3 328.1h0M336.3 327.4h0M335.7 326.7h0" stroke="#121212" stroke-width="3.6" stroke-linecap="round" fill="none"/>
<path d="M344.8 88.6l1.8-2.2M356.8 89.6l1.8-2.2M403.7 88.4l1.8-2.2M344.7 102.0l1.8-2.2M356.9 101.7l1.8-2.2M380.7 101.5l1.8-2.2M404.0 102.4l1.8-2.2M344.9 114.8l1.8-2.2M368.9 113.8l1.8-2.2M391.8 114.5l1.8-2.2M403.7 114.8l1.8-2.2M332.5 127.3l1.8-2.2M356.0 127.5l1.8-2.2M368.1 127.1l1.8-2.2M380.1 126.0l1.8-2.2M333.2 139.8l1.8-2.2M356.5 138.5l1.8-2.2M332.9 150.8l1.8-2.2M356.9 151.5l1.8-2.2M380.7 152.1l1.8-2.2M403.9 152.2l1.8-2.2M380.3 164.2l1.8-2.2M345.4 176.7l1.8-2.2M356.7 175.8l1.8-2.2M380.7 176.8l1.8-2.2M391.8 176.0l1.8-2.2M428.8 176.0l1.8-2.2M332.4 187.8l1.8-2.2M368.8 187.9l1.8-2.2M379.9 187.6l1.8-2.2M392.6 187.9l1.8-2.2M404.0 188.7l1.8-2.2M416.3 188.8l1.8-2.2M428.5 189.0l1.8-2.2M321.4 201.4l1.8-2.2M392.1 200.0l1.8-2.2M404.3 201.1l1.8-2.2M415.3 201.2l1.8-2.2M428.5 200.2l1.8-2.2M321.6 212.7l1.8-2.2M356.7 213.1l1.8-2.2M369.1 214.0l1.8-2.2M381.0 214.1l1.8-2.2M392.4 212.9l1.8-2.2M404.2 213.6l1.8-2.2M416.9 213.4l1.8-2.2M428.5 213.5l1.8-2.2M440.2 212.7l1.8-2.2M321.4 226.4l1.8-2.2M355.8 225.3l1.8-2.2M368.8 225.5l1.8-2.2M391.7 225.8l1.8-2.2M403.7 225.8l1.8-2.2M415.9 225.7l1.8-2.2M320.6 239.0l1.8-2.2M333.6 238.9l1.8-2.2M344.3 238.7l1.8-2.2M356.0 238.8l1.8-2.2M369.0 237.7l1.8-2.2M380.7 237.5l1.8-2.2M416.1 238.6l1.8-2.2M427.3 237.7l1.8-2.2M344.6 251.0l1.8-2.2M356.5 250.6l1.8-2.2M381.0 250.1l1.8-2.2M392.7 250.4l1.8-2.2M403.7 250.6l1.8-2.2M428.6 250.8l1.8-2.2M333.2 263.4l1.8-2.2M357.0 263.3l1.8-2.2M368.9 262.2l1.8-2.2M380.4 262.1l1.8-2.2M392.5 263.1l1.8-2.2M404.9 263.2l1.8-2.2M416.4 263.0l1.8-2.2M344.3 274.8l1.8-2.2M356.1 274.8l1.8-2.2M415.4 275.7l1.8-2.2M368.2 285.9l1.8-2.2M345.4 298.8l1.8-2.2M367.9 298.6l1.8-2.2M379.9 297.7l1.8-2.2M345.1 310.9l1.8-2.2M392.7 310.8l1.8-2.2M344.1 324.3l1.8-2.2M368.7 324.0l1.8-2.2M392.8 323.6l1.8-2.2" stroke="#c88a78" stroke-width="1.6" stroke-linecap="round" opacity="0.5" fill="none"/>
<g fill="#c05a44" opacity="0.75"><circle cx="309.5" cy="202.6" r="2.3"/><circle cx="309.5" cy="215.3" r="2.3"/><circle cx="309.5" cy="227.7" r="2.3"/><circle cx="312.0" cy="240.2" r="2.3"/><circle cx="390.0" cy="215.5" r="2.3"/><circle cx="403.0" cy="215.5" r="2.3"/><circle cx="390.0" cy="228.0" r="2.3"/><circle cx="403.0" cy="228.0" r="2.3"/><circle cx="377.0" cy="240.5" r="2.3"/><circle cx="390.0" cy="240.5" r="2.3"/><circle cx="369.0" cy="203.0" r="2.3"/><circle cx="360.0" cy="215.3" r="2.3"/><circle cx="348.0" cy="228.0" r="2.3"/><circle cx="321.0" cy="215.3" r="2.3"/><circle cx="416.0" cy="215.3" r="2.3"/><circle cx="428.0" cy="228.0" r="2.3"/><circle cx="449.0" cy="215.3" r="2.3"/><circle cx="447.0" cy="227.7" r="2.3"/></g>
<path d="M413.4 90.9h0M413.1 90.3h0M412.3 89.6h0M411.1 89.0h0M409.5 88.4h0M407.4 87.8h0M405.0 87.3h0M402.2 86.8h0M399.1 86.3h0M395.7 85.9h0M392.1 85.6h0M388.2 85.3h0M384.2 85.1h0M380.1 84.9h0M375.8 84.8h0M371.5 84.8h0M367.3 84.9h0M363.1 85.0h0M358.9 85.2h0M355.0 85.4h0M351.2 85.7h0M347.7 86.1h0M344.4 86.5h0M341.5 87.0h0M338.9 87.5h0M336.6 88.1h0M334.8 88.6h0M333.3 89.3h0M332.3 89.9h0M331.7 90.5h0M413.4 103.6h0M413.1 103.0h0M412.4 102.5h0M411.2 101.9h0M409.7 101.4h0M407.7 100.9h0M405.3 100.4h0M402.5 99.9h0M399.5 99.5h0M396.1 99.2h0M392.5 98.8h0M388.7 98.6h0M384.6 98.4h0M380.5 98.2h0M376.3 98.2h0M372.0 98.1h0M367.7 98.2h0M363.5 98.3h0M359.4 98.4h0M355.4 98.6h0M351.6 98.9h0M348.0 99.2h0M344.7 99.6h0M341.8 100.0h0M339.1 100.5h0M336.8 101.0h0M334.9 101.5h0M333.4 102.0h0M332.4 102.6h0M331.8 103.2h0M414.0 116.3h0M413.8 115.8h0M413.1 115.3h0M412.0 114.8h0M410.4 114.3h0M408.4 113.8h0M406.1 113.4h0M403.3 113.0h0M400.3 112.6h0M396.9 112.3h0M393.2 112.0h0M389.4 111.8h0M385.3 111.6h0M381.1 111.4h0M376.8 111.4h0M372.5 111.3h0M368.2 111.4h0M363.9 111.4h0M359.7 111.6h0M355.6 111.8h0M351.7 112.0h0M348.1 112.3h0M344.7 112.6h0M341.7 113.0h0M338.9 113.4h0M336.6 113.8h0M334.6 114.3h0M333.0 114.8h0M331.9 115.3h0M331.2 115.8h0M421.1 128.5h0M420.7 128.0h0M419.8 127.5h0M418.4 127.0h0M416.5 126.5h0M414.1 126.0h0M411.2 125.6h0M408.0 125.2h0M404.3 124.8h0M400.3 124.5h0M396.0 124.2h0M391.5 124.0h0M386.7 123.8h0M381.8 123.7h0M376.8 123.6h0M371.7 123.6h0M366.7 123.6h0M361.7 123.7h0M356.9 123.9h0M352.2 124.1h0M347.7 124.3h0M343.6 124.6h0M339.7 125.0h0M336.2 125.3h0M333.1 125.8h0M330.4 126.2h0M328.3 126.7h0M326.5 127.2h0M325.3 127.7h0M324.7 128.2h0M424.3 141.0h0M424.0 140.5h0M423.1 140.0h0M421.6 139.6h0M419.7 139.1h0M417.2 138.7h0M414.2 138.3h0M410.8 138.0h0M407.0 137.6h0M402.7 137.4h0M398.2 137.1h0M393.4 136.9h0M388.3 136.7h0M383.1 136.6h0M377.8 136.5h0M372.4 136.5h0M367.0 136.6h0M361.7 136.6h0M356.5 136.8h0M351.5 136.9h0M346.7 137.1h0M342.2 137.4h0M338.0 137.7h0M334.3 138.0h0M330.9 138.4h0M328.0 138.8h0M325.6 139.2h0M323.7 139.7h0M322.3 140.1h0M321.5 140.6h0M432.1 153.3h0M431.7 152.8h0M430.7 152.4h0M429.0 152.0h0M426.7 151.6h0M423.9 151.2h0M420.4 150.8h0M416.5 150.5h0M412.1 150.2h0M407.2 149.9h0M402.0 149.7h0M396.5 149.5h0M390.7 149.3h0M384.7 149.2h0M378.5 149.2h0M372.4 149.1h0M366.2 149.2h0M360.1 149.2h0M354.1 149.4h0M348.4 149.5h0M342.9 149.7h0M337.8 150.0h0M333.0 150.2h0M328.7 150.5h0M324.8 150.9h0M321.5 151.3h0M318.8 151.6h0M316.6 152.1h0M315.1 152.5h0M314.2 152.9h0M436.6 165.5h0M436.1 165.2h0M435.0 164.8h0M433.2 164.5h0M430.7 164.2h0M427.7 163.9h0M424.0 163.6h0M419.8 163.3h0M415.2 163.1h0M410.0 162.8h0M404.5 162.7h0M398.6 162.5h0M392.5 162.4h0M386.2 162.3h0M379.8 162.2h0M373.3 162.2h0M366.8 162.3h0M360.3 162.3h0M354.1 162.4h0M348.1 162.6h0M342.3 162.7h0M336.9 162.9h0M331.9 163.1h0M327.4 163.4h0M323.4 163.7h0M320.0 164.0h0M317.1 164.3h0M314.9 164.6h0M313.3 165.0h0M312.4 165.3h0M442.4 178.0h0M442.0 177.7h0M440.8 177.5h0M438.9 177.2h0M436.4 177.0h0M433.2 176.7h0M429.3 176.5h0M424.9 176.3h0M419.9 176.1h0M414.5 176.0h0M408.6 175.8h0M402.4 175.7h0M395.9 175.6h0M389.2 175.5h0M382.3 175.5h0M375.3 175.5h0M368.4 175.5h0M361.6 175.6h0M354.9 175.6h0M348.4 175.7h0M342.3 175.8h0M336.5 176.0h0M331.1 176.2h0M326.3 176.3h0M322.0 176.6h0M318.2 176.8h0M315.2 177.0h0M312.7 177.3h0M311.0 177.5h0M310.0 177.8h0M446.3 190.3h0M445.7 190.1h0M444.3 190.0h0M442.3 189.8h0M439.5 189.7h0M436.1 189.5h0M432.0 189.4h0M427.3 189.3h0M422.0 189.2h0M416.3 189.1h0M410.2 189.0h0M403.7 188.9h0M396.9 188.9h0M389.9 188.9h0M382.8 188.8h0M375.6 188.8h0M368.4 188.8h0M361.4 188.9h0M354.5 188.9h0M347.9 189.0h0M341.6 189.1h0M335.7 189.1h0M330.2 189.2h0M325.3 189.4h0M320.9 189.5h0M317.2 189.6h0M314.1 189.7h0M311.8 189.9h0M310.1 190.0h0M309.2 190.2h0M448.8 202.6h0M448.1 202.6h0M446.8 202.5h0M444.7 202.5h0M441.8 202.5h0M438.3 202.4h0M434.1 202.4h0M429.4 202.4h0M424.1 202.3h0M418.3 202.3h0M412.0 202.3h0M405.4 202.3h0M398.6 202.3h0M391.5 202.3h0M384.3 202.3h0M377.0 202.3h0M369.7 202.3h0M362.6 202.3h0M355.6 202.3h0M348.9 202.3h0M342.5 202.3h0M336.5 202.3h0M331.0 202.4h0M326.1 202.4h0M321.7 202.4h0M317.9 202.4h0M314.8 202.5h0M312.4 202.5h0M310.8 202.5h0M309.9 202.6h0M309.1 215.3h0M309.7 215.2h0M311.1 215.1h0M313.3 215.0h0M316.2 214.9h0M319.8 214.9h0M324.1 214.8h0M328.9 214.7h0M334.4 214.7h0M340.3 214.6h0M346.6 214.6h0M353.3 214.5h0M360.3 214.5h0M367.5 214.5h0M374.8 214.5h0M382.2 214.5h0M389.6 214.5h0M396.8 214.5h0M403.9 214.5h0M410.7 214.6h0M417.1 214.6h0M423.2 214.7h0M428.7 214.7h0M433.7 214.8h0M438.2 214.8h0M441.9 214.9h0M445.0 215.0h0M447.4 215.1h0M449.1 215.2h0M449.9 215.2h0M309.1 227.6h0M309.8 227.4h0M311.3 227.2h0M313.6 227.0h0M316.5 226.8h0M320.2 226.6h0M324.5 226.5h0M329.4 226.3h0M334.8 226.2h0M340.8 226.1h0M347.1 226.0h0M353.8 225.9h0M360.8 225.8h0M368.0 225.8h0M375.3 225.7h0M382.6 225.7h0M390.0 225.8h0M397.2 225.8h0M404.2 225.9h0M410.9 226.0h0M417.3 226.1h0M423.2 226.2h0M428.7 226.3h0M433.7 226.5h0M438.0 226.6h0M441.7 226.8h0M444.7 227.0h0M447.0 227.2h0M448.6 227.4h0M449.4 227.6h0M311.6 240.2h0M312.1 239.8h0M313.3 239.5h0M315.2 239.2h0M317.8 238.9h0M321.1 238.7h0M325.1 238.4h0M329.6 238.2h0M334.7 237.9h0M340.3 237.7h0M346.3 237.6h0M352.7 237.4h0M359.4 237.3h0M366.3 237.2h0M373.3 237.2h0M380.4 237.2h0M387.5 237.2h0M394.5 237.3h0M401.4 237.3h0M408.0 237.5h0M414.3 237.6h0M420.2 237.8h0M425.7 238.0h0M430.7 238.2h0M435.1 238.5h0M438.9 238.7h0M442.1 239.0h0M444.5 239.3h0M446.3 239.6h0M447.3 239.9h0M318.7 252.5h0M319.1 252.1h0M320.1 251.7h0M321.8 251.3h0M324.1 251.0h0M327.1 250.6h0M330.6 250.3h0M334.6 250.0h0M339.1 249.8h0M344.0 249.5h0M349.3 249.3h0M355.0 249.1h0M360.9 249.0h0M367.0 248.9h0M373.2 248.9h0M379.5 248.8h0M385.8 248.9h0M392.0 248.9h0M398.1 249.0h0M404.0 249.2h0M409.6 249.4h0M414.8 249.6h0M419.7 249.8h0M424.1 250.1h0M428.0 250.4h0M431.4 250.7h0M434.2 251.0h0M436.4 251.4h0M438.0 251.8h0M438.9 252.2h0M321.9 264.7h0M322.3 264.3h0M323.3 263.8h0M324.9 263.4h0M327.1 263.0h0M329.8 262.6h0M333.1 262.2h0M336.9 261.8h0M341.1 261.5h0M345.8 261.2h0M350.8 261.0h0M356.1 260.8h0M361.6 260.6h0M367.3 260.5h0M373.2 260.5h0M379.1 260.5h0M385.0 260.5h0M390.8 260.6h0M396.5 260.7h0M401.9 260.9h0M407.2 261.1h0M412.1 261.3h0M416.6 261.6h0M420.7 261.9h0M424.4 262.3h0M427.5 262.7h0M430.1 263.1h0M432.2 263.5h0M433.6 264.0h0M434.5 264.4h0M327.7 276.7h0M328.2 276.2h0M329.2 275.7h0M330.8 275.3h0M332.9 274.8h0M335.4 274.4h0M338.4 274.0h0M341.9 273.6h0M345.7 273.3h0M349.9 273.0h0M354.4 272.8h0M359.2 272.6h0M364.1 272.4h0M369.2 272.3h0M374.4 272.2h0M379.6 272.2h0M384.8 272.3h0M390.0 272.4h0M395.0 272.5h0M399.8 272.7h0M404.3 273.0h0M408.6 273.2h0M412.5 273.6h0M416.1 273.9h0M419.2 274.3h0M421.9 274.7h0M424.1 275.2h0M425.7 275.6h0M426.9 276.1h0M427.5 276.6h0M331.6 288.6h0M331.9 288.1h0M332.6 287.5h0M333.9 287.0h0M335.6 286.5h0M337.8 286.1h0M340.5 285.6h0M343.5 285.2h0M346.9 284.8h0M350.7 284.5h0M354.7 284.2h0M359.0 284.0h0M363.6 283.8h0M368.2 283.6h0M373.0 283.6h0M377.8 283.5h0M382.6 283.6h0M387.4 283.7h0M392.0 283.8h0M396.5 284.0h0M400.8 284.2h0M404.8 284.5h0M408.6 284.9h0M412.0 285.2h0M415.0 285.6h0M417.6 286.1h0M419.8 286.6h0M421.5 287.1h0M422.7 287.6h0M423.5 288.1h0M335.6 300.0h0M336.0 299.5h0M336.9 299.0h0M338.2 298.5h0M339.9 298.0h0M342.1 297.5h0M344.6 297.1h0M347.4 296.7h0M350.6 296.3h0M354.1 296.0h0M357.8 295.7h0M361.7 295.5h0M365.7 295.3h0M369.9 295.2h0M374.2 295.1h0M378.4 295.1h0M382.7 295.2h0M386.9 295.3h0M390.9 295.5h0M394.8 295.7h0M398.6 296.0h0M402.0 296.3h0M405.2 296.6h0M408.1 297.0h0M410.6 297.5h0M412.7 298.0h0M414.5 298.4h0M415.8 299.0h0M416.7 299.5h0M417.1 300.0h0M335.5 313.0h0M335.9 312.4h0M336.6 311.8h0M337.9 311.2h0M339.5 310.7h0M341.6 310.1h0M344.0 309.6h0M346.8 309.2h0M349.9 308.8h0M353.3 308.4h0M356.9 308.1h0M360.8 307.8h0M364.8 307.6h0M369.0 307.5h0M373.2 307.4h0M377.5 307.4h0M381.7 307.4h0M386.0 307.5h0M390.0 307.7h0M394.0 307.9h0M397.8 308.2h0M401.3 308.6h0M404.5 309.0h0M407.5 309.4h0M410.1 309.9h0M412.3 310.4h0M414.1 311.0h0M415.5 311.6h0M416.5 312.1h0M417.1 312.8h0M335.5 326.1h0M335.8 325.4h0M336.5 324.7h0M337.7 324.1h0M339.3 323.4h0M341.3 322.8h0M343.6 322.3h0M346.4 321.7h0M349.4 321.3h0M352.8 320.8h0M356.4 320.5h0M360.3 320.2h0M364.3 319.9h0M368.4 319.8h0M372.7 319.7h0M376.9 319.7h0M381.2 319.7h0M385.4 319.8h0M389.5 320.0h0M393.5 320.3h0M397.3 320.6h0M400.8 320.9h0M404.1 321.4h0M407.1 321.9h0M409.7 322.4h0M412.0 323.0h0M413.9 323.6h0M415.4 324.2h0M416.4 324.9h0M417.0 325.6h0" stroke="#0a0a0a" stroke-width="3.8" stroke-linecap="round" fill="none"/>
<rect x="205" y="272" width="1.3" height="1.3" fill="#b0b0b0"/>
</svg><svg id="hc" viewBox="0 0 659 440">
<rect width="659" height="440" fill="#c0c0c0"/>
<rect x="81.60" y="43.40" width="510.78" height="351.80" fill="#fff"/>
<g fill="#0000ff" stroke="#000" stroke-width="1.1"><rect x="86.56" y="394.36" width="4.83" height="0.84"/><rect x="91.39" y="393.09" width="4.83" height="2.11"/><rect x="96.22" y="390.27" width="4.83" height="4.93"/><rect x="101.06" y="381.13" width="4.83" height="14.07"/><rect x="105.89" y="371.28" width="4.83" height="23.92"/><rect x="110.72" y="356.22" width="4.83" height="38.98"/><rect x="115.55" y="327.37" width="4.83" height="67.83"/><rect x="120.38" y="282.62" width="4.83" height="112.58"/><rect x="125.22" y="256.31" width="4.83" height="138.89"/><rect x="130.05" y="155.98" width="4.83" height="239.22"/><rect x="134.88" y="94.06" width="4.83" height="301.14"/><rect x="139.71" y="114.89" width="4.83" height="280.31"/><rect x="144.54" y="63.10" width="4.83" height="332.10"/><rect x="149.38" y="105.04" width="4.83" height="290.16"/><rect x="154.21" y="179.05" width="4.83" height="216.15"/><rect x="159.04" y="172.86" width="4.83" height="222.34"/><rect x="163.87" y="218.03" width="4.83" height="177.17"/><rect x="168.70" y="282.20" width="4.83" height="113.00"/><rect x="173.54" y="285.86" width="4.83" height="109.34"/><rect x="178.37" y="324.14" width="4.83" height="71.06"/><rect x="183.20" y="336.38" width="4.83" height="58.82"/><rect x="188.03" y="333.99" width="4.83" height="61.21"/><rect x="192.86" y="358.19" width="4.83" height="37.01"/><rect x="197.70" y="360.30" width="4.83" height="34.90"/><rect x="202.53" y="366.07" width="4.83" height="29.13"/><rect x="207.36" y="374.23" width="4.83" height="20.97"/><rect x="212.19" y="367.20" width="4.83" height="28.00"/><rect x="217.02" y="372.97" width="4.83" height="22.23"/><rect x="221.86" y="376.34" width="4.83" height="18.86"/><rect x="226.69" y="377.47" width="4.83" height="17.73"/><rect x="231.52" y="376.34" width="4.83" height="18.86"/><rect x="236.35" y="380.00" width="4.83" height="15.20"/><rect x="241.18" y="380.42" width="4.83" height="14.78"/><rect x="246.02" y="379.16" width="4.83" height="16.04"/><rect x="250.85" y="384.51" width="4.83" height="10.69"/><rect x="255.68" y="382.54" width="4.83" height="12.66"/><rect x="260.51" y="381.27" width="4.83" height="13.93"/><rect x="265.34" y="384.51" width="4.83" height="10.69"/><rect x="270.18" y="384.51" width="4.83" height="10.69"/><rect x="275.01" y="387.46" width="4.83" height="7.74"/><rect x="279.84" y="386.19" width="4.83" height="9.01"/><rect x="284.67" y="386.19" width="4.83" height="9.01"/><rect x="289.50" y="388.59" width="4.83" height="6.61"/><rect x="294.34" y="385.35" width="4.83" height="9.85"/><rect x="299.17" y="388.59" width="4.83" height="6.61"/><rect x="304.00" y="387.46" width="4.83" height="7.74"/><rect x="308.83" y="388.59" width="4.83" height="6.61"/><rect x="313.66" y="389.43" width="4.83" height="5.77"/><rect x="318.50" y="389.43" width="4.83" height="5.77"/><rect x="323.33" y="389.43" width="4.83" height="5.77"/><rect x="328.16" y="388.16" width="4.83" height="7.04"/><rect x="332.99" y="391.12" width="4.83" height="4.08"/><rect x="337.82" y="391.12" width="4.83" height="4.08"/><rect x="342.66" y="393.09" width="4.83" height="2.11"/><rect x="347.49" y="391.12" width="4.83" height="4.08"/><rect x="352.32" y="392.39" width="4.83" height="2.81"/><rect x="357.15" y="392.39" width="4.83" height="2.81"/><rect x="361.98" y="391.82" width="4.83" height="3.38"/><rect x="366.82" y="392.67" width="4.83" height="2.53"/><rect x="371.65" y="392.67" width="4.83" height="2.53"/><rect x="376.48" y="391.26" width="4.83" height="3.94"/><rect x="381.31" y="392.95" width="4.83" height="2.25"/><rect x="386.14" y="392.95" width="4.83" height="2.25"/><rect x="390.98" y="393.23" width="4.83" height="1.97"/><rect x="395.81" y="392.39" width="4.83" height="2.81"/><rect x="400.64" y="393.79" width="4.83" height="1.41"/><rect x="405.47" y="393.79" width="4.83" height="1.41"/><rect x="410.30" y="393.79" width="4.83" height="1.41"/><rect x="415.14" y="392.95" width="4.83" height="2.25"/><rect x="419.97" y="394.07" width="4.83" height="1.13"/><rect x="424.80" y="394.36" width="4.83" height="0.84"/><rect x="429.63" y="393.51" width="4.83" height="1.69"/><rect x="434.46" y="394.36" width="4.83" height="0.84"/><rect x="439.30" y="393.79" width="4.83" height="1.41"/><rect x="444.13" y="394.64" width="4.83" height="0.56"/><rect x="448.96" y="394.36" width="4.83" height="0.84"/><rect x="453.79" y="394.36" width="4.83" height="0.84"/><rect x="458.62" y="394.64" width="4.83" height="0.56"/><rect x="463.46" y="394.36" width="4.83" height="0.84"/><rect x="468.29" y="394.80" width="4.83" height="0.40"/><rect x="473.12" y="394.36" width="4.83" height="0.84"/><rect x="477.95" y="394.36" width="4.83" height="0.84"/><rect x="482.78" y="394.80" width="4.83" height="0.40"/><rect x="487.62" y="394.80" width="4.83" height="0.40"/><rect x="492.45" y="394.80" width="4.83" height="0.40"/><rect x="497.28" y="394.80" width="4.83" height="0.40"/><rect x="502.11" y="394.80" width="4.83" height="0.40"/><rect x="506.94" y="394.80" width="4.83" height="0.40"/><rect x="511.78" y="394.80" width="4.83" height="0.40"/><rect x="516.61" y="394.80" width="4.83" height="0.40"/><rect x="521.44" y="394.80" width="4.83" height="0.40"/><rect x="526.27" y="394.80" width="4.83" height="0.40"/><rect x="531.10" y="394.80" width="4.83" height="0.40"/><rect x="535.94" y="394.80" width="4.83" height="0.40"/><rect x="540.77" y="394.80" width="4.83" height="0.40"/><rect x="545.60" y="394.80" width="4.83" height="0.40"/><rect x="550.43" y="394.80" width="4.83" height="0.40"/><rect x="555.26" y="394.80" width="4.83" height="0.40"/><rect x="560.10" y="394.80" width="4.83" height="0.40"/><rect x="564.93" y="394.80" width="4.83" height="0.40"/></g>
<path d="M241.30 43.40V395.20" stroke="#e80000" stroke-width="1.2"/>
<rect x="81.60" y="43.40" width="510.78" height="351.80" fill="none" stroke="#000" stroke-width="1.3"/>
<path d="M81.60 395.20v-5.4M81.60 43.40v5.4" stroke="#000" stroke-width="0.9"/>
<text class="tk" transform="translate(81.60,413.80) scale(1.115,1)" text-anchor="middle">100</text>
<path d="M166.73 395.20v-5.4M166.73 43.40v5.4" stroke="#000" stroke-width="0.9"/>
<text class="tk" transform="translate(166.73,413.80) scale(1.115,1)" text-anchor="middle">200</text>
<path d="M251.86 395.20v-5.4M251.86 43.40v5.4" stroke="#000" stroke-width="0.9"/>
<text class="tk" transform="translate(251.86,413.80) scale(1.115,1)" text-anchor="middle">300</text>
<path d="M336.99 395.20v-5.4M336.99 43.40v5.4" stroke="#000" stroke-width="0.9"/>
<text class="tk" transform="translate(336.99,413.80) scale(1.115,1)" text-anchor="middle">400</text>
<path d="M422.12 395.20v-5.4M422.12 43.40v5.4" stroke="#000" stroke-width="0.9"/>
<text class="tk" transform="translate(422.12,413.80) scale(1.115,1)" text-anchor="middle">500</text>
<path d="M507.25 395.20v-5.4M507.25 43.40v5.4" stroke="#000" stroke-width="0.9"/>
<text class="tk" transform="translate(507.25,413.80) scale(1.115,1)" text-anchor="middle">600</text>
<path d="M592.38 395.20v-5.4M592.38 43.40v5.4" stroke="#000" stroke-width="0.9"/>
<text class="tk" transform="translate(592.38,413.80) scale(1.115,1)" text-anchor="middle">700</text>
<path d="M81.60 395.20h5.4M592.38 395.20h-5.4" stroke="#000" stroke-width="0.9"/>
<text class="tk" transform="translate(76.80,400.90) scale(1.115,1)" text-anchor="end">0</text>
<path d="M81.60 324.84h5.4M592.38 324.84h-5.4" stroke="#000" stroke-width="0.9"/>
<text class="tk" transform="translate(76.80,330.54) scale(1.115,1)" text-anchor="end">500</text>
<path d="M81.60 254.48h5.4M592.38 254.48h-5.4" stroke="#000" stroke-width="0.9"/>
<text class="tk" transform="translate(76.80,260.18) scale(1.115,1)" text-anchor="end">1000</text>
<path d="M81.60 184.12h5.4M592.38 184.12h-5.4" stroke="#000" stroke-width="0.9"/>
<text class="tk" transform="translate(76.80,189.82) scale(1.115,1)" text-anchor="end">1500</text>
<path d="M81.60 113.76h5.4M592.38 113.76h-5.4" stroke="#000" stroke-width="0.9"/>
<text class="tk" transform="translate(76.80,119.46) scale(1.115,1)" text-anchor="end">2000</text>
<path d="M81.60 43.40h5.4M592.38 43.40h-5.4" stroke="#000" stroke-width="0.9"/>
<text class="tk" transform="translate(76.80,49.10) scale(1.115,1)" text-anchor="end">2500</text>
</svg><div class="btn" style="top:518.7px">Add Dataset</div>
<div class="btn" style="top:543.7px">Add all Datasets</div>
<div class="btn" style="top:568.7px">Load</div>
<div class="btn" style="top:593.7px">Save</div>
<div class="btn" style="top:618.7px">Fit ellipse stack (squared)</div>
<div class="btn" style="top:643.7px">Fit ellipse stack (abs)</div>
<div class="btn" style="top:668.7px">Fit circle stack (abs)</div>
<div class="btn" style="top:693.7px">Evaluate</div>
<div class="btn" style="top:718.7px">Export</div>
<div id="rlabel">Radius Offset</div>
<div id="spin"><span style="padding-left:2.3px">0.00</span><svg class="abs" style="right:2.4px;top:2.2px" width="12" height="14" viewBox="0 0 12 14" fill="none" stroke="#222" stroke-width="1.5" stroke-linecap="round" stroke-linejoin="round"><path d="M2.2 5.2L6 1.6L9.8 5.2M2.2 8.6L6 12.2L9.8 8.6"/></svg></div>
<div class="abs" style="left:1662px;top:480px;width:1.5px;height:8px;background:repeating-linear-gradient(to bottom,#7c7470 0 1.5px,transparent 1.5px 3px)"></div>
<svg class="abs" style="left:1656px;top:958px" width="8" height="8" viewBox="0 0 8 8"><g fill="#6e6662"><rect x="5.6" y="1.2" width="1.2" height="1.2"/><rect x="3.6" y="3.6" width="1.2" height="1.2"/><rect x="5.6" y="3.6" width="1.2" height="1.2"/><rect x="1.4" y="5.8" width="1.2" height="1.2"/><rect x="3.6" y="5.8" width="1.2" height="1.2"/></g></svg></div>

</body></html>
